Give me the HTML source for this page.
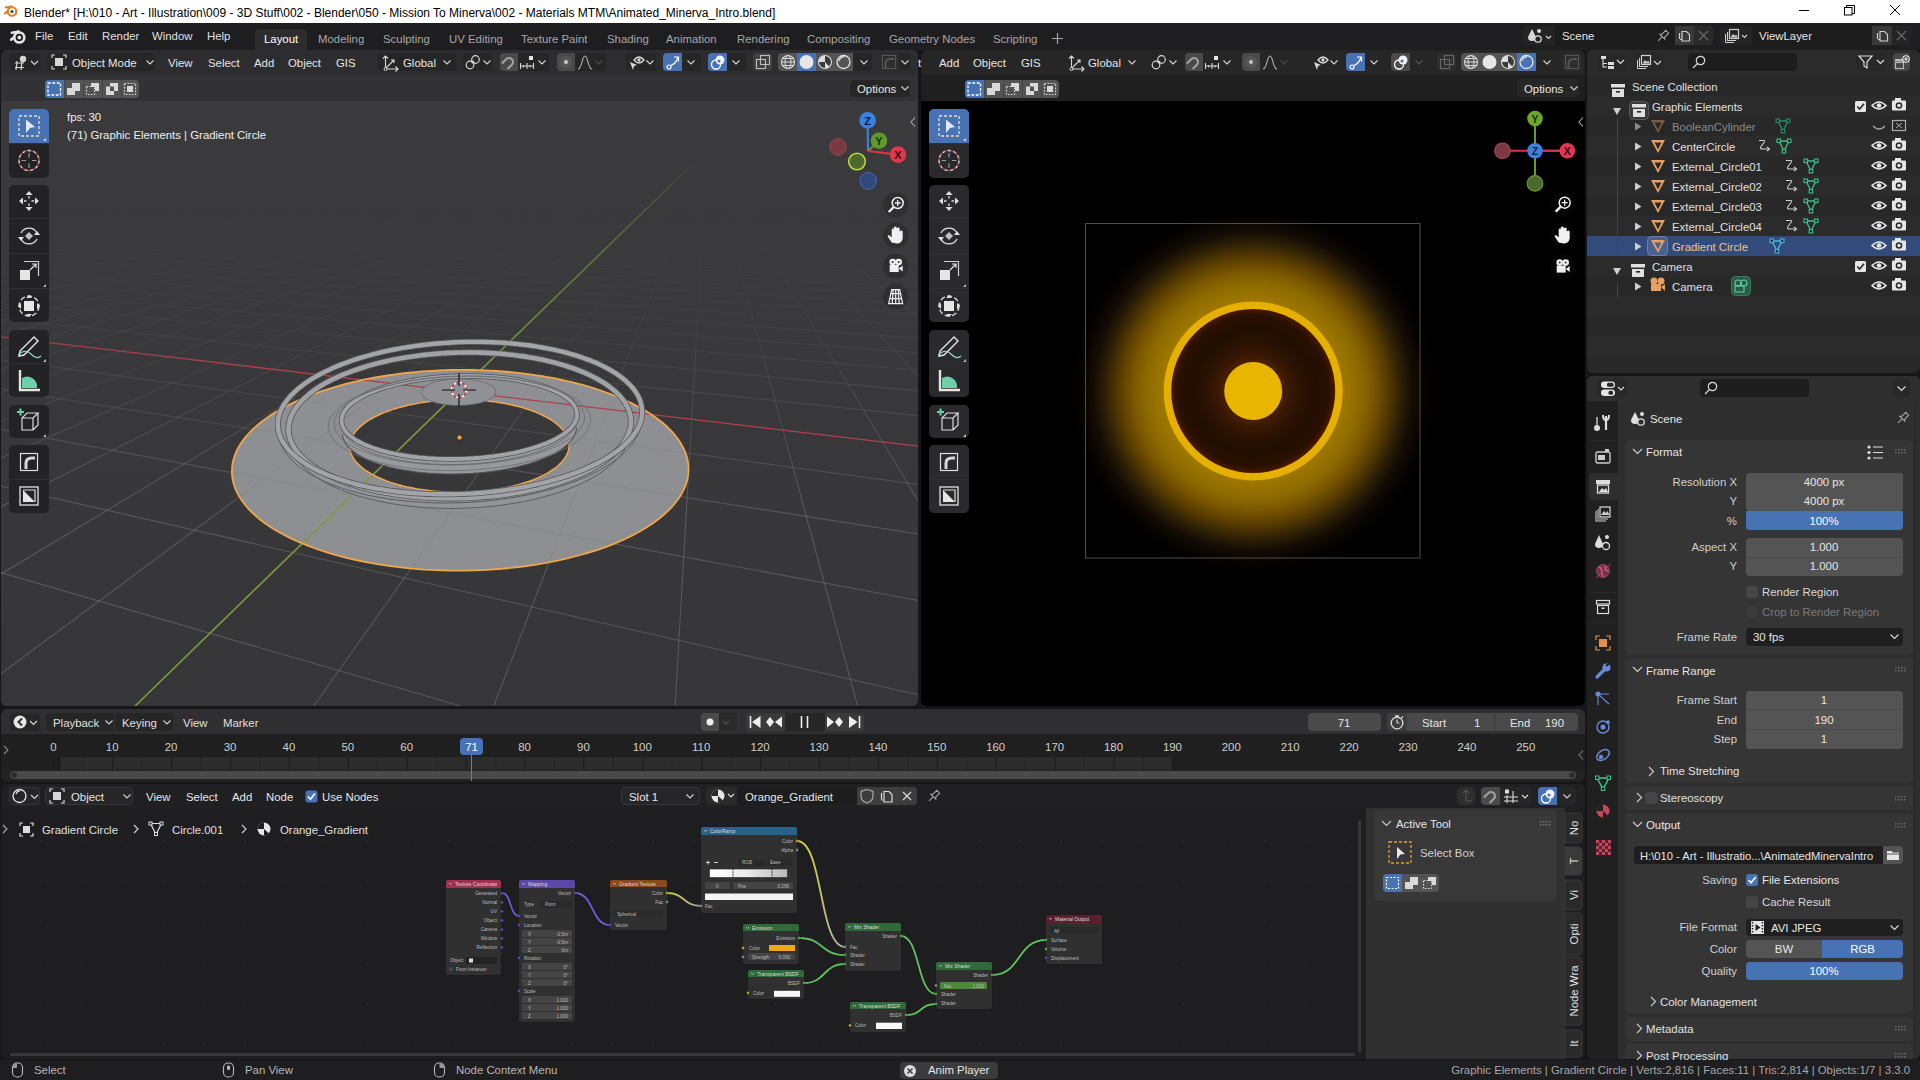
<!DOCTYPE html><html><head><meta charset="utf-8"><style>
html,body{margin:0;padding:0;width:1920px;height:1080px;overflow:hidden;background:#161518;font-family:"Liberation Sans",sans-serif;}
.t{position:absolute;white-space:pre;line-height:1;}
div{box-sizing:border-box;}
svg{overflow:visible}
</style></head><body>
<div style="position:absolute;left:0px;top:0px;width:1920px;height:23px;background:#ffffff;border-radius:0px;"></div>
<svg style="position:absolute;left:0px;top:0px;" width="30" height="23" viewBox="0 0 30 23"><path d="M5.625 7.42 L11.15 6.74" stroke="#e0821e" stroke-width="2.21" stroke-linecap="round"/><path d="M10.725 4.7 L13.275 6.825 L9.875 8.1Z" fill="#e0821e"/><path d="M5.030000000000001 13.370000000000001 L9.28 9.8" stroke="#e0821e" stroke-width="2.21" stroke-linecap="round"/><circle cx="12" cy="11.5" r="4.25" fill="#ffffff" stroke="#e0821e" stroke-width="2.21"/><circle cx="12" cy="11.5" r="1.615" fill="#2a4a6a"/></svg>
<div class="t" style="left:24px;top:6.84px;font-size:12.0px;color:#000;">Blender* [H:\010 - Art - Illustration\009 - 3D Stuff\002 - Blender\050 - Mission To Minerva\002 - Materials MTM\Animated_Minerva_Intro.blend]</div>
<svg style="position:absolute;left:1799px;top:10px;" width="10" height="1" viewBox="0 0 10 1"><rect x="0" y="0" width="10" height="1" fill="#000"/></svg>
<svg style="position:absolute;left:1844px;top:5px;" width="11" height="11" viewBox="0 0 11 11"><rect x="0.5" y="2.5" width="7.5" height="7.5" fill="none" stroke="#000"/><path d="M2.5 2.5 V0.5 H10.5 V8.5 H8" fill="none" stroke="#000"/></svg>
<svg style="position:absolute;left:1890px;top:5px;" width="10" height="10" viewBox="0 0 10 10"><path d="M0 0 L10 10 M10 0 L0 10" stroke="#000" stroke-width="1"/></svg>
<div style="position:absolute;left:0px;top:23px;width:1920px;height:27px;background:#1e1d20;border-radius:0px;"></div>
<svg style="position:absolute;left:0px;top:23px;" width="40" height="27" viewBox="0 0 40 27"><path d="M11.8 9.7 L18.3 8.9" stroke="#e6e6e6" stroke-width="2.6" stroke-linecap="round"/><path d="M17.8 6.5 L20.8 9.0 L16.8 10.5Z" fill="#e6e6e6"/><path d="M11.100000000000001 16.7 L16.1 12.5" stroke="#e6e6e6" stroke-width="2.6" stroke-linecap="round"/><circle cx="19.3" cy="14.5" r="5.0" fill="#171717" stroke="#e6e6e6" stroke-width="2.6"/><circle cx="19.3" cy="14.5" r="1.9" fill="#e6e6e6"/></svg>
<div class="t" style="left:35px;top:31.35px;font-size:11.4px;color:#e0e0e0;">File</div>
<div class="t" style="left:68px;top:31.35px;font-size:11.4px;color:#e0e0e0;">Edit</div>
<div class="t" style="left:102px;top:31.35px;font-size:11.4px;color:#e0e0e0;">Render</div>
<div class="t" style="left:152px;top:31.35px;font-size:11.4px;color:#e0e0e0;">Window</div>
<div class="t" style="left:207px;top:31.35px;font-size:11.4px;color:#e0e0e0;">Help</div>
<div style="position:absolute;left:255px;top:29px;width:52px;height:21px;background:#2c2c2c;border-radius:4px;border-bottom-left-radius:0;border-bottom-right-radius:0"></div>
<div class="t" style="left:264px;top:34.35px;font-size:11.4px;color:#ffffff;">Layout</div>
<div class="t" style="left:318px;top:34.35px;font-size:11.4px;color:#a8a8a8;">Modeling</div>
<div class="t" style="left:383px;top:34.35px;font-size:11.4px;color:#a8a8a8;">Sculpting</div>
<div class="t" style="left:449px;top:34.35px;font-size:11.4px;color:#a8a8a8;">UV Editing</div>
<div class="t" style="left:521px;top:34.35px;font-size:11.4px;color:#a8a8a8;">Texture Paint</div>
<div class="t" style="left:607px;top:34.35px;font-size:11.4px;color:#a8a8a8;">Shading</div>
<div class="t" style="left:666px;top:34.35px;font-size:11.4px;color:#a8a8a8;">Animation</div>
<div class="t" style="left:737px;top:34.35px;font-size:11.4px;color:#a8a8a8;">Rendering</div>
<div class="t" style="left:807px;top:34.35px;font-size:11.4px;color:#a8a8a8;">Compositing</div>
<div class="t" style="left:889px;top:34.35px;font-size:11.4px;color:#a8a8a8;">Geometry Nodes</div>
<div class="t" style="left:993px;top:34.35px;font-size:11.4px;color:#a8a8a8;">Scripting</div>
<svg style="position:absolute;left:1052px;top:33px;" width="11" height="11" viewBox="0 0 11 11"><path d="M5.5 0 V11 M0 5.5 H11" stroke="#a8a8a8" stroke-width="1.2"/></svg>
<div style="position:absolute;left:1523px;top:26px;width:190px;height:19px;background:#242424;border-radius:4px;"></div>
<div style="position:absolute;left:1555px;top:26px;width:120px;height:19px;background:#1c1c1c;border-radius:0px;"></div>
<div style="position:absolute;left:1675px;top:26px;width:19px;height:19px;background:#383838;border-radius:0px;"></div>
<div style="position:absolute;left:1694px;top:26px;width:19px;height:19px;background:#2a2a2a;border-radius:4px;border-top-left-radius:0;border-bottom-left-radius:0"></div>
<svg style="position:absolute;left:1527px;top:28px;" width="28" height="16" viewBox="0 0 28 16"><path d="M5 1 L9 9 A4 4 0 0 1 1 9 Z" fill="#d8d8d8"/><circle cx="12" cy="3" r="2" fill="#d8d8d8"/><circle cx="11" cy="11" r="3.2" fill="#242424" stroke="#d8d8d8" stroke-width="1.3"/><path d="M19 8 L21.5 10.5 L24 8" fill="none" stroke="#d8d8d8" stroke-width="1.1"/></svg>
<div class="t" style="left:1562px;top:31.35px;font-size:11.4px;color:#e6e6e6;">Scene</div>
<svg style="position:absolute;left:1656px;top:29px;" width="14" height="14" viewBox="0 0 14 14"><g transform="rotate(45 7 7)"><path d="M5 1 H9 V6.5 L10.5 8 H3.5 L5 6.5Z" fill="none" stroke="#a0a0a0" stroke-width="1.1"/><path d="M7 8 V14" stroke="#a0a0a0" stroke-width="1.1"/></g></svg>
<svg style="position:absolute;left:1678px;top:29px;" width="13" height="13" viewBox="0 0 13 13"><path d="M4 2.5 H8.5 L11.5 5.5 V12 H4 Z M1.5 4 V10 M2 10.5 H3.5" fill="none" stroke="#cfcfcf" stroke-width="1.2"/></svg>
<svg style="position:absolute;left:1699px;top:31px;" width="9" height="9" viewBox="0 0 9 9"><path d="M0 0 L9 9 M9 0 L0 9" stroke="#6a6a6a" stroke-width="1.1"/></svg>
<div style="position:absolute;left:1720px;top:26px;width:191px;height:19px;background:#242424;border-radius:4px;"></div>
<div style="position:absolute;left:1752px;top:26px;width:120px;height:19px;background:#1c1c1c;border-radius:0px;"></div>
<div style="position:absolute;left:1872px;top:26px;width:20px;height:19px;background:#383838;border-radius:0px;"></div>
<svg style="position:absolute;left:1725px;top:29px;" width="26" height="14" viewBox="0 0 26 14"><rect x="4.5" y="0.5" width="9" height="9" fill="none" stroke="#d0d0d0" stroke-width="1.2"/><path d="M2.5 3 V11.5 H11" fill="none" stroke="#d0d0d0" stroke-width="1.1"/><path d="M0.5 5 V13.5 H9" fill="none" stroke="#d0d0d0" stroke-width="1"/><path d="M5.5 8.5 L8 5 L10 7 L11 5.5 L13 8.5Z" fill="#d0d0d0"/><path d="M17 6 L19.5 8.5 L22 6" fill="none" stroke="#d0d0d0" stroke-width="1.1"/></svg>
<div class="t" style="left:1759px;top:31.35px;font-size:11.4px;color:#e6e6e6;">ViewLayer</div>
<svg style="position:absolute;left:1876px;top:29px;" width="13" height="13" viewBox="0 0 13 13"><path d="M4 2.5 H8.5 L11.5 5.5 V12 H4 Z M1.5 4 V10 M2 10.5 H3.5" fill="none" stroke="#cfcfcf" stroke-width="1.2"/></svg>
<svg style="position:absolute;left:1897px;top:31px;" width="9" height="9" viewBox="0 0 9 9"><path d="M0 0 L9 9 M9 0 L0 9" stroke="#6a6a6a" stroke-width="1.1"/></svg>
<div style="position:absolute;left:1px;top:50px;width:917px;height:656px;background:#3b3b3b;border-radius:6px;"></div>
<div style="position:absolute;left:921px;top:50px;width:664px;height:656px;background:#000000;border-radius:6px;"></div>
<div style="position:absolute;left:1587px;top:50px;width:333px;height:323px;background:#282828;border-radius:6px;"></div>
<div style="position:absolute;left:1587px;top:376px;width:333px;height:683px;background:#2b2b2b;border-radius:6px;"></div>
<div style="position:absolute;left:1px;top:709px;width:1584px;height:73px;background:#1d1d1d;border-radius:6px;"></div>
<div style="position:absolute;left:1px;top:784px;width:1584px;height:275px;background:#1e1d20;border-radius:6px;"></div>
<div style="position:absolute;left:0px;top:1060px;width:1920px;height:20px;background:#1e1d20;border-radius:0px;"></div>
<div style="position:absolute;left:1px;top:50px;width:917px;height:656px;background:linear-gradient(#3b3a3d,#363638);border-radius:6px;"></div>
<svg style="position:absolute;left:1px;top:50px;overflow:hidden" width="917" height="656" viewBox="0 0 917 656"><path d="M687.5 421.8 L687.5 417.6 L687.2 413.5 L686.5 409.4 L685.4 405.4 L684.0 401.5 L682.2 397.7 L680.2 394.0 L677.8 390.3 L675.2 386.7 L672.3 383.2 L669.2 379.8 L665.8 376.5 L662.2 373.3 L658.3 370.2 L654.3 367.2 L650.1 364.3 L645.7 361.5 L641.1 358.8 L636.4 356.2 L631.5 353.6 L626.5 351.2 L621.4 348.9 L616.2 346.7 L610.8 344.5 L605.3 342.5 L599.8 340.5 L594.1 338.7 L588.4 336.9 L582.5 335.2 L576.6 333.7 L570.7 332.2 L564.7 330.8 L558.6 329.5 L552.5 328.2 L546.3 327.1 L540.1 326.0 L533.8 325.1 L527.5 324.2 L521.2 323.4 L514.8 322.7 L508.4 322.0 L502.0 321.5 L495.6 321.0 L489.2 320.6 L482.8 320.3 L476.3 320.1 L469.8 320.0 L463.4 319.9 L456.9 319.9 L450.4 320.0 L444.0 320.2 L437.5 320.5 L431.1 320.8 L424.7 321.2 L418.3 321.7 L411.9 322.3 L405.5 323.0 L399.2 323.7 L392.9 324.6 L386.6 325.5 L380.3 326.5 L374.1 327.5 L368.0 328.7 L361.8 329.9 L355.8 331.3 L349.8 332.7 L343.8 334.2 L338.0 335.8 L332.1 337.5 L326.4 339.3 L320.8 341.1 L315.2 343.1 L309.7 345.1 L304.4 347.2 L299.1 349.5 L294.0 351.8 L289.0 354.2 L284.1 356.7 L279.3 359.3 L274.7 362.0 L270.3 364.8 L266.1 367.7 L262.0 370.6 L258.1 373.7 L254.4 376.9 L250.9 380.1 L247.7 383.5 L244.7 386.9 L242.0 390.4 L239.5 394.0 L237.3 397.7 L235.4 401.5 L233.8 405.3 L232.6 409.3 L231.6 413.2 L231.1 417.3 L230.9 421.4 L231.1 425.6 L231.7 429.8 L232.7 434.0 L234.2 438.3 L236.1 442.6 L238.5 446.9 L241.3 451.2 L244.6 455.5 L248.4 459.8 L252.7 464.0 L257.5 468.3 L262.8 472.4 L268.7 476.5 L275.0 480.4 L281.9 484.3 L289.3 488.1 L297.1 491.7 L305.5 495.2 L314.3 498.5 L323.6 501.7 L333.4 504.6 L343.5 507.3 L354.0 509.9 L364.9 512.1 L376.2 514.2 L387.7 515.9 L399.5 517.4 L411.4 518.7 L423.6 519.6 L435.9 520.2 L448.3 520.6 L460.7 520.6 L473.2 520.4 L485.5 519.9 L497.8 519.0 L510.0 517.9 L521.9 516.5 L533.7 514.8 L545.1 512.9 L556.3 510.7 L567.2 508.2 L577.6 505.5 L587.7 502.7 L597.4 499.6 L606.6 496.3 L615.3 492.8 L623.6 489.2 L631.4 485.4 L638.6 481.5 L645.4 477.5 L651.6 473.4 L657.3 469.3 L662.5 465.0 L667.2 460.7 L671.4 456.4 L675.0 452.0 L678.2 447.7 L680.9 443.3 L683.1 438.9 L684.8 434.6 L686.2 430.3 L687.0 426.0Z M565.1 406.1 L564.0 407.9 L562.6 409.8 L561.1 411.6 L559.4 413.4 L557.5 415.2 L555.4 417.0 L553.1 418.8 L550.6 420.5 L548.0 422.2 L545.1 423.8 L542.1 425.4 L538.9 426.9 L535.6 428.4 L532.0 429.9 L528.3 431.2 L524.5 432.5 L520.5 433.8 L516.3 434.9 L512.1 436.0 L507.7 437.0 L503.2 437.9 L498.6 438.8 L493.9 439.5 L489.1 440.2 L484.2 440.8 L479.3 441.3 L474.3 441.6 L469.3 441.9 L464.3 442.1 L459.2 442.2 L454.2 442.2 L449.2 442.1 L444.1 441.9 L439.2 441.6 L434.2 441.2 L429.4 440.7 L424.5 440.1 L419.8 439.4 L415.2 438.7 L410.7 437.8 L406.2 436.9 L401.9 435.9 L397.8 434.8 L393.7 433.6 L389.8 432.4 L386.1 431.1 L382.5 429.7 L379.1 428.3 L375.8 426.8 L372.8 425.2 L369.9 423.6 L367.2 422.0 L364.6 420.3 L362.3 418.6 L360.1 416.9 L358.2 415.1 L356.4 413.3 L354.8 411.5 L353.4 409.7 L352.2 407.9 L351.2 406.0 L350.3 404.2 L349.7 402.3 L349.2 400.4 L348.9 398.6 L348.8 396.8 L348.9 394.9 L349.1 393.1 L349.5 391.3 L350.0 389.5 L350.8 387.7 L351.6 386.0 L352.6 384.3 L353.8 382.6 L355.1 380.9 L356.6 379.3 L358.1 377.7 L359.9 376.1 L361.7 374.6 L363.6 373.1 L365.7 371.6 L367.9 370.2 L370.2 368.9 L372.6 367.5 L375.1 366.2 L377.7 365.0 L380.3 363.8 L383.1 362.6 L385.9 361.5 L388.8 360.5 L391.8 359.4 L394.9 358.5 L398.0 357.6 L401.2 356.7 L404.4 355.9 L407.7 355.1 L411.1 354.4 L414.5 353.7 L417.9 353.1 L421.4 352.5 L424.9 352.0 L428.4 351.5 L432.0 351.1 L435.6 350.7 L439.2 350.4 L442.8 350.1 L446.5 349.9 L450.1 349.7 L453.8 349.6 L457.5 349.6 L461.1 349.6 L464.8 349.6 L468.5 349.7 L472.1 349.9 L475.8 350.1 L479.4 350.3 L483.0 350.6 L486.6 351.0 L490.2 351.4 L493.7 351.8 L497.2 352.4 L500.6 352.9 L504.1 353.5 L507.4 354.2 L510.8 354.9 L514.1 355.7 L517.3 356.5 L520.4 357.4 L523.5 358.3 L526.6 359.2 L529.5 360.3 L532.4 361.3 L535.2 362.4 L538.0 363.6 L540.6 364.8 L543.1 366.0 L545.6 367.3 L547.9 368.7 L550.2 370.0 L552.3 371.5 L554.3 372.9 L556.2 374.4 L558.0 376.0 L559.6 377.5 L561.2 379.1 L562.5 380.8 L563.8 382.5 L564.9 384.2 L565.8 385.9 L566.6 387.6 L567.2 389.4 L567.7 391.2 L568.0 393.0 L568.1 394.9 L568.0 396.7 L567.8 398.6 L567.4 400.5 L566.8 402.3 L566.1 404.2Z" fill="#8e8f93" fill-rule="evenodd"/></svg>
<svg style="position:absolute;left:1px;top:50px;overflow:hidden" width="917" height="656" viewBox="0 0 917 656"><defs><linearGradient id="gfade" gradientUnits="userSpaceOnUse" x1="0" y1="160" x2="0" y2="460"><stop offset="0" stop-color="#fff" stop-opacity="0"/><stop offset="0.45" stop-color="#fff" stop-opacity="0.28"/><stop offset="1" stop-color="#fff" stop-opacity="1"/></linearGradient><mask id="gmask" maskUnits="userSpaceOnUse" x="0" y="0" width="918" height="656"><rect x="0" y="0" width="918" height="656" fill="url(#gfade)"/></mask><linearGradient id="axg" gradientUnits="userSpaceOnUse" x1="0" y1="105" x2="0" y2="330"><stop offset="0" stop-color="#7d9a3c" stop-opacity="0"/><stop offset="0.45" stop-color="#7d9a3c" stop-opacity="0.6"/><stop offset="1" stop-color="#7d9a3c"/></linearGradient><linearGradient id="axr" gradientUnits="userSpaceOnUse" x1="0" y1="105" x2="0" y2="330"><stop offset="0" stop-color="#b0404e" stop-opacity="0"/><stop offset="1" stop-color="#b0404e"/></linearGradient></defs><g mask="url(#gmask)"><line x1="-1.0" y1="141.7" x2="24.8" y2="140.2" stroke="#808080" stroke-width="1.1" opacity="0.45"/><line x1="-1.0" y1="142.3" x2="32.1" y2="140.3" stroke="#808080" stroke-width="1.1" opacity="0.45"/><line x1="-1.0" y1="142.8" x2="39.4" y2="140.4" stroke="#808080" stroke-width="1.1" opacity="0.45"/><line x1="-1.0" y1="143.4" x2="46.9" y2="140.5" stroke="#808080" stroke-width="1.1" opacity="0.45"/><line x1="-1.0" y1="144.0" x2="54.4" y2="140.6" stroke="#808080" stroke-width="1.1" opacity="0.45"/><line x1="-1.0" y1="144.7" x2="62.0" y2="140.7" stroke="#808080" stroke-width="1.1" opacity="0.45"/><line x1="-1.0" y1="145.3" x2="69.7" y2="140.8" stroke="#808080" stroke-width="1.1" opacity="0.45"/><line x1="-1.0" y1="146.0" x2="77.5" y2="140.9" stroke="#808080" stroke-width="1.1" opacity="0.45"/><line x1="-1.0" y1="146.7" x2="85.4" y2="141.0" stroke="#808080" stroke-width="1.1" opacity="0.45"/><line x1="-1.0" y1="147.4" x2="93.3" y2="141.1" stroke="#808080" stroke-width="1.1" opacity="0.45"/><line x1="-1.0" y1="148.1" x2="101.3" y2="141.2" stroke="#808080" stroke-width="1.1" opacity="0.45"/><line x1="-1.0" y1="148.9" x2="109.4" y2="141.3" stroke="#808080" stroke-width="1.1" opacity="0.45"/><line x1="-1.0" y1="149.7" x2="117.7" y2="141.4" stroke="#808080" stroke-width="1.1" opacity="0.45"/><line x1="-1.0" y1="150.6" x2="126.0" y2="141.5" stroke="#808080" stroke-width="1.1" opacity="0.45"/><line x1="-1.0" y1="151.5" x2="134.4" y2="141.6" stroke="#808080" stroke-width="1.1" opacity="0.45"/><line x1="-1.0" y1="152.4" x2="142.8" y2="141.7" stroke="#808080" stroke-width="1.1" opacity="0.45"/><line x1="-1.0" y1="153.3" x2="151.4" y2="141.8" stroke="#808080" stroke-width="1.1" opacity="0.45"/><line x1="-1.0" y1="154.3" x2="160.1" y2="141.9" stroke="#808080" stroke-width="1.1" opacity="0.45"/><line x1="-1.0" y1="155.3" x2="168.9" y2="142.0" stroke="#808080" stroke-width="1.1" opacity="0.45"/><line x1="-1.0" y1="156.4" x2="177.8" y2="142.1" stroke="#808080" stroke-width="1.1" opacity="0.45"/><line x1="-1.0" y1="157.6" x2="186.7" y2="142.3" stroke="#808080" stroke-width="1.1" opacity="0.45"/><line x1="-1.0" y1="158.7" x2="195.8" y2="142.4" stroke="#808080" stroke-width="1.1" opacity="0.45"/><line x1="-1.0" y1="160.0" x2="205.0" y2="142.5" stroke="#808080" stroke-width="1.1" opacity="0.45"/><line x1="-1.0" y1="161.3" x2="214.3" y2="142.6" stroke="#808080" stroke-width="1.1" opacity="0.45"/><line x1="-1.0" y1="162.7" x2="223.7" y2="142.7" stroke="#808080" stroke-width="1.1" opacity="0.45"/><line x1="-1.0" y1="164.1" x2="233.3" y2="142.8" stroke="#808080" stroke-width="1.1" opacity="0.45"/><line x1="-1.0" y1="165.6" x2="242.9" y2="143.0" stroke="#808080" stroke-width="1.1" opacity="0.45"/><line x1="-1.0" y1="167.2" x2="252.6" y2="143.1" stroke="#808080" stroke-width="1.1" opacity="0.45"/><line x1="-1.0" y1="168.9" x2="262.5" y2="143.2" stroke="#808080" stroke-width="1.1" opacity="0.45"/><line x1="-1.0" y1="170.7" x2="272.5" y2="143.3" stroke="#808080" stroke-width="1.1" opacity="0.45"/><line x1="-1.0" y1="172.6" x2="282.6" y2="143.5" stroke="#808080" stroke-width="1.1" opacity="0.45"/><line x1="-1.0" y1="174.6" x2="292.8" y2="143.6" stroke="#808080" stroke-width="1.1" opacity="0.45"/><line x1="-1.0" y1="176.8" x2="303.2" y2="143.7" stroke="#808080" stroke-width="1.1" opacity="0.45"/><line x1="-1.0" y1="179.1" x2="313.7" y2="143.9" stroke="#808080" stroke-width="1.1" opacity="0.45"/><line x1="-1.0" y1="181.5" x2="324.3" y2="144.0" stroke="#808080" stroke-width="1.1" opacity="0.45"/><line x1="-1.0" y1="184.2" x2="335.1" y2="144.1" stroke="#808080" stroke-width="1.1" opacity="0.45"/><line x1="-1.0" y1="187.0" x2="346.0" y2="144.3" stroke="#808080" stroke-width="1.1" opacity="0.45"/><line x1="-1.0" y1="190.0" x2="357.0" y2="144.4" stroke="#808080" stroke-width="1.1" opacity="0.45"/><line x1="-1.0" y1="193.3" x2="368.2" y2="144.6" stroke="#808080" stroke-width="1.1" opacity="0.45"/><line x1="-1.0" y1="196.9" x2="379.5" y2="144.7" stroke="#808080" stroke-width="1.1" opacity="0.45"/><line x1="-1.0" y1="200.7" x2="391.0" y2="144.8" stroke="#808080" stroke-width="1.1" opacity="0.45"/><line x1="-1.0" y1="204.9" x2="402.6" y2="145.0" stroke="#808080" stroke-width="1.1" opacity="0.45"/><line x1="-1.0" y1="209.5" x2="414.4" y2="145.1" stroke="#808080" stroke-width="1.1" opacity="0.45"/><line x1="-1.0" y1="214.6" x2="426.3" y2="145.3" stroke="#808080" stroke-width="1.1" opacity="0.45"/><line x1="-1.0" y1="220.1" x2="438.4" y2="145.4" stroke="#808080" stroke-width="1.1" opacity="0.45"/><line x1="-1.0" y1="226.3" x2="450.6" y2="145.6" stroke="#808080" stroke-width="1.1" opacity="0.45"/><line x1="-1.0" y1="233.2" x2="463.1" y2="145.8" stroke="#808080" stroke-width="1.1" opacity="0.45"/><line x1="-1.0" y1="241.0" x2="475.7" y2="145.9" stroke="#808080" stroke-width="1.1" opacity="0.45"/><line x1="-1.0" y1="249.8" x2="488.4" y2="146.1" stroke="#808080" stroke-width="1.1" opacity="0.45"/><line x1="-1.0" y1="259.8" x2="501.4" y2="146.2" stroke="#808080" stroke-width="1.1" opacity="0.45"/><line x1="-1.0" y1="271.4" x2="514.5" y2="146.4" stroke="#808080" stroke-width="1.1" opacity="0.45"/><line x1="-1.0" y1="284.9" x2="527.8" y2="146.6" stroke="#808080" stroke-width="1.1" opacity="0.45"/><line x1="-1.0" y1="300.7" x2="541.3" y2="146.7" stroke="#808080" stroke-width="1.1" opacity="0.45"/><line x1="-1.0" y1="319.7" x2="555.0" y2="146.9" stroke="#808080" stroke-width="1.1" opacity="0.45"/><line x1="-1.0" y1="342.8" x2="568.8" y2="147.1" stroke="#808080" stroke-width="1.1" opacity="0.45"/><line x1="-1.0" y1="371.6" x2="582.9" y2="147.3" stroke="#808080" stroke-width="1.1" opacity="0.45"/><line x1="-1.0" y1="408.4" x2="597.2" y2="147.5" stroke="#808080" stroke-width="1.1" opacity="0.45"/><line x1="-1.0" y1="457.1" x2="611.7" y2="147.6" stroke="#808080" stroke-width="1.1" opacity="0.45"/><line x1="-1.0" y1="524.6" x2="626.4" y2="147.8" stroke="#808080" stroke-width="1.1" opacity="0.45"/><line x1="-1.0" y1="624.5" x2="641.3" y2="148.0" stroke="#808080" stroke-width="1.1" opacity="0.45"/><line x1="312.8" y1="656.0" x2="671.9" y2="148.4" stroke="#808080" stroke-width="1.1" opacity="0.45"/><line x1="492.8" y1="656.0" x2="687.5" y2="148.6" stroke="#808080" stroke-width="1.1" opacity="0.45"/><line x1="674.1" y1="656.0" x2="703.4" y2="148.8" stroke="#808080" stroke-width="1.1" opacity="0.45"/><line x1="856.6" y1="656.0" x2="719.5" y2="149.0" stroke="#808080" stroke-width="1.1" opacity="0.45"/><line x1="917.0" y1="450.6" x2="735.8" y2="149.2" stroke="#808080" stroke-width="1.1" opacity="0.45"/><line x1="917.0" y1="325.6" x2="752.4" y2="149.4" stroke="#808080" stroke-width="1.1" opacity="0.45"/><line x1="917.0" y1="266.0" x2="769.3" y2="149.6" stroke="#808080" stroke-width="1.1" opacity="0.45"/><line x1="917.0" y1="231.1" x2="786.4" y2="149.9" stroke="#808080" stroke-width="1.1" opacity="0.45"/><line x1="917.0" y1="208.2" x2="803.8" y2="150.1" stroke="#808080" stroke-width="1.1" opacity="0.45"/><line x1="917.0" y1="192.0" x2="821.5" y2="150.3" stroke="#808080" stroke-width="1.1" opacity="0.45"/><line x1="917.0" y1="179.9" x2="839.5" y2="150.5" stroke="#808080" stroke-width="1.1" opacity="0.45"/><line x1="917.0" y1="170.6" x2="857.8" y2="150.8" stroke="#808080" stroke-width="1.1" opacity="0.45"/><line x1="917.0" y1="163.2" x2="876.4" y2="151.0" stroke="#808080" stroke-width="1.1" opacity="0.45"/><line x1="917.0" y1="157.1" x2="895.3" y2="151.2" stroke="#808080" stroke-width="1.1" opacity="0.45"/><line x1="917.0" y1="152.1" x2="914.5" y2="151.5" stroke="#808080" stroke-width="1.1" opacity="0.45"/><line x1="-1.0" y1="522.3" x2="459.9" y2="656.0" stroke="#808080" stroke-width="1.1" opacity="0.45"/><line x1="-1.0" y1="435.9" x2="917.0" y2="644.8" stroke="#808080" stroke-width="1.1" opacity="0.45"/><line x1="-1.0" y1="379.4" x2="917.0" y2="550.5" stroke="#808080" stroke-width="1.1" opacity="0.45"/><line x1="-1.0" y1="339.4" x2="917.0" y2="484.0" stroke="#808080" stroke-width="1.1" opacity="0.45"/><line x1="-1.0" y1="309.7" x2="917.0" y2="434.5" stroke="#808080" stroke-width="1.1" opacity="0.45"/><line x1="-1.0" y1="268.5" x2="917.0" y2="365.8" stroke="#808080" stroke-width="1.1" opacity="0.45"/><line x1="-1.0" y1="253.6" x2="917.0" y2="340.9" stroke="#808080" stroke-width="1.1" opacity="0.45"/><line x1="-1.0" y1="241.2" x2="917.0" y2="320.3" stroke="#808080" stroke-width="1.1" opacity="0.45"/><line x1="-1.0" y1="230.8" x2="917.0" y2="302.9" stroke="#808080" stroke-width="1.1" opacity="0.45"/><line x1="-1.0" y1="221.8" x2="917.0" y2="288.1" stroke="#808080" stroke-width="1.1" opacity="0.45"/><line x1="-1.0" y1="214.1" x2="917.0" y2="275.2" stroke="#808080" stroke-width="1.1" opacity="0.45"/><line x1="-1.0" y1="207.4" x2="917.0" y2="264.0" stroke="#808080" stroke-width="1.1" opacity="0.45"/><line x1="-1.0" y1="201.4" x2="917.0" y2="254.1" stroke="#808080" stroke-width="1.1" opacity="0.45"/><line x1="-1.0" y1="196.2" x2="917.0" y2="245.3" stroke="#808080" stroke-width="1.1" opacity="0.45"/><line x1="-1.0" y1="191.4" x2="917.0" y2="237.4" stroke="#808080" stroke-width="1.1" opacity="0.45"/><line x1="-1.0" y1="187.2" x2="917.0" y2="230.4" stroke="#808080" stroke-width="1.1" opacity="0.45"/><line x1="-1.0" y1="183.4" x2="917.0" y2="224.0" stroke="#808080" stroke-width="1.1" opacity="0.45"/><line x1="-1.0" y1="179.9" x2="917.0" y2="218.2" stroke="#808080" stroke-width="1.1" opacity="0.45"/><line x1="-1.0" y1="176.7" x2="917.0" y2="212.9" stroke="#808080" stroke-width="1.1" opacity="0.45"/><line x1="-1.0" y1="173.8" x2="917.0" y2="208.1" stroke="#808080" stroke-width="1.1" opacity="0.45"/><line x1="-1.0" y1="171.2" x2="917.0" y2="203.6" stroke="#808080" stroke-width="1.1" opacity="0.45"/><line x1="-1.0" y1="168.7" x2="917.0" y2="199.5" stroke="#808080" stroke-width="1.1" opacity="0.45"/><line x1="-1.0" y1="166.4" x2="917.0" y2="195.7" stroke="#808080" stroke-width="1.1" opacity="0.45"/><line x1="-1.0" y1="164.3" x2="917.0" y2="192.2" stroke="#808080" stroke-width="1.1" opacity="0.45"/><line x1="-1.0" y1="162.3" x2="917.0" y2="188.9" stroke="#808080" stroke-width="1.1" opacity="0.45"/><line x1="-1.0" y1="160.5" x2="917.0" y2="185.8" stroke="#808080" stroke-width="1.1" opacity="0.45"/><line x1="-1.0" y1="158.8" x2="917.0" y2="183.0" stroke="#808080" stroke-width="1.1" opacity="0.45"/><line x1="-1.0" y1="157.2" x2="917.0" y2="180.3" stroke="#808080" stroke-width="1.1" opacity="0.45"/><line x1="-1.0" y1="155.6" x2="917.0" y2="177.8" stroke="#808080" stroke-width="1.1" opacity="0.45"/><line x1="-1.0" y1="154.2" x2="917.0" y2="175.4" stroke="#808080" stroke-width="1.1" opacity="0.45"/><line x1="-1.0" y1="152.9" x2="917.0" y2="173.2" stroke="#808080" stroke-width="1.1" opacity="0.45"/><line x1="-1.0" y1="151.6" x2="917.0" y2="171.1" stroke="#808080" stroke-width="1.1" opacity="0.45"/><line x1="-1.0" y1="150.4" x2="917.0" y2="169.1" stroke="#808080" stroke-width="1.1" opacity="0.45"/><line x1="-1.0" y1="149.3" x2="917.0" y2="167.2" stroke="#808080" stroke-width="1.1" opacity="0.45"/><line x1="-1.0" y1="148.2" x2="917.0" y2="165.4" stroke="#808080" stroke-width="1.1" opacity="0.45"/><line x1="-1.0" y1="147.2" x2="917.0" y2="163.7" stroke="#808080" stroke-width="1.1" opacity="0.45"/><line x1="-1.0" y1="146.2" x2="917.0" y2="162.1" stroke="#808080" stroke-width="1.1" opacity="0.45"/><line x1="-1.0" y1="145.3" x2="917.0" y2="160.5" stroke="#808080" stroke-width="1.1" opacity="0.45"/><line x1="-1.0" y1="144.4" x2="917.0" y2="159.1" stroke="#808080" stroke-width="1.1" opacity="0.45"/><line x1="-1.0" y1="143.6" x2="917.0" y2="157.7" stroke="#808080" stroke-width="1.1" opacity="0.45"/><line x1="-1.0" y1="142.8" x2="917.0" y2="156.3" stroke="#808080" stroke-width="1.1" opacity="0.45"/><line x1="-1.0" y1="142.0" x2="917.0" y2="155.0" stroke="#808080" stroke-width="1.1" opacity="0.45"/><line x1="5.4" y1="141.3" x2="917.0" y2="153.8" stroke="#808080" stroke-width="1.1" opacity="0.45"/><line x1="15.2" y1="140.8" x2="917.0" y2="152.6" stroke="#808080" stroke-width="1.1" opacity="0.45"/><line x1="24.8" y1="140.2" x2="917.0" y2="151.5" stroke="#808080" stroke-width="1.1" opacity="0.45"/></g><line x1="-1.0" y1="286.7" x2="917.0" y2="396.2" stroke="url(#axr)" stroke-width="1.3" opacity="1"/><line x1="134.1" y1="656.0" x2="694.3" y2="111.4" stroke="url(#axg)" stroke-width="1.6" opacity="1"/></svg>
<svg style="position:absolute;left:1px;top:50px;overflow:hidden" width="917" height="656" viewBox="0 0 917 656"><path d="M687.5 421.8 L687.5 417.6 L687.2 413.5 L686.5 409.4 L685.4 405.4 L684.0 401.5 L682.2 397.7 L680.2 394.0 L677.8 390.3 L675.2 386.7 L672.3 383.2 L669.2 379.8 L665.8 376.5 L662.2 373.3 L658.3 370.2 L654.3 367.2 L650.1 364.3 L645.7 361.5 L641.1 358.8 L636.4 356.2 L631.5 353.6 L626.5 351.2 L621.4 348.9 L616.2 346.7 L610.8 344.5 L605.3 342.5 L599.8 340.5 L594.1 338.7 L588.4 336.9 L582.5 335.2 L576.6 333.7 L570.7 332.2 L564.7 330.8 L558.6 329.5 L552.5 328.2 L546.3 327.1 L540.1 326.0 L533.8 325.1 L527.5 324.2 L521.2 323.4 L514.8 322.7 L508.4 322.0 L502.0 321.5 L495.6 321.0 L489.2 320.6 L482.8 320.3 L476.3 320.1 L469.8 320.0 L463.4 319.9 L456.9 319.9 L450.4 320.0 L444.0 320.2 L437.5 320.5 L431.1 320.8 L424.7 321.2 L418.3 321.7 L411.9 322.3 L405.5 323.0 L399.2 323.7 L392.9 324.6 L386.6 325.5 L380.3 326.5 L374.1 327.5 L368.0 328.7 L361.8 329.9 L355.8 331.3 L349.8 332.7 L343.8 334.2 L338.0 335.8 L332.1 337.5 L326.4 339.3 L320.8 341.1 L315.2 343.1 L309.7 345.1 L304.4 347.2 L299.1 349.5 L294.0 351.8 L289.0 354.2 L284.1 356.7 L279.3 359.3 L274.7 362.0 L270.3 364.8 L266.1 367.7 L262.0 370.6 L258.1 373.7 L254.4 376.9 L250.9 380.1 L247.7 383.5 L244.7 386.9 L242.0 390.4 L239.5 394.0 L237.3 397.7 L235.4 401.5 L233.8 405.3 L232.6 409.3 L231.6 413.2 L231.1 417.3 L230.9 421.4 L231.1 425.6 L231.7 429.8 L232.7 434.0 L234.2 438.3 L236.1 442.6 L238.5 446.9 L241.3 451.2 L244.6 455.5 L248.4 459.8 L252.7 464.0 L257.5 468.3 L262.8 472.4 L268.7 476.5 L275.0 480.4 L281.9 484.3 L289.3 488.1 L297.1 491.7 L305.5 495.2 L314.3 498.5 L323.6 501.7 L333.4 504.6 L343.5 507.3 L354.0 509.9 L364.9 512.1 L376.2 514.2 L387.7 515.9 L399.5 517.4 L411.4 518.7 L423.6 519.6 L435.9 520.2 L448.3 520.6 L460.7 520.6 L473.2 520.4 L485.5 519.9 L497.8 519.0 L510.0 517.9 L521.9 516.5 L533.7 514.8 L545.1 512.9 L556.3 510.7 L567.2 508.2 L577.6 505.5 L587.7 502.7 L597.4 499.6 L606.6 496.3 L615.3 492.8 L623.6 489.2 L631.4 485.4 L638.6 481.5 L645.4 477.5 L651.6 473.4 L657.3 469.3 L662.5 465.0 L667.2 460.7 L671.4 456.4 L675.0 452.0 L678.2 447.7 L680.9 443.3 L683.1 438.9 L684.8 434.6 L686.2 430.3 L687.0 426.0Z" fill="none" stroke="#f0a64a" stroke-width="1.8"/><path d="M566.1 404.2 L566.8 402.3 L567.4 400.5 L567.8 398.6 L568.0 396.7 L568.1 394.9 L568.0 393.0 L567.7 391.2 L567.2 389.4 L566.6 387.6 L565.8 385.9 L564.9 384.2 L563.8 382.5 L562.5 380.8 L561.2 379.1 L559.6 377.5 L558.0 376.0 L556.2 374.4 L554.3 372.9 L552.3 371.5 L550.2 370.0 L547.9 368.7 L545.6 367.3 L543.1 366.0 L540.6 364.8 L538.0 363.6 L535.2 362.4 L532.4 361.3 L529.5 360.3 L526.6 359.2 L523.5 358.3 L520.4 357.4 L517.3 356.5 L514.1 355.7 L510.8 354.9 L507.4 354.2 L504.1 353.5 L500.6 352.9 L497.2 352.4 L493.7 351.8 L490.2 351.4 L486.6 351.0 L483.0 350.6 L479.4 350.3 L475.8 350.1 L472.1 349.9 L468.5 349.7 L464.8 349.6 L461.1 349.6 L457.5 349.6 L453.8 349.6 L450.1 349.7 L446.5 349.9 L442.8 350.1 L439.2 350.4 L435.6 350.7 L432.0 351.1 L428.4 351.5 L424.9 352.0 L421.4 352.5 L417.9 353.1 L414.5 353.7 L411.1 354.4 L407.7 355.1 L404.4 355.9 L401.2 356.7 L398.0 357.6 L394.9 358.5 L391.8 359.4 L388.8 360.5 L385.9 361.5 L383.1 362.6 L380.3 363.8 L377.7 365.0 L375.1 366.2 L372.6 367.5 L370.2 368.9 L367.9 370.2 L365.7 371.6 L363.6 373.1 L361.7 374.6 L359.9 376.1 L358.1 377.7 L356.6 379.3 L355.1 380.9 L353.8 382.6 L352.6 384.3 L351.6 386.0 L350.8 387.7 L350.0 389.5 L349.5 391.3 L349.1 393.1 L348.9 394.9 L348.8 396.8 L348.9 398.6 L349.2 400.4 L349.7 402.3 L350.3 404.2 L351.2 406.0 L352.2 407.9 L353.4 409.7 L354.8 411.5 L356.4 413.3 L358.2 415.1 L360.1 416.9 L362.3 418.6 L364.6 420.3 L367.2 422.0 L369.9 423.6 L372.8 425.2 L375.8 426.8 L379.1 428.3 L382.5 429.7 L386.1 431.1 L389.8 432.4 L393.7 433.6 L397.8 434.8 L401.9 435.9 L406.2 436.9 L410.7 437.8 L415.2 438.7 L419.8 439.4 L424.5 440.1 L429.4 440.7 L434.2 441.2 L439.2 441.6 L444.1 441.9 L449.2 442.1 L454.2 442.2 L459.2 442.2 L464.3 442.1 L469.3 441.9 L474.3 441.6 L479.3 441.3 L484.2 440.8 L489.1 440.2 L493.9 439.5 L498.6 438.8 L503.2 437.9 L507.7 437.0 L512.1 436.0 L516.3 434.9 L520.5 433.8 L524.5 432.5 L528.3 431.2 L532.0 429.9 L535.6 428.4 L538.9 426.9 L542.1 425.4 L545.1 423.8 L548.0 422.2 L550.6 420.5 L553.1 418.8 L555.4 417.0 L557.5 415.2 L559.4 413.4 L561.1 411.6 L562.6 409.8 L564.0 407.9 L565.1 406.1Z" fill="none" stroke="#f0a64a" stroke-width="1.5"/><path d="M287.5 378.4 L287.5 380.4 L287.7 382.3 L287.9 384.3 L288.3 386.3 L288.9 388.3 L289.5 390.2 L290.3 392.2 L291.2 394.2 L292.3 396.2 L293.5 398.2 L294.9 400.2 L296.4 402.1 L298.0 404.1 L299.8 406.0 L301.8 407.9 L303.8 409.9 L306.1 411.7 L308.4 413.6 L311.0 415.5 L313.7 417.3 L316.5 419.1 L319.5 420.8 L322.6 422.6 L325.8 424.3 L329.2 425.9 L332.8 427.5 L336.5 429.1 L340.3 430.6 L344.3 432.1 L348.4 433.5 L352.6 434.9 L357.0 436.2 L361.4 437.5 L366.0 438.7 L370.7 439.8 L375.5 440.9 L380.5 441.9 L385.5 442.8 L390.6 443.7 L395.8 444.5 L401.1 445.2 L406.4 445.9 L411.8 446.5 L417.3 447.0 L422.8 447.4 L428.4 447.7 L434.1 448.0 L439.7 448.2 L445.4 448.3 L451.1 448.3 L456.8 448.3 L462.5 448.1 L468.2 447.9 L473.9 447.6 L479.6 447.2 L485.3 446.8 L490.9 446.2 L496.5 445.6 L502.0 444.9 L507.5 444.1 L512.9 443.3 L518.2 442.4 L523.5 441.4 L528.7 440.3 L533.8 439.2 L538.8 438.0 L543.7 436.7 L548.5 435.4 L553.2 434.0 L557.7 432.6 L562.2 431.1 L566.5 429.6 L570.7 428.0 L574.8 426.4 L578.7 424.7 L582.5 423.0 L586.2 421.2 L589.7 419.4 L593.1 417.6 L596.3 415.7 L599.4 413.8 L602.3 411.9 L605.1 410.0 L607.7 408.0 L610.2 406.0 L612.5 404.0 L614.7 402.0 L616.7 400.0 L618.6 397.9 L620.3 395.9 L621.9 393.9 L623.3 391.8 L624.6 389.8 L625.8 387.7 L626.8 385.7 L627.6 383.6 L628.3 381.6 L628.9 379.5 L629.4 377.5 L629.7 375.5 L629.9 373.5 L630.0 371.5 L629.3 380.1 L629.2 382.1 L629.0 384.2 L628.7 386.2 L628.2 388.3 L627.6 390.4 L626.9 392.5 L626.0 394.6 L625.0 396.6 L623.9 398.7 L622.6 400.8 L621.2 402.9 L619.6 405.0 L617.9 407.1 L616.0 409.2 L614.0 411.3 L611.8 413.3 L609.5 415.4 L607.0 417.4 L604.4 419.4 L601.6 421.4 L598.7 423.3 L595.7 425.3 L592.4 427.2 L589.1 429.0 L585.6 430.9 L582.0 432.7 L578.2 434.4 L574.3 436.1 L570.2 437.8 L566.0 439.4 L561.7 441.0 L557.3 442.5 L552.8 443.9 L548.1 445.3 L543.3 446.7 L538.5 448.0 L533.5 449.2 L528.4 450.3 L523.3 451.4 L518.0 452.4 L512.7 453.3 L507.3 454.2 L501.9 455.0 L496.4 455.7 L490.8 456.3 L485.2 456.9 L479.6 457.3 L474.0 457.7 L468.3 458.0 L462.6 458.2 L456.9 458.4 L451.3 458.4 L445.6 458.4 L439.9 458.3 L434.3 458.1 L428.7 457.8 L423.2 457.5 L417.7 457.0 L412.2 456.5 L406.8 455.9 L401.5 455.3 L396.2 454.5 L391.1 453.7 L386.0 452.8 L381.0 451.8 L376.1 450.8 L371.3 449.7 L366.6 448.5 L362.1 447.3 L357.6 446.0 L353.3 444.6 L349.1 443.2 L345.0 441.8 L341.1 440.3 L337.3 438.7 L333.6 437.1 L330.0 435.4 L326.6 433.8 L323.4 432.0 L320.3 430.3 L317.3 428.4 L314.5 426.6 L311.8 424.8 L309.3 422.9 L306.9 420.9 L304.7 419.0 L302.6 417.1 L300.7 415.1 L298.9 413.1 L297.3 411.1 L295.8 409.1 L294.4 407.1 L293.2 405.0 L292.2 403.0 L291.2 401.0 L290.4 399.0 L289.8 396.9 L289.2 394.9 L288.8 392.9 L288.6 390.9 L288.4 388.9 L288.4 386.9Z" fill="#939497"/><path d="M276.8 374.5 L276.8 376.5 L277.1 378.6 L277.4 380.6 L277.9 382.7 L278.5 384.8 L279.3 386.8 L280.2 388.9 L281.3 391.0 L282.5 393.0 L283.9 395.1 L285.4 397.1 L287.1 399.2 L288.9 401.2 L290.9 403.2 L293.1 405.2 L295.4 407.2 L297.9 409.1 L300.5 411.0 L303.3 412.9 L306.3 414.8 L309.4 416.6 L312.7 418.4 L316.1 420.2 L319.7 421.9 L323.5 423.5 L327.4 425.2 L331.5 426.7 L335.7 428.3 L340.0 429.7 L344.5 431.1 L349.2 432.5 L354.0 433.8 L358.9 435.0 L363.9 436.2 L369.1 437.3 L374.3 438.3 L379.7 439.2 L385.2 440.1 L390.8 440.9 L396.5 441.6 L402.2 442.2 L408.1 442.8 L414.0 443.3 L420.0 443.6 L426.0 443.9 L432.1 444.1 L438.2 444.3 L444.3 444.3 L450.5 444.3 L456.6 444.1 L462.8 443.9 L469.0 443.6 L475.1 443.2 L481.3 442.7 L487.4 442.1 L493.4 441.5 L499.5 440.8 L505.4 439.9 L511.4 439.0 L517.2 438.1 L522.9 437.0 L528.6 435.9 L534.2 434.7 L539.7 433.4 L545.1 432.1 L550.3 430.7 L555.5 429.2 L560.5 427.7 L565.4 426.1 L570.2 424.4 L574.8 422.7 L579.3 421.0 L583.7 419.2 L587.9 417.3 L591.9 415.5 L595.8 413.5 L599.5 411.6 L603.1 409.6 L606.5 407.6 L609.8 405.5 L612.9 403.4 L615.8 401.3 L618.6 399.2 L621.2 397.1 L623.6 395.0 L625.9 392.8 L628.0 390.6 L629.9 388.5 L631.7 386.3 L633.3 384.1 L634.8 381.9 L636.1 379.8 L637.3 377.6 L638.3 375.4 L639.1 373.3 L639.8 371.1 L640.4 369.0 L640.8 366.9 L641.0 364.8 L641.2 362.7 L640.5 370.0 L640.4 372.1 L640.1 374.3 L639.7 376.4 L639.2 378.6 L638.5 380.8 L637.6 383.0 L636.6 385.2 L635.5 387.4 L634.2 389.6 L632.7 391.8 L631.1 394.1 L629.3 396.3 L627.3 398.5 L625.2 400.7 L623.0 402.9 L620.6 405.1 L618.0 407.2 L615.2 409.4 L612.3 411.5 L609.2 413.6 L606.0 415.7 L602.6 417.8 L599.0 419.8 L595.3 421.8 L591.4 423.7 L587.4 425.6 L583.2 427.5 L578.9 429.3 L574.4 431.1 L569.8 432.8 L565.0 434.5 L560.1 436.1 L555.1 437.7 L550.0 439.2 L544.8 440.6 L539.4 442.0 L533.9 443.3 L528.4 444.5 L522.7 445.6 L517.0 446.7 L511.2 447.7 L505.3 448.6 L499.4 449.4 L493.4 450.1 L487.3 450.8 L481.3 451.4 L475.2 451.9 L469.0 452.3 L462.9 452.6 L456.7 452.8 L450.6 452.9 L444.5 453.0 L438.4 452.9 L432.3 452.8 L426.2 452.6 L420.2 452.2 L414.3 451.9 L408.4 451.4 L402.6 450.8 L396.9 450.2 L391.2 449.4 L385.7 448.6 L380.2 447.7 L374.8 446.7 L369.6 445.7 L364.5 444.6 L359.4 443.4 L354.6 442.2 L349.8 440.8 L345.2 439.5 L340.7 438.0 L336.3 436.5 L332.1 435.0 L328.1 433.3 L324.2 431.7 L320.4 430.0 L316.8 428.2 L313.4 426.4 L310.1 424.6 L307.0 422.7 L304.1 420.8 L301.3 418.9 L298.6 417.0 L296.2 415.0 L293.8 413.0 L291.7 410.9 L289.7 408.9 L287.9 406.8 L286.2 404.7 L284.7 402.7 L283.3 400.6 L282.1 398.5 L281.0 396.4 L280.1 394.2 L279.3 392.1 L278.7 390.0 L278.2 387.9 L277.8 385.8 L277.6 383.7 L277.6 381.6Z" fill="#949598"/><path d="M288.4 386.9 L288.4 388.9 L288.6 390.9 L288.8 392.9 L289.2 394.9 L289.8 396.9 L290.4 399.0 L291.2 401.0 L292.2 403.0 L293.2 405.0 L294.4 407.1 L295.8 409.1 L297.3 411.1 L298.9 413.1 L300.7 415.1 L302.6 417.1 L304.7 419.0 L306.9 420.9 L309.3 422.9 L311.8 424.8 L314.5 426.6 L317.3 428.4 L320.3 430.3 L323.4 432.0 L326.6 433.8 L330.0 435.4 L333.6 437.1 L337.3 438.7 L341.1 440.3 L345.0 441.8 L349.1 443.2 L353.3 444.6 L357.6 446.0 L362.1 447.3 L366.6 448.5 L371.3 449.7 L376.1 450.8 L381.0 451.8 L386.0 452.8 L391.1 453.7 L396.2 454.5 L401.5 455.3 L406.8 455.9 L412.2 456.5 L417.7 457.0 L423.2 457.5 L428.7 457.8 L434.3 458.1 L439.9 458.3 L445.6 458.4 L451.3 458.4 L456.9 458.4 L462.6 458.2 L468.3 458.0 L474.0 457.7 L479.6 457.3 L485.2 456.9 L490.8 456.3 L496.4 455.7 L501.9 455.0 L507.3 454.2 L512.7 453.3 L518.0 452.4 L523.3 451.4 L528.4 450.3 L533.5 449.2 L538.5 448.0 L543.3 446.7 L548.1 445.3 L552.8 443.9 L557.3 442.5 L561.7 441.0 L566.0 439.4 L570.2 437.8 L574.3 436.1 L578.2 434.4 L582.0 432.7 L585.6 430.9 L589.1 429.0 L592.4 427.2 L595.7 425.3 L598.7 423.3 L601.6 421.4 L604.4 419.4 L607.0 417.4 L609.5 415.4 L611.8 413.3 L614.0 411.3 L616.0 409.2 L617.9 407.1 L619.6 405.0 L621.2 402.9 L622.6 400.8 L623.9 398.7 L625.0 396.6 L626.0 394.6 L626.9 392.5 L627.6 390.4 L628.2 388.3 L628.7 386.2 L629.0 384.2 L629.2 382.1 L629.3 380.1" fill="none" stroke="#5c5c60" stroke-width="1"/><path d="M277.6 381.6 L277.6 383.7 L277.8 385.8 L278.2 387.9 L278.7 390.0 L279.3 392.1 L280.1 394.2 L281.0 396.4 L282.1 398.5 L283.3 400.6 L284.7 402.7 L286.2 404.7 L287.9 406.8 L289.7 408.9 L291.7 410.9 L293.8 413.0 L296.2 415.0 L298.6 417.0 L301.3 418.9 L304.1 420.8 L307.0 422.7 L310.1 424.6 L313.4 426.4 L316.8 428.2 L320.4 430.0 L324.2 431.7 L328.1 433.3 L332.1 435.0 L336.3 436.5 L340.7 438.0 L345.2 439.5 L349.8 440.8 L354.6 442.2 L359.4 443.4 L364.5 444.6 L369.6 445.7 L374.8 446.7 L380.2 447.7 L385.7 448.6 L391.2 449.4 L396.9 450.2 L402.6 450.8 L408.4 451.4 L414.3 451.9 L420.2 452.2 L426.2 452.6 L432.3 452.8 L438.4 452.9 L444.5 453.0 L450.6 452.9 L456.7 452.8 L462.9 452.6 L469.0 452.3 L475.2 451.9 L481.3 451.4 L487.3 450.8 L493.4 450.1 L499.4 449.4 L505.3 448.6 L511.2 447.7 L517.0 446.7 L522.7 445.6 L528.4 444.5 L533.9 443.3 L539.4 442.0 L544.8 440.6 L550.0 439.2 L555.1 437.7 L560.1 436.1 L565.0 434.5 L569.8 432.8 L574.4 431.1 L578.9 429.3 L583.2 427.5 L587.4 425.6 L591.4 423.7 L595.3 421.8 L599.0 419.8 L602.6 417.8 L606.0 415.7 L609.2 413.6 L612.3 411.5 L615.2 409.4 L618.0 407.2 L620.6 405.1 L623.0 402.9 L625.2 400.7 L627.3 398.5 L629.3 396.3 L631.1 394.1 L632.7 391.8 L634.2 389.6 L635.5 387.4 L636.6 385.2 L637.6 383.0 L638.5 380.8 L639.2 378.6 L639.7 376.4 L640.1 374.3 L640.4 372.1 L640.5 370.0" fill="none" stroke="#5c5c60" stroke-width="1"/><path d="M628.9 379.5 L629.4 377.5 L629.7 375.5 L629.9 373.5 L630.0 371.5 L629.9 369.6 L629.7 367.6 L629.4 365.7 L629.0 363.8 L628.4 361.9 L627.8 360.0 L627.0 358.2 L626.1 356.4 L625.1 354.6 L624.1 352.8 L622.9 351.0 L621.6 349.3 L620.2 347.6 L618.8 345.9 L617.2 344.3 L615.6 342.7 L613.9 341.1 L612.0 339.6 L610.2 338.0 L608.2 336.5 L606.2 335.1 L604.1 333.6 L601.9 332.2 L599.6 330.9 L597.3 329.5 L594.9 328.2 L592.5 327.0 L590.0 325.7 L587.5 324.5 L584.9 323.3 L582.2 322.2 L579.5 321.1 L576.8 320.0 L574.0 319.0 L571.1 317.9 L568.2 317.0 L565.3 316.0 L562.3 315.1 L559.3 314.2 L556.3 313.4 L553.2 312.5 L550.1 311.8 L546.9 311.0 L543.8 310.3 L540.6 309.6 L537.3 308.9 L534.1 308.3 L530.8 307.7 L527.5 307.2 L524.2 306.6 L520.8 306.1 L517.5 305.7 L514.1 305.2 L510.7 304.8 L507.3 304.5 L503.9 304.1 L500.4 303.8 L497.0 303.5 L493.5 303.3 L490.0 303.1 L486.6 302.9 L483.1 302.7 L479.6 302.6 L476.1 302.5 L472.6 302.5 L469.1 302.4 L465.5 302.5 L462.0 302.5 L458.5 302.5 L455.0 302.6 L451.5 302.8 L448.0 302.9 L444.5 303.1 L441.0 303.3 L437.5 303.6 L434.0 303.9 L430.5 304.2 L427.0 304.5 L423.6 304.9 L420.1 305.3 L416.7 305.7 L413.3 306.2 L409.8 306.7 L406.4 307.2 L403.1 307.7 L399.7 308.3 L396.4 308.9 L393.0 309.6 L389.7 310.3 L386.4 311.0 L383.2 311.7 L380.0 312.5 L376.7 313.3 L373.6 314.1 L370.4 314.9 L367.3 315.8 L364.2 316.7 L361.2 317.7 L358.1 318.7 L355.1 319.7 L352.2 320.7 L349.3 321.8 L346.4 322.9 L343.6 324.0 L340.8 325.2 L338.1 326.4 L335.4 327.6 L332.8 328.8 L330.2 330.1 L327.7 331.4 L325.2 332.8 L322.8 334.1 L320.4 335.5 L318.1 336.9 L315.9 338.4 L313.7 339.9 L311.6 341.4 L309.6 342.9 L307.6 344.5 L305.8 346.1 L304.0 347.7 L302.2 349.3 L300.6 351.0 L299.0 352.7 L297.6 354.4 L296.2 356.1 L294.9 357.9 L293.7 359.6 L292.6 361.4 L291.6 363.3 L290.7 365.1 L289.9 366.9 L289.2 368.8 L288.7 370.7 L288.2 372.6 L287.9 374.5 L287.6 376.5 L287.5 378.4 L287.5 380.4 L287.7 382.3 L287.9 384.3 L288.3 386.3 L288.9 388.3 L289.5 390.2 L290.3 392.2 L291.2 394.2 L292.3 396.2 L293.5 398.2 L294.9 400.2 L296.4 402.1 L298.0 404.1 L299.8 406.0 L301.8 407.9 L303.8 409.9 L306.1 411.7 L308.4 413.6 L311.0 415.5 L313.7 417.3 L316.5 419.1 L319.5 420.8 L322.6 422.6 L325.8 424.3 L329.2 425.9 L332.8 427.5 L336.5 429.1 L340.3 430.6 L344.3 432.1 L348.4 433.5 L352.6 434.9 L357.0 436.2 L361.4 437.5 L366.0 438.7 L370.7 439.8 L375.5 440.9 L380.5 441.9 L385.5 442.8 L390.6 443.7 L395.8 444.5 L401.1 445.2 L406.4 445.9 L411.8 446.5 L417.3 447.0 L422.8 447.4 L428.4 447.7 L434.1 448.0 L439.7 448.2 L445.4 448.3 L451.1 448.3 L456.8 448.3 L462.5 448.1 L468.2 447.9 L473.9 447.6 L479.6 447.2 L485.3 446.8 L490.9 446.2 L496.5 445.6 L502.0 444.9 L507.5 444.1 L512.9 443.3 L518.2 442.4 L523.5 441.4 L528.7 440.3 L533.8 439.2 L538.8 438.0 L543.7 436.7 L548.5 435.4 L553.2 434.0 L557.7 432.6 L562.2 431.1 L566.5 429.6 L570.7 428.0 L574.8 426.4 L578.7 424.7 L582.5 423.0 L586.2 421.2 L589.7 419.4 L593.1 417.6 L596.3 415.7 L599.4 413.8 L602.3 411.9 L605.1 410.0 L607.7 408.0 L610.2 406.0 L612.5 404.0 L614.7 402.0 L616.7 400.0 L618.6 397.9 L620.3 395.9 L621.9 393.9 L623.3 391.8 L624.6 389.8 L625.8 387.7 L626.8 385.7 L627.6 383.6 L628.3 381.6Z" fill="none" stroke="#58585c" stroke-width="6.199999999999999"/><path d="M628.9 379.5 L629.4 377.5 L629.7 375.5 L629.9 373.5 L630.0 371.5 L629.9 369.6 L629.7 367.6 L629.4 365.7 L629.0 363.8 L628.4 361.9 L627.8 360.0 L627.0 358.2 L626.1 356.4 L625.1 354.6 L624.1 352.8 L622.9 351.0 L621.6 349.3 L620.2 347.6 L618.8 345.9 L617.2 344.3 L615.6 342.7 L613.9 341.1 L612.0 339.6 L610.2 338.0 L608.2 336.5 L606.2 335.1 L604.1 333.6 L601.9 332.2 L599.6 330.9 L597.3 329.5 L594.9 328.2 L592.5 327.0 L590.0 325.7 L587.5 324.5 L584.9 323.3 L582.2 322.2 L579.5 321.1 L576.8 320.0 L574.0 319.0 L571.1 317.9 L568.2 317.0 L565.3 316.0 L562.3 315.1 L559.3 314.2 L556.3 313.4 L553.2 312.5 L550.1 311.8 L546.9 311.0 L543.8 310.3 L540.6 309.6 L537.3 308.9 L534.1 308.3 L530.8 307.7 L527.5 307.2 L524.2 306.6 L520.8 306.1 L517.5 305.7 L514.1 305.2 L510.7 304.8 L507.3 304.5 L503.9 304.1 L500.4 303.8 L497.0 303.5 L493.5 303.3 L490.0 303.1 L486.6 302.9 L483.1 302.7 L479.6 302.6 L476.1 302.5 L472.6 302.5 L469.1 302.4 L465.5 302.5 L462.0 302.5 L458.5 302.5 L455.0 302.6 L451.5 302.8 L448.0 302.9 L444.5 303.1 L441.0 303.3 L437.5 303.6 L434.0 303.9 L430.5 304.2 L427.0 304.5 L423.6 304.9 L420.1 305.3 L416.7 305.7 L413.3 306.2 L409.8 306.7 L406.4 307.2 L403.1 307.7 L399.7 308.3 L396.4 308.9 L393.0 309.6 L389.7 310.3 L386.4 311.0 L383.2 311.7 L380.0 312.5 L376.7 313.3 L373.6 314.1 L370.4 314.9 L367.3 315.8 L364.2 316.7 L361.2 317.7 L358.1 318.7 L355.1 319.7 L352.2 320.7 L349.3 321.8 L346.4 322.9 L343.6 324.0 L340.8 325.2 L338.1 326.4 L335.4 327.6 L332.8 328.8 L330.2 330.1 L327.7 331.4 L325.2 332.8 L322.8 334.1 L320.4 335.5 L318.1 336.9 L315.9 338.4 L313.7 339.9 L311.6 341.4 L309.6 342.9 L307.6 344.5 L305.8 346.1 L304.0 347.7 L302.2 349.3 L300.6 351.0 L299.0 352.7 L297.6 354.4 L296.2 356.1 L294.9 357.9 L293.7 359.6 L292.6 361.4 L291.6 363.3 L290.7 365.1 L289.9 366.9 L289.2 368.8 L288.7 370.7 L288.2 372.6 L287.9 374.5 L287.6 376.5 L287.5 378.4 L287.5 380.4 L287.7 382.3 L287.9 384.3 L288.3 386.3 L288.9 388.3 L289.5 390.2 L290.3 392.2 L291.2 394.2 L292.3 396.2 L293.5 398.2 L294.9 400.2 L296.4 402.1 L298.0 404.1 L299.8 406.0 L301.8 407.9 L303.8 409.9 L306.1 411.7 L308.4 413.6 L311.0 415.5 L313.7 417.3 L316.5 419.1 L319.5 420.8 L322.6 422.6 L325.8 424.3 L329.2 425.9 L332.8 427.5 L336.5 429.1 L340.3 430.6 L344.3 432.1 L348.4 433.5 L352.6 434.9 L357.0 436.2 L361.4 437.5 L366.0 438.7 L370.7 439.8 L375.5 440.9 L380.5 441.9 L385.5 442.8 L390.6 443.7 L395.8 444.5 L401.1 445.2 L406.4 445.9 L411.8 446.5 L417.3 447.0 L422.8 447.4 L428.4 447.7 L434.1 448.0 L439.7 448.2 L445.4 448.3 L451.1 448.3 L456.8 448.3 L462.5 448.1 L468.2 447.9 L473.9 447.6 L479.6 447.2 L485.3 446.8 L490.9 446.2 L496.5 445.6 L502.0 444.9 L507.5 444.1 L512.9 443.3 L518.2 442.4 L523.5 441.4 L528.7 440.3 L533.8 439.2 L538.8 438.0 L543.7 436.7 L548.5 435.4 L553.2 434.0 L557.7 432.6 L562.2 431.1 L566.5 429.6 L570.7 428.0 L574.8 426.4 L578.7 424.7 L582.5 423.0 L586.2 421.2 L589.7 419.4 L593.1 417.6 L596.3 415.7 L599.4 413.8 L602.3 411.9 L605.1 410.0 L607.7 408.0 L610.2 406.0 L612.5 404.0 L614.7 402.0 L616.7 400.0 L618.6 397.9 L620.3 395.9 L621.9 393.9 L623.3 391.8 L624.6 389.8 L625.8 387.7 L626.8 385.7 L627.6 383.6 L628.3 381.6Z" fill="none" stroke="#a1a2a5" stroke-width="4.6"/><path d="M640.4 369.0 L640.8 366.9 L641.0 364.8 L641.2 362.7 L641.1 360.6 L641.0 358.6 L640.7 356.6 L640.3 354.5 L639.8 352.6 L639.1 350.6 L638.4 348.7 L637.5 346.8 L636.5 344.9 L635.4 343.0 L634.2 341.2 L632.9 339.4 L631.4 337.7 L629.9 335.9 L628.3 334.2 L626.6 332.6 L624.8 330.9 L622.9 329.3 L620.9 327.7 L618.9 326.2 L616.8 324.7 L614.6 323.2 L612.3 321.8 L609.9 320.4 L607.5 319.0 L605.0 317.7 L602.5 316.4 L599.9 315.1 L597.2 313.8 L594.5 312.6 L591.7 311.5 L588.9 310.3 L586.0 309.3 L583.0 308.2 L580.1 307.2 L577.0 306.2 L574.0 305.2 L570.9 304.3 L567.7 303.4 L564.5 302.5 L561.3 301.7 L558.0 300.9 L554.7 300.2 L551.4 299.4 L548.1 298.8 L544.7 298.1 L541.3 297.5 L537.8 296.9 L534.4 296.3 L530.9 295.8 L527.4 295.3 L523.9 294.9 L520.4 294.5 L516.8 294.1 L513.2 293.7 L509.6 293.4 L506.0 293.1 L502.4 292.8 L498.8 292.6 L495.2 292.4 L491.5 292.2 L487.9 292.1 L484.2 292.0 L480.5 291.9 L476.9 291.9 L473.2 291.9 L469.5 291.9 L465.8 291.9 L462.1 292.0 L458.4 292.1 L454.8 292.3 L451.1 292.5 L447.4 292.7 L443.7 292.9 L440.1 293.2 L436.4 293.5 L432.7 293.8 L429.1 294.2 L425.4 294.6 L421.8 295.0 L418.2 295.5 L414.6 295.9 L411.0 296.5 L407.4 297.0 L403.8 297.6 L400.3 298.2 L396.8 298.8 L393.3 299.5 L389.8 300.2 L386.3 300.9 L382.8 301.7 L379.4 302.5 L376.0 303.3 L372.6 304.2 L369.3 305.1 L366.0 306.0 L362.7 306.9 L359.4 307.9 L356.2 308.9 L353.0 309.9 L349.9 311.0 L346.7 312.1 L343.7 313.2 L340.6 314.4 L337.6 315.6 L334.7 316.8 L331.8 318.1 L328.9 319.4 L326.1 320.7 L323.4 322.0 L320.7 323.4 L318.1 324.8 L315.5 326.2 L313.0 327.7 L310.5 329.2 L308.1 330.7 L305.8 332.2 L303.5 333.8 L301.4 335.4 L299.3 337.0 L297.2 338.7 L295.3 340.4 L293.4 342.1 L291.6 343.8 L289.9 345.6 L288.3 347.4 L286.8 349.2 L285.4 351.0 L284.0 352.9 L282.8 354.7 L281.7 356.6 L280.7 358.6 L279.8 360.5 L279.0 362.4 L278.3 364.4 L277.8 366.4 L277.3 368.4 L277.0 370.4 L276.8 372.4 L276.8 374.5 L276.8 376.5 L277.1 378.6 L277.4 380.6 L277.9 382.7 L278.5 384.8 L279.3 386.8 L280.2 388.9 L281.3 391.0 L282.5 393.0 L283.9 395.1 L285.4 397.1 L287.1 399.2 L288.9 401.2 L290.9 403.2 L293.1 405.2 L295.4 407.2 L297.9 409.1 L300.5 411.0 L303.3 412.9 L306.3 414.8 L309.4 416.6 L312.7 418.4 L316.1 420.2 L319.7 421.9 L323.5 423.5 L327.4 425.2 L331.5 426.7 L335.7 428.3 L340.0 429.7 L344.5 431.1 L349.2 432.5 L354.0 433.8 L358.9 435.0 L363.9 436.2 L369.1 437.3 L374.3 438.3 L379.7 439.2 L385.2 440.1 L390.8 440.9 L396.5 441.6 L402.2 442.2 L408.1 442.8 L414.0 443.3 L420.0 443.6 L426.0 443.9 L432.1 444.1 L438.2 444.3 L444.3 444.3 L450.5 444.3 L456.6 444.1 L462.8 443.9 L469.0 443.6 L475.1 443.2 L481.3 442.7 L487.4 442.1 L493.4 441.5 L499.5 440.8 L505.4 439.9 L511.4 439.0 L517.2 438.1 L522.9 437.0 L528.6 435.9 L534.2 434.7 L539.7 433.4 L545.1 432.1 L550.3 430.7 L555.5 429.2 L560.5 427.7 L565.4 426.1 L570.2 424.4 L574.8 422.7 L579.3 421.0 L583.7 419.2 L587.9 417.3 L591.9 415.5 L595.8 413.5 L599.5 411.6 L603.1 409.6 L606.5 407.6 L609.8 405.5 L612.9 403.4 L615.8 401.3 L618.6 399.2 L621.2 397.1 L623.6 395.0 L625.9 392.8 L628.0 390.6 L629.9 388.5 L631.7 386.3 L633.3 384.1 L634.8 381.9 L636.1 379.8 L637.3 377.6 L638.3 375.4 L639.1 373.3 L639.8 371.1Z" fill="none" stroke="#58585c" stroke-width="6.0"/><path d="M640.4 369.0 L640.8 366.9 L641.0 364.8 L641.2 362.7 L641.1 360.6 L641.0 358.6 L640.7 356.6 L640.3 354.5 L639.8 352.6 L639.1 350.6 L638.4 348.7 L637.5 346.8 L636.5 344.9 L635.4 343.0 L634.2 341.2 L632.9 339.4 L631.4 337.7 L629.9 335.9 L628.3 334.2 L626.6 332.6 L624.8 330.9 L622.9 329.3 L620.9 327.7 L618.9 326.2 L616.8 324.7 L614.6 323.2 L612.3 321.8 L609.9 320.4 L607.5 319.0 L605.0 317.7 L602.5 316.4 L599.9 315.1 L597.2 313.8 L594.5 312.6 L591.7 311.5 L588.9 310.3 L586.0 309.3 L583.0 308.2 L580.1 307.2 L577.0 306.2 L574.0 305.2 L570.9 304.3 L567.7 303.4 L564.5 302.5 L561.3 301.7 L558.0 300.9 L554.7 300.2 L551.4 299.4 L548.1 298.8 L544.7 298.1 L541.3 297.5 L537.8 296.9 L534.4 296.3 L530.9 295.8 L527.4 295.3 L523.9 294.9 L520.4 294.5 L516.8 294.1 L513.2 293.7 L509.6 293.4 L506.0 293.1 L502.4 292.8 L498.8 292.6 L495.2 292.4 L491.5 292.2 L487.9 292.1 L484.2 292.0 L480.5 291.9 L476.9 291.9 L473.2 291.9 L469.5 291.9 L465.8 291.9 L462.1 292.0 L458.4 292.1 L454.8 292.3 L451.1 292.5 L447.4 292.7 L443.7 292.9 L440.1 293.2 L436.4 293.5 L432.7 293.8 L429.1 294.2 L425.4 294.6 L421.8 295.0 L418.2 295.5 L414.6 295.9 L411.0 296.5 L407.4 297.0 L403.8 297.6 L400.3 298.2 L396.8 298.8 L393.3 299.5 L389.8 300.2 L386.3 300.9 L382.8 301.7 L379.4 302.5 L376.0 303.3 L372.6 304.2 L369.3 305.1 L366.0 306.0 L362.7 306.9 L359.4 307.9 L356.2 308.9 L353.0 309.9 L349.9 311.0 L346.7 312.1 L343.7 313.2 L340.6 314.4 L337.6 315.6 L334.7 316.8 L331.8 318.1 L328.9 319.4 L326.1 320.7 L323.4 322.0 L320.7 323.4 L318.1 324.8 L315.5 326.2 L313.0 327.7 L310.5 329.2 L308.1 330.7 L305.8 332.2 L303.5 333.8 L301.4 335.4 L299.3 337.0 L297.2 338.7 L295.3 340.4 L293.4 342.1 L291.6 343.8 L289.9 345.6 L288.3 347.4 L286.8 349.2 L285.4 351.0 L284.0 352.9 L282.8 354.7 L281.7 356.6 L280.7 358.6 L279.8 360.5 L279.0 362.4 L278.3 364.4 L277.8 366.4 L277.3 368.4 L277.0 370.4 L276.8 372.4 L276.8 374.5 L276.8 376.5 L277.1 378.6 L277.4 380.6 L277.9 382.7 L278.5 384.8 L279.3 386.8 L280.2 388.9 L281.3 391.0 L282.5 393.0 L283.9 395.1 L285.4 397.1 L287.1 399.2 L288.9 401.2 L290.9 403.2 L293.1 405.2 L295.4 407.2 L297.9 409.1 L300.5 411.0 L303.3 412.9 L306.3 414.8 L309.4 416.6 L312.7 418.4 L316.1 420.2 L319.7 421.9 L323.5 423.5 L327.4 425.2 L331.5 426.7 L335.7 428.3 L340.0 429.7 L344.5 431.1 L349.2 432.5 L354.0 433.8 L358.9 435.0 L363.9 436.2 L369.1 437.3 L374.3 438.3 L379.7 439.2 L385.2 440.1 L390.8 440.9 L396.5 441.6 L402.2 442.2 L408.1 442.8 L414.0 443.3 L420.0 443.6 L426.0 443.9 L432.1 444.1 L438.2 444.3 L444.3 444.3 L450.5 444.3 L456.6 444.1 L462.8 443.9 L469.0 443.6 L475.1 443.2 L481.3 442.7 L487.4 442.1 L493.4 441.5 L499.5 440.8 L505.4 439.9 L511.4 439.0 L517.2 438.1 L522.9 437.0 L528.6 435.9 L534.2 434.7 L539.7 433.4 L545.1 432.1 L550.3 430.7 L555.5 429.2 L560.5 427.7 L565.4 426.1 L570.2 424.4 L574.8 422.7 L579.3 421.0 L583.7 419.2 L587.9 417.3 L591.9 415.5 L595.8 413.5 L599.5 411.6 L603.1 409.6 L606.5 407.6 L609.8 405.5 L612.9 403.4 L615.8 401.3 L618.6 399.2 L621.2 397.1 L623.6 395.0 L625.9 392.8 L628.0 390.6 L629.9 388.5 L631.7 386.3 L633.3 384.1 L634.8 381.9 L636.1 379.8 L637.3 377.6 L638.3 375.4 L639.1 373.3 L639.8 371.1Z" fill="none" stroke="#a3a4a7" stroke-width="4.4"/><path d="M340.5 370.7 L340.6 371.8 L340.7 372.9 L341.0 374.0 L341.3 375.1 L341.7 376.2 L342.2 377.3 L342.7 378.4 L343.4 379.5 L344.2 380.6 L345.0 381.7 L345.9 382.7 L347.0 383.8 L348.1 384.9 L349.3 385.9 L350.6 387.0 L352.0 388.0 L353.5 389.0 L355.1 390.0 L356.7 391.0 L358.5 392.0 L360.4 393.0 L362.3 393.9 L364.3 394.8 L366.4 395.7 L368.7 396.6 L370.9 397.5 L373.3 398.3 L375.8 399.1 L378.3 399.9 L380.9 400.7 L383.6 401.4 L386.4 402.1 L389.3 402.8 L392.2 403.4 L395.2 404.0 L398.2 404.6 L401.3 405.2 L404.5 405.7 L407.7 406.2 L411.0 406.6 L414.4 407.0 L417.7 407.4 L421.2 407.7 L424.6 408.0 L428.1 408.3 L431.7 408.5 L435.2 408.7 L438.8 408.8 L442.5 408.9 L446.1 409.0 L449.7 409.0 L453.4 409.0 L457.1 408.9 L460.7 408.8 L464.4 408.7 L468.0 408.5 L471.7 408.3 L475.3 408.0 L478.9 407.8 L482.5 407.4 L486.1 407.0 L489.6 406.6 L493.1 406.2 L496.6 405.7 L500.0 405.2 L503.4 404.6 L506.7 404.0 L510.0 403.4 L513.2 402.8 L516.4 402.1 L519.5 401.4 L522.5 400.6 L525.5 399.8 L528.4 399.0 L531.2 398.2 L534.0 397.3 L536.6 396.5 L539.2 395.6 L541.8 394.6 L544.2 393.7 L546.5 392.7 L548.8 391.7 L551.0 390.7 L553.1 389.7 L555.1 388.7 L557.0 387.6 L558.8 386.5 L560.6 385.5 L562.2 384.4 L563.8 383.3 L565.2 382.2 L566.6 381.1 L567.8 379.9 L569.0 378.8 L570.1 377.7 L571.1 376.6 L572.0 375.4 L572.8 374.3 L573.5 373.2 L574.1 372.0 L574.7 370.9 L575.1 369.8 L575.5 368.6 L575.8 367.5 L575.9 366.4 L576.0 365.3 L576.0 364.2 L575.4 377.3 L575.3 378.5 L575.2 379.6 L575.1 380.8 L574.8 382.0 L574.4 383.2 L574.0 384.4 L573.5 385.5 L572.8 386.7 L572.1 387.9 L571.3 389.1 L570.4 390.3 L569.4 391.5 L568.3 392.6 L567.2 393.8 L565.9 395.0 L564.6 396.1 L563.1 397.3 L561.6 398.4 L559.9 399.6 L558.2 400.7 L556.4 401.8 L554.5 402.9 L552.5 404.0 L550.4 405.0 L548.3 406.1 L546.0 407.1 L543.7 408.1 L541.3 409.1 L538.8 410.1 L536.2 411.0 L533.5 411.9 L530.8 412.8 L528.0 413.7 L525.1 414.5 L522.1 415.3 L519.1 416.1 L516.1 416.9 L512.9 417.6 L509.7 418.2 L506.5 418.9 L503.2 419.5 L499.8 420.1 L496.4 420.6 L493.0 421.1 L489.5 421.6 L486.0 422.0 L482.5 422.4 L478.9 422.7 L475.3 423.0 L471.7 423.3 L468.1 423.5 L464.5 423.7 L460.9 423.8 L457.2 423.9 L453.6 424.0 L450.0 424.0 L446.4 424.0 L442.8 423.9 L439.2 423.8 L435.6 423.6 L432.1 423.4 L428.6 423.2 L425.1 422.9 L421.6 422.6 L418.2 422.2 L414.9 421.9 L411.6 421.4 L408.3 420.9 L405.1 420.4 L402.0 419.9 L398.9 419.3 L395.8 418.7 L392.9 418.1 L390.0 417.4 L387.2 416.7 L384.4 415.9 L381.7 415.2 L379.1 414.4 L376.6 413.5 L374.2 412.7 L371.8 411.8 L369.5 410.9 L367.3 410.0 L365.2 409.0 L363.2 408.1 L361.3 407.1 L359.4 406.1 L357.7 405.0 L356.0 404.0 L354.4 402.9 L353.0 401.9 L351.6 400.8 L350.3 399.7 L349.1 398.6 L347.9 397.5 L346.9 396.3 L346.0 395.2 L345.1 394.1 L344.4 392.9 L343.7 391.8 L343.1 390.6 L342.7 389.5 L342.3 388.3 L341.9 387.2 L341.7 386.0 L341.6 384.9 L341.5 383.7Z" fill="#98999c"/><path d="M341.5 383.7 L341.6 384.9 L341.7 386.0 L341.9 387.2 L342.3 388.3 L342.7 389.5 L343.1 390.6 L343.7 391.8 L344.4 392.9 L345.1 394.1 L346.0 395.2 L346.9 396.3 L347.9 397.5 L349.1 398.6 L350.3 399.7 L351.6 400.8 L353.0 401.9 L354.4 402.9 L356.0 404.0 L357.7 405.0 L359.4 406.1 L361.3 407.1 L363.2 408.1 L365.2 409.0 L367.3 410.0 L369.5 410.9 L371.8 411.8 L374.2 412.7 L376.6 413.5 L379.1 414.4 L381.7 415.2 L384.4 415.9 L387.2 416.7 L390.0 417.4 L392.9 418.1 L395.8 418.7 L398.9 419.3 L402.0 419.9 L405.1 420.4 L408.3 420.9 L411.6 421.4 L414.9 421.9 L418.2 422.2 L421.6 422.6 L425.1 422.9 L428.6 423.2 L432.1 423.4 L435.6 423.6 L439.2 423.8 L442.8 423.9 L446.4 424.0 L450.0 424.0 L453.6 424.0 L457.2 423.9 L460.9 423.8 L464.5 423.7 L468.1 423.5 L471.7 423.3 L475.3 423.0 L478.9 422.7 L482.5 422.4 L486.0 422.0 L489.5 421.6 L493.0 421.1 L496.4 420.6 L499.8 420.1 L503.2 419.5 L506.5 418.9 L509.7 418.2 L512.9 417.6 L516.1 416.9 L519.1 416.1 L522.1 415.3 L525.1 414.5 L528.0 413.7 L530.8 412.8 L533.5 411.9 L536.2 411.0 L538.8 410.1 L541.3 409.1 L543.7 408.1 L546.0 407.1 L548.3 406.1 L550.4 405.0 L552.5 404.0 L554.5 402.9 L556.4 401.8 L558.2 400.7 L559.9 399.6 L561.6 398.4 L563.1 397.3 L564.6 396.1 L565.9 395.0 L567.2 393.8 L568.3 392.6 L569.4 391.5 L570.4 390.3 L571.3 389.1 L572.1 387.9 L572.8 386.7 L573.5 385.5 L574.0 384.4 L574.4 383.2 L574.8 382.0 L575.1 380.8 L575.2 379.6 L575.3 378.5 L575.4 377.3" fill="none" stroke="#55555a" stroke-width="1.1"/><path d="M340.9 375.5 L340.9 376.6 L341.1 377.7 L341.3 378.9 L341.6 380.0 L342.0 381.1 L342.5 382.2 L343.1 383.3 L343.8 384.5 L344.5 385.6 L345.4 386.7 L346.3 387.8 L347.3 388.9 L348.4 389.9 L349.7 391.0 L351.0 392.1 L352.4 393.1 L353.8 394.2 L355.4 395.2 L357.1 396.2 L358.8 397.2 L360.7 398.2 L362.6 399.1 L364.7 400.1 L366.8 401.0 L369.0 401.9 L371.3 402.8 L373.6 403.6 L376.1 404.5 L378.6 405.3 L381.2 406.0 L383.9 406.8 L386.7 407.5 L389.5 408.2 L392.4 408.8 L395.4 409.5 L398.5 410.1 L401.6 410.6 L404.7 411.2 L407.9 411.6 L411.2 412.1 L414.6 412.5 L417.9 412.9 L421.3 413.2 L424.8 413.5 L428.3 413.8 L431.8 414.0 L435.4 414.2 L439.0 414.4 L442.6 414.5 L446.2 414.5 L449.8 414.6 L453.5 414.5 L457.1 414.5 L460.8 414.4 L464.4 414.3 L468.1 414.1 L471.7 413.9 L475.3 413.6 L478.9 413.3 L482.5 413.0 L486.1 412.6 L489.6 412.2 L493.1 411.7 L496.5 411.2 L499.9 410.7 L503.3 410.1 L506.6 409.5 L509.9 408.9 L513.1 408.2 L516.2 407.5 L519.3 406.8 L522.4 406.1 L525.3 405.3 L528.2 404.5 L531.0 403.6 L533.8 402.7 L536.5 401.8 L539.1 400.9 L541.6 400.0 L544.0 399.0 L546.3 398.0 L548.6 397.0 L550.8 396.0 L552.9 395.0 L554.9 393.9 L556.8 392.9 L558.6 391.8 L560.3 390.7 L562.0 389.6 L563.5 388.5 L565.0 387.3 L566.3 386.2 L567.6 385.1 L568.8 383.9 L569.9 382.8 L570.8 381.6 L571.7 380.5 L572.5 379.3 L573.3 378.2 L573.9 377.0 L574.4 375.9 L574.9 374.7 L575.2 373.6 L575.5 372.4 L575.7 371.3 L575.8 370.2 L575.8 369.0" fill="none" stroke="#6a6a6e" stroke-width="0.9"/><path d="M574.1 372.0 L574.7 370.9 L575.1 369.8 L575.5 368.6 L575.8 367.5 L575.9 366.4 L576.0 365.3 L576.0 364.2 L576.0 363.1 L575.8 362.0 L575.6 360.9 L575.3 359.8 L574.9 358.8 L574.4 357.7 L573.9 356.7 L573.3 355.7 L572.6 354.6 L571.8 353.6 L571.0 352.7 L570.1 351.7 L569.1 350.7 L568.1 349.8 L567.0 348.8 L565.8 347.9 L564.6 347.0 L563.3 346.1 L562.0 345.3 L560.6 344.4 L559.1 343.6 L557.6 342.8 L556.1 342.0 L554.5 341.2 L552.8 340.4 L551.1 339.7 L549.3 339.0 L547.6 338.3 L545.7 337.6 L543.8 336.9 L541.9 336.3 L539.9 335.6 L537.9 335.0 L535.9 334.4 L533.8 333.8 L531.7 333.3 L529.6 332.8 L527.4 332.3 L525.2 331.8 L523.0 331.3 L520.7 330.8 L518.4 330.4 L516.1 330.0 L513.8 329.6 L511.4 329.2 L509.0 328.9 L506.6 328.5 L504.2 328.2 L501.8 327.9 L499.3 327.7 L496.8 327.4 L494.4 327.2 L491.9 327.0 L489.3 326.8 L486.8 326.6 L484.3 326.5 L481.7 326.3 L479.2 326.2 L476.6 326.1 L474.0 326.1 L471.4 326.0 L468.9 326.0 L466.3 326.0 L463.7 326.0 L461.1 326.0 L458.5 326.1 L455.9 326.2 L453.3 326.3 L450.7 326.4 L448.1 326.5 L445.5 326.7 L443.0 326.8 L440.4 327.0 L437.8 327.2 L435.3 327.5 L432.7 327.7 L430.2 328.0 L427.7 328.3 L425.2 328.6 L422.7 328.9 L420.2 329.3 L417.7 329.7 L415.2 330.0 L412.8 330.5 L410.4 330.9 L408.0 331.3 L405.6 331.8 L403.3 332.3 L400.9 332.8 L398.6 333.3 L396.3 333.9 L394.1 334.4 L391.9 335.0 L389.7 335.6 L387.5 336.2 L385.3 336.8 L383.2 337.5 L381.2 338.2 L379.1 338.8 L377.1 339.5 L375.2 340.3 L373.3 341.0 L371.4 341.8 L369.5 342.5 L367.7 343.3 L366.0 344.1 L364.3 344.9 L362.6 345.8 L361.0 346.6 L359.4 347.5 L357.9 348.4 L356.5 349.3 L355.1 350.2 L353.7 351.1 L352.4 352.0 L351.2 353.0 L350.0 354.0 L348.9 354.9 L347.8 355.9 L346.9 356.9 L345.9 357.9 L345.1 358.9 L344.3 360.0 L343.6 361.0 L342.9 362.1 L342.4 363.1 L341.9 364.2 L341.5 365.2 L341.1 366.3 L340.8 367.4 L340.7 368.5 L340.6 369.6 L340.5 370.7 L340.6 371.8 L340.7 372.9 L341.0 374.0 L341.3 375.1 L341.7 376.2 L342.2 377.3 L342.7 378.4 L343.4 379.5 L344.2 380.6 L345.0 381.7 L345.9 382.7 L347.0 383.8 L348.1 384.9 L349.3 385.9 L350.6 387.0 L352.0 388.0 L353.5 389.0 L355.1 390.0 L356.7 391.0 L358.5 392.0 L360.4 393.0 L362.3 393.9 L364.3 394.8 L366.4 395.7 L368.7 396.6 L370.9 397.5 L373.3 398.3 L375.8 399.1 L378.3 399.9 L380.9 400.7 L383.6 401.4 L386.4 402.1 L389.3 402.8 L392.2 403.4 L395.2 404.0 L398.2 404.6 L401.3 405.2 L404.5 405.7 L407.7 406.2 L411.0 406.6 L414.4 407.0 L417.7 407.4 L421.2 407.7 L424.6 408.0 L428.1 408.3 L431.7 408.5 L435.2 408.7 L438.8 408.8 L442.5 408.9 L446.1 409.0 L449.7 409.0 L453.4 409.0 L457.1 408.9 L460.7 408.8 L464.4 408.7 L468.0 408.5 L471.7 408.3 L475.3 408.0 L478.9 407.8 L482.5 407.4 L486.1 407.0 L489.6 406.6 L493.1 406.2 L496.6 405.7 L500.0 405.2 L503.4 404.6 L506.7 404.0 L510.0 403.4 L513.2 402.8 L516.4 402.1 L519.5 401.4 L522.5 400.6 L525.5 399.8 L528.4 399.0 L531.2 398.2 L534.0 397.3 L536.6 396.5 L539.2 395.6 L541.8 394.6 L544.2 393.7 L546.5 392.7 L548.8 391.7 L551.0 390.7 L553.1 389.7 L555.1 388.7 L557.0 387.6 L558.8 386.5 L560.6 385.5 L562.2 384.4 L563.8 383.3 L565.2 382.2 L566.6 381.1 L567.8 379.9 L569.0 378.8 L570.1 377.7 L571.1 376.6 L572.0 375.4 L572.8 374.3 L573.5 373.2Z" fill="none" stroke="#58585c" stroke-width="5.4"/><path d="M574.1 372.0 L574.7 370.9 L575.1 369.8 L575.5 368.6 L575.8 367.5 L575.9 366.4 L576.0 365.3 L576.0 364.2 L576.0 363.1 L575.8 362.0 L575.6 360.9 L575.3 359.8 L574.9 358.8 L574.4 357.7 L573.9 356.7 L573.3 355.7 L572.6 354.6 L571.8 353.6 L571.0 352.7 L570.1 351.7 L569.1 350.7 L568.1 349.8 L567.0 348.8 L565.8 347.9 L564.6 347.0 L563.3 346.1 L562.0 345.3 L560.6 344.4 L559.1 343.6 L557.6 342.8 L556.1 342.0 L554.5 341.2 L552.8 340.4 L551.1 339.7 L549.3 339.0 L547.6 338.3 L545.7 337.6 L543.8 336.9 L541.9 336.3 L539.9 335.6 L537.9 335.0 L535.9 334.4 L533.8 333.8 L531.7 333.3 L529.6 332.8 L527.4 332.3 L525.2 331.8 L523.0 331.3 L520.7 330.8 L518.4 330.4 L516.1 330.0 L513.8 329.6 L511.4 329.2 L509.0 328.9 L506.6 328.5 L504.2 328.2 L501.8 327.9 L499.3 327.7 L496.8 327.4 L494.4 327.2 L491.9 327.0 L489.3 326.8 L486.8 326.6 L484.3 326.5 L481.7 326.3 L479.2 326.2 L476.6 326.1 L474.0 326.1 L471.4 326.0 L468.9 326.0 L466.3 326.0 L463.7 326.0 L461.1 326.0 L458.5 326.1 L455.9 326.2 L453.3 326.3 L450.7 326.4 L448.1 326.5 L445.5 326.7 L443.0 326.8 L440.4 327.0 L437.8 327.2 L435.3 327.5 L432.7 327.7 L430.2 328.0 L427.7 328.3 L425.2 328.6 L422.7 328.9 L420.2 329.3 L417.7 329.7 L415.2 330.0 L412.8 330.5 L410.4 330.9 L408.0 331.3 L405.6 331.8 L403.3 332.3 L400.9 332.8 L398.6 333.3 L396.3 333.9 L394.1 334.4 L391.9 335.0 L389.7 335.6 L387.5 336.2 L385.3 336.8 L383.2 337.5 L381.2 338.2 L379.1 338.8 L377.1 339.5 L375.2 340.3 L373.3 341.0 L371.4 341.8 L369.5 342.5 L367.7 343.3 L366.0 344.1 L364.3 344.9 L362.6 345.8 L361.0 346.6 L359.4 347.5 L357.9 348.4 L356.5 349.3 L355.1 350.2 L353.7 351.1 L352.4 352.0 L351.2 353.0 L350.0 354.0 L348.9 354.9 L347.8 355.9 L346.9 356.9 L345.9 357.9 L345.1 358.9 L344.3 360.0 L343.6 361.0 L342.9 362.1 L342.4 363.1 L341.9 364.2 L341.5 365.2 L341.1 366.3 L340.8 367.4 L340.7 368.5 L340.6 369.6 L340.5 370.7 L340.6 371.8 L340.7 372.9 L341.0 374.0 L341.3 375.1 L341.7 376.2 L342.2 377.3 L342.7 378.4 L343.4 379.5 L344.2 380.6 L345.0 381.7 L345.9 382.7 L347.0 383.8 L348.1 384.9 L349.3 385.9 L350.6 387.0 L352.0 388.0 L353.5 389.0 L355.1 390.0 L356.7 391.0 L358.5 392.0 L360.4 393.0 L362.3 393.9 L364.3 394.8 L366.4 395.7 L368.7 396.6 L370.9 397.5 L373.3 398.3 L375.8 399.1 L378.3 399.9 L380.9 400.7 L383.6 401.4 L386.4 402.1 L389.3 402.8 L392.2 403.4 L395.2 404.0 L398.2 404.6 L401.3 405.2 L404.5 405.7 L407.7 406.2 L411.0 406.6 L414.4 407.0 L417.7 407.4 L421.2 407.7 L424.6 408.0 L428.1 408.3 L431.7 408.5 L435.2 408.7 L438.8 408.8 L442.5 408.9 L446.1 409.0 L449.7 409.0 L453.4 409.0 L457.1 408.9 L460.7 408.8 L464.4 408.7 L468.0 408.5 L471.7 408.3 L475.3 408.0 L478.9 407.8 L482.5 407.4 L486.1 407.0 L489.6 406.6 L493.1 406.2 L496.6 405.7 L500.0 405.2 L503.4 404.6 L506.7 404.0 L510.0 403.4 L513.2 402.8 L516.4 402.1 L519.5 401.4 L522.5 400.6 L525.5 399.8 L528.4 399.0 L531.2 398.2 L534.0 397.3 L536.6 396.5 L539.2 395.6 L541.8 394.6 L544.2 393.7 L546.5 392.7 L548.8 391.7 L551.0 390.7 L553.1 389.7 L555.1 388.7 L557.0 387.6 L558.8 386.5 L560.6 385.5 L562.2 384.4 L563.8 383.3 L565.2 382.2 L566.6 381.1 L567.8 379.9 L569.0 378.8 L570.1 377.7 L571.1 376.6 L572.0 375.4 L572.8 374.3 L573.5 373.2Z" fill="none" stroke="#a3a4a7" stroke-width="3.8"/><path d="M581.7 374.9 L582.2 373.7 L582.7 372.5 L583.0 371.3 L583.3 370.1 L583.4 368.9 L583.5 367.7 L583.5 366.5 L583.4 365.3 L583.2 364.2 L582.9 363.0 L582.5 361.9 L582.1 360.7 L581.5 359.6 L580.9 358.5 L580.2 357.4 L579.5 356.3 L578.6 355.2 L577.7 354.2 L576.7 353.1 L575.7 352.1 L574.6 351.1 L573.4 350.1 L572.1 349.1 L570.8 348.2 L569.4 347.2 L568.0 346.3 L566.5 345.4 L564.9 344.5 L563.3 343.7 L561.6 342.8 L559.9 342.0 L558.1 341.2 L556.3 340.4 L554.5 339.6 L552.5 338.9 L550.6 338.2 L548.6 337.4 L546.5 336.8 L544.4 336.1 L542.3 335.4 L540.2 334.8 L538.0 334.2 L535.7 333.6 L533.5 333.1 L531.2 332.5 L528.8 332.0 L526.5 331.5 L524.1 331.0 L521.7 330.6 L519.2 330.1 L516.8 329.7 L514.3 329.3 L511.8 329.0 L509.2 328.6 L506.7 328.3 L504.1 328.0 L501.5 327.7 L498.9 327.4 L496.3 327.2 L493.6 327.0 L491.0 326.8 L488.3 326.6 L485.7 326.4 L483.0 326.3 L480.3 326.2 L477.6 326.1 L474.9 326.0 L472.2 326.0 L469.4 326.0 L466.7 325.9 L464.0 326.0 L461.3 326.0 L458.5 326.1 L455.8 326.1 L453.1 326.2 L450.4 326.3 L447.6 326.5 L444.9 326.6 L442.2 326.8 L439.5 327.0 L436.8 327.3 L434.1 327.5 L431.5 327.8 L428.8 328.1 L426.1 328.4 L423.5 328.7 L420.8 329.0 L418.2 329.4 L415.6 329.8 L413.0 330.2 L410.5 330.6 L407.9 331.1 L405.4 331.6 L402.9 332.1 L400.4 332.6 L398.0 333.1 L395.5 333.6 L393.1 334.2 L390.7 334.8 L388.4 335.4 L386.0 336.0 L383.7 336.7 L381.5 337.4 L379.3 338.0 L377.1 338.8 L374.9 339.5 L372.8 340.2 L370.7 341.0 L368.6 341.8 L366.6 342.6 L364.7 343.4 L362.8 344.2 L360.9 345.1 L359.1 345.9 L357.3 346.8 L355.6 347.7 L353.9 348.6 L352.3 349.6 L350.7 350.5 L349.2 351.5 L347.8 352.5 L346.4 353.5 L345.0 354.5 L343.8 355.5 L342.6 356.6 L341.4 357.6 L340.4 358.7 L339.4 359.7 L338.4 360.8 L337.6 361.9 L336.8 363.0 L336.1 364.2 L335.4 365.3 L334.9 366.4 L334.4 367.6 L334.0 368.7 L333.7 369.9 L333.4 371.1 L333.3 372.2 L333.2 373.4 L333.3 374.6 L333.4 375.8 L333.6 377.0 L333.9 378.1 L334.3 379.3 L334.7 380.5 L335.3 381.7 L336.0 382.9 L336.8 384.1 L337.6 385.2 L338.6 386.4 L339.7 387.6 L340.8 388.7 L342.1 389.9 L343.4 391.0 L344.9 392.1 L346.5 393.2 L348.1 394.3 L349.9 395.4 L351.7 396.4 L353.7 397.5 L355.7 398.5 L357.9 399.5 L360.1 400.5 L362.4 401.5 L364.9 402.4 L367.4 403.3 L370.0 404.2 L372.7 405.1 L375.5 405.9 L378.4 406.7 L381.3 407.5 L384.4 408.2 L387.5 408.9 L390.7 409.6 L393.9 410.2 L397.3 410.8 L400.6 411.4 L404.1 411.9 L407.6 412.4 L411.2 412.9 L414.8 413.3 L418.5 413.7 L422.2 414.0 L426.0 414.3 L429.8 414.5 L433.6 414.7 L437.5 414.9 L441.3 415.0 L445.2 415.1 L449.2 415.1 L453.1 415.1 L457.0 415.0 L461.0 414.9 L464.9 414.8 L468.8 414.6 L472.7 414.3 L476.6 414.0 L480.5 413.7 L484.4 413.4 L488.2 413.0 L492.0 412.5 L495.7 412.0 L499.4 411.5 L503.1 410.9 L506.7 410.3 L510.3 409.7 L513.8 409.0 L517.3 408.3 L520.6 407.5 L523.9 406.7 L527.2 405.9 L530.4 405.1 L533.5 404.2 L536.5 403.3 L539.4 402.4 L542.3 401.4 L545.0 400.4 L547.7 399.4 L550.3 398.4 L552.8 397.3 L555.2 396.3 L557.5 395.2 L559.7 394.1 L561.9 392.9 L563.9 391.8 L565.8 390.6 L567.6 389.5 L569.3 388.3 L571.0 387.1 L572.5 385.9 L573.9 384.7 L575.2 383.5 L576.5 382.3 L577.6 381.1 L578.6 379.8 L579.5 378.6 L580.4 377.4 L581.1 376.2Z" fill="none" stroke="#6a6a6e" stroke-width="0.8"/><path d="M587.8 377.7 L588.4 376.4 L588.8 375.1 L589.1 373.9 L589.4 372.6 L589.5 371.3 L589.5 370.1 L589.5 368.8 L589.3 367.6 L589.1 366.3 L588.8 365.1 L588.4 363.9 L587.9 362.7 L587.3 361.5 L586.6 360.3 L585.9 359.2 L585.0 358.0 L584.1 356.9 L583.1 355.8 L582.1 354.7 L581.0 353.6 L579.8 352.6 L578.5 351.5 L577.2 350.5 L575.8 349.5 L574.3 348.5 L572.8 347.5 L571.2 346.6 L569.5 345.7 L567.8 344.8 L566.1 343.9 L564.3 343.0 L562.4 342.2 L560.5 341.3 L558.5 340.5 L556.5 339.7 L554.5 339.0 L552.4 338.2 L550.2 337.5 L548.0 336.8 L545.8 336.1 L543.5 335.5 L541.2 334.9 L538.9 334.3 L536.5 333.7 L534.1 333.1 L531.7 332.6 L529.2 332.0 L526.7 331.5 L524.2 331.1 L521.7 330.6 L519.1 330.2 L516.5 329.8 L513.9 329.4 L511.3 329.0 L508.6 328.7 L505.9 328.4 L503.2 328.1 L500.5 327.8 L497.8 327.5 L495.0 327.3 L492.3 327.1 L489.5 326.9 L486.7 326.8 L484.0 326.6 L481.2 326.5 L478.4 326.4 L475.5 326.3 L472.7 326.3 L469.9 326.2 L467.1 326.2 L464.2 326.3 L461.4 326.3 L458.6 326.3 L455.8 326.4 L452.9 326.5 L450.1 326.7 L447.3 326.8 L444.4 327.0 L441.6 327.2 L438.8 327.4 L436.0 327.6 L433.2 327.9 L430.4 328.1 L427.7 328.4 L424.9 328.8 L422.2 329.1 L419.4 329.5 L416.7 329.8 L414.0 330.2 L411.3 330.7 L408.6 331.1 L406.0 331.6 L403.4 332.1 L400.7 332.6 L398.2 333.1 L395.6 333.7 L393.1 334.2 L390.5 334.8 L388.1 335.5 L385.6 336.1 L383.2 336.8 L380.8 337.4 L378.4 338.1 L376.1 338.8 L373.8 339.6 L371.5 340.3 L369.3 341.1 L367.1 341.9 L365.0 342.7 L362.9 343.6 L360.8 344.4 L358.8 345.3 L356.9 346.2 L355.0 347.1 L353.1 348.0 L351.3 349.0 L349.5 349.9 L347.8 350.9 L346.2 351.9 L344.6 352.9 L343.0 354.0 L341.6 355.0 L340.1 356.1 L338.8 357.1 L337.5 358.2 L336.3 359.3 L335.2 360.5 L334.1 361.6 L333.1 362.7 L332.2 363.9 L331.3 365.1 L330.5 366.2 L329.8 367.4 L329.2 368.6 L328.7 369.9 L328.3 371.1 L327.9 372.3 L327.6 373.5 L327.4 374.8 L327.3 376.0 L327.3 377.3 L327.4 378.5 L327.6 379.8 L327.9 381.0 L328.3 382.3 L328.8 383.6 L329.3 384.8 L330.0 386.1 L330.8 387.3 L331.7 388.6 L332.7 389.8 L333.7 391.0 L334.9 392.3 L336.2 393.5 L337.6 394.7 L339.1 395.9 L340.7 397.1 L342.5 398.2 L344.3 399.4 L346.2 400.5 L348.2 401.6 L350.4 402.7 L352.6 403.8 L354.9 404.9 L357.4 405.9 L359.9 406.9 L362.6 407.9 L365.3 408.8 L368.1 409.8 L371.1 410.7 L374.1 411.5 L377.2 412.4 L380.4 413.1 L383.6 413.9 L387.0 414.6 L390.4 415.3 L393.9 416.0 L397.5 416.6 L401.1 417.2 L404.8 417.7 L408.6 418.2 L412.4 418.6 L416.3 419.0 L420.2 419.4 L424.2 419.7 L428.2 419.9 L432.3 420.2 L436.3 420.3 L440.4 420.5 L444.6 420.5 L448.7 420.6 L452.8 420.6 L457.0 420.5 L461.2 420.4 L465.3 420.2 L469.5 420.0 L473.6 419.8 L477.7 419.5 L481.8 419.1 L485.9 418.7 L489.9 418.3 L493.9 417.8 L497.9 417.3 L501.8 416.7 L505.7 416.1 L509.5 415.5 L513.3 414.8 L517.0 414.1 L520.6 413.3 L524.1 412.5 L527.6 411.6 L531.1 410.8 L534.4 409.9 L537.6 408.9 L540.8 408.0 L543.9 407.0 L546.9 405.9 L549.8 404.9 L552.6 403.8 L555.3 402.7 L557.9 401.6 L560.4 400.4 L562.9 399.3 L565.2 398.1 L567.4 396.9 L569.5 395.6 L571.5 394.4 L573.4 393.2 L575.2 391.9 L576.8 390.7 L578.4 389.4 L579.9 388.1 L581.2 386.8 L582.5 385.5 L583.6 384.2 L584.7 382.9 L585.6 381.6 L586.5 380.3 L587.2 379.0Z" fill="none" stroke="#6a6a6e" stroke-width="0.8"/><path d="M492.8 345.6 L493.2 345.1 L493.5 344.6 L493.8 344.1 L494.0 343.6 L494.2 343.1 L494.3 342.6 L494.4 342.1 L494.4 341.6 L494.3 341.1 L494.2 340.6 L494.0 340.1 L493.8 339.6 L493.5 339.1 L493.2 338.7 L492.8 338.2 L492.4 337.7 L491.9 337.3 L491.3 336.8 L490.8 336.4 L490.1 335.9 L489.4 335.5 L488.7 335.1 L487.9 334.7 L487.1 334.3 L486.3 333.9 L485.4 333.5 L484.4 333.2 L483.5 332.9 L482.5 332.5 L481.4 332.2 L480.4 331.9 L479.3 331.6 L478.1 331.4 L477.0 331.1 L475.8 330.9 L474.6 330.7 L473.3 330.4 L472.1 330.3 L470.8 330.1 L469.5 329.9 L468.2 329.8 L466.9 329.7 L465.6 329.6 L464.2 329.5 L462.9 329.4 L461.5 329.4 L460.2 329.3 L458.8 329.3 L457.4 329.3 L456.1 329.4 L454.7 329.4 L453.3 329.4 L452.0 329.5 L450.7 329.6 L449.3 329.7 L448.0 329.9 L446.7 330.0 L445.4 330.2 L444.1 330.3 L442.8 330.5 L441.6 330.7 L440.4 331.0 L439.2 331.2 L438.0 331.5 L436.8 331.7 L435.7 332.0 L434.6 332.3 L433.6 332.6 L432.6 333.0 L431.6 333.3 L430.6 333.7 L429.7 334.0 L428.8 334.4 L428.0 334.8 L427.2 335.2 L426.4 335.6 L425.7 336.1 L425.1 336.5 L424.4 337.0 L423.9 337.4 L423.3 337.9 L422.9 338.3 L422.5 338.8 L422.1 339.3 L421.8 339.8 L421.5 340.3 L421.3 340.8 L421.2 341.3 L421.1 341.8 L421.0 342.3 L421.0 342.8 L421.1 343.3 L421.3 343.8 L421.4 344.3 L421.7 344.8 L422.0 345.3 L422.4 345.8 L422.8 346.3 L423.3 346.7 L423.8 347.2 L424.4 347.7 L425.0 348.1 L425.7 348.6 L426.5 349.0 L427.3 349.5 L428.1 349.9 L429.0 350.3 L430.0 350.7 L431.0 351.1 L432.0 351.4 L433.1 351.8 L434.2 352.1 L435.4 352.4 L436.6 352.7 L437.9 353.0 L439.2 353.3 L440.5 353.5 L441.8 353.8 L443.2 354.0 L444.6 354.2 L446.0 354.3 L447.5 354.5 L448.9 354.6 L450.4 354.7 L451.9 354.8 L453.4 354.9 L454.9 354.9 L456.4 354.9 L458.0 354.9 L459.5 354.9 L461.0 354.8 L462.5 354.8 L464.0 354.7 L465.5 354.6 L467.0 354.4 L468.4 354.3 L469.9 354.1 L471.3 353.9 L472.7 353.7 L474.1 353.5 L475.4 353.2 L476.7 353.0 L478.0 352.7 L479.2 352.4 L480.4 352.0 L481.6 351.7 L482.7 351.3 L483.8 351.0 L484.8 350.6 L485.8 350.2 L486.7 349.8 L487.6 349.3 L488.4 348.9 L489.2 348.5 L490.0 348.0 L490.6 347.6 L491.3 347.1 L491.8 346.6 L492.3 346.1Z" fill="none" stroke="#6d6e72" stroke-width="1.6"/><path d="M492.8 345.6 L493.2 345.1 L493.5 344.6 L493.8 344.1 L494.0 343.6 L494.2 343.1 L494.3 342.6 L494.4 342.1 L494.4 341.6 L494.3 341.1 L494.2 340.6 L494.0 340.1 L493.8 339.6 L493.5 339.1 L493.2 338.7 L492.8 338.2 L492.4 337.7 L491.9 337.3 L491.3 336.8 L490.8 336.4 L490.1 335.9 L489.4 335.5 L488.7 335.1 L487.9 334.7 L487.1 334.3 L486.3 333.9 L485.4 333.5 L484.4 333.2 L483.5 332.9 L482.5 332.5 L481.4 332.2 L480.4 331.9 L479.3 331.6 L478.1 331.4 L477.0 331.1 L475.8 330.9 L474.6 330.7 L473.3 330.4 L472.1 330.3 L470.8 330.1 L469.5 329.9 L468.2 329.8 L466.9 329.7 L465.6 329.6 L464.2 329.5 L462.9 329.4 L461.5 329.4 L460.2 329.3 L458.8 329.3 L457.4 329.3 L456.1 329.4 L454.7 329.4 L453.3 329.4 L452.0 329.5 L450.7 329.6 L449.3 329.7 L448.0 329.9 L446.7 330.0 L445.4 330.2 L444.1 330.3 L442.8 330.5 L441.6 330.7 L440.4 331.0 L439.2 331.2 L438.0 331.5 L436.8 331.7 L435.7 332.0 L434.6 332.3 L433.6 332.6 L432.6 333.0 L431.6 333.3 L430.6 333.7 L429.7 334.0 L428.8 334.4 L428.0 334.8 L427.2 335.2 L426.4 335.6 L425.7 336.1 L425.1 336.5 L424.4 337.0 L423.9 337.4 L423.3 337.9 L422.9 338.3 L422.5 338.8 L422.1 339.3 L421.8 339.8 L421.5 340.3 L421.3 340.8 L421.2 341.3 L421.1 341.8 L421.0 342.3 L421.0 342.8 L421.1 343.3 L421.3 343.8 L421.4 344.3 L421.7 344.8 L422.0 345.3 L422.4 345.8 L422.8 346.3 L423.3 346.7 L423.8 347.2 L424.4 347.7 L425.0 348.1 L425.7 348.6 L426.5 349.0 L427.3 349.5 L428.1 349.9 L429.0 350.3 L430.0 350.7 L431.0 351.1 L432.0 351.4 L433.1 351.8 L434.2 352.1 L435.4 352.4 L436.6 352.7 L437.9 353.0 L439.2 353.3 L440.5 353.5 L441.8 353.8 L443.2 354.0 L444.6 354.2 L446.0 354.3 L447.5 354.5 L448.9 354.6 L450.4 354.7 L451.9 354.8 L453.4 354.9 L454.9 354.9 L456.4 354.9 L458.0 354.9 L459.5 354.9 L461.0 354.8 L462.5 354.8 L464.0 354.7 L465.5 354.6 L467.0 354.4 L468.4 354.3 L469.9 354.1 L471.3 353.9 L472.7 353.7 L474.1 353.5 L475.4 353.2 L476.7 353.0 L478.0 352.7 L479.2 352.4 L480.4 352.0 L481.6 351.7 L482.7 351.3 L483.8 351.0 L484.8 350.6 L485.8 350.2 L486.7 349.8 L487.6 349.3 L488.4 348.9 L489.2 348.5 L490.0 348.0 L490.6 347.6 L491.3 347.1 L491.8 346.6 L492.3 346.1Z" fill="#909195"/><circle cx="458" cy="340" r="7.5" fill="none" stroke="#ffffff" stroke-width="1.6" stroke-dasharray="3.2 2.7"/><circle cx="458" cy="340" r="7.5" fill="none" stroke="#d03848" stroke-width="1.6" stroke-dasharray="3.2 2.7" stroke-dashoffset="3.2"/><path d="M458 323 V336 M458 344 V357 M441 340 H454 M462 340 H475" stroke="#111" stroke-width="1.2"/><circle cx="458.5" cy="387.5" r="2.6" fill="#f5a43c" stroke="#222" stroke-width="0.8"/></svg>
<svg style="position:absolute;left:0px;top:0px;" width="1920" height="1080" viewBox="0 0 1920 1080"><defs>
<radialGradient id="glow" gradientUnits="userSpaceOnUse" cx="1253.2" cy="391" r="185">
<stop offset="0.4811" stop-color="#a07800"/>
<stop offset="0.5838" stop-color="#8c6a00"/>
<stop offset="0.6486" stop-color="#7a5600"/>
<stop offset="0.7189" stop-color="#5a3e00"/>
<stop offset="0.8000" stop-color="#2e2006"/>
<stop offset="0.8649" stop-color="#140c04"/><stop offset="0.9297" stop-color="#060300"/>
<stop offset="1" stop-color="#000000"/>
</radialGradient>
<radialGradient id="inner" gradientUnits="userSpaceOnUse" cx="1253.2" cy="391" r="82">
<stop offset="0.3537" stop-color="#4a2000"/>
<stop offset="0.4390" stop-color="#3a1800"/>
<stop offset="0.5854" stop-color="#2a1204"/>
<stop offset="0.7561" stop-color="#200e00"/>
<stop offset="0.9268" stop-color="#2a1000"/>
<stop offset="1" stop-color="#4a1a00"/>
</radialGradient>
</defs><circle cx="1253.2" cy="391" r="185" fill="url(#glow)"/><circle cx="1253.2" cy="391" r="89.5" fill="#e6b000"/><circle cx="1253.2" cy="391" r="82" fill="url(#inner)"/><circle cx="1253.2" cy="391" r="29" fill="#e8b600"/><rect x="1085.5" y="223.5" width="334.5" height="334.5" fill="none" stroke="#4c4b50" stroke-width="1"/></svg>
<div style="position:absolute;left:1px;top:50px;width:917px;height:25px;background:#2d2c2f;border-radius:6px;border-bottom-left-radius:0;border-bottom-right-radius:0"></div>
<div style="position:absolute;left:1px;top:75px;width:917px;height:26px;background:#323134;border-radius:0px;"></div>
<div style="position:absolute;left:10px;top:53px;width:30px;height:18px;background:#262626;border-radius:4px;"></div>
<svg style="position:absolute;left:13px;top:54px;" width="26" height="16" viewBox="0 0 26 16"><path d="M2 9 H11 M2 13.5 H11 M4 7 L3 16 M9 7 L8 16" stroke="#d6d6d6" stroke-width="1.2"/><circle cx="10" cy="5" r="3.2" fill="#d6d6d6"/><path d="M18 7 l3.5 3.5 l3.5 -3.5" fill="none" stroke="#d6d6d6" stroke-width="1.2"/></svg>
<div style="position:absolute;left:47px;top:53px;width:108px;height:18px;background:#262626;border-radius:4px;"></div>
<svg style="position:absolute;left:51px;top:54px;" width="16" height="16" viewBox="0 0 16 16"><path d="M1 4 V1 H4 M12 1 H15 V4 M15 12 V15 H12 M4 15 H1 V12" fill="none" stroke="#d6d6d6" stroke-width="1.2"/><rect x="4" y="4" width="8" height="8" fill="#d6d6d6"/></svg>
<div class="t" style="left:72px;top:57.65px;font-size:11.4px;color:#e6e6e6;">Object Mode</div>
<svg style="position:absolute;left:146px;top:60px;" width="8" height="5" viewBox="0 0 8 5"><path d="M0.5 0.5 l3.5 3.5 l3.5 -3.5" fill="none" stroke="#d0d0d0" stroke-width="1.2"/></svg>
<div class="t" style="left:168px;top:57.65px;font-size:11.4px;color:#e6e6e6;">View</div>
<div class="t" style="left:208px;top:57.65px;font-size:11.4px;color:#e6e6e6;">Select</div>
<div class="t" style="left:254px;top:57.65px;font-size:11.4px;color:#e6e6e6;">Add</div>
<div class="t" style="left:288px;top:57.65px;font-size:11.4px;color:#e6e6e6;">Object</div>
<div class="t" style="left:336px;top:57.65px;font-size:11.4px;color:#e6e6e6;">GIS</div>
<div style="position:absolute;left:378px;top:53px;width:78px;height:18px;background:#262626;border-radius:4px;"></div>
<svg style="position:absolute;left:382px;top:54px;" width="18" height="16" viewBox="0 0 18 16"><path d="M3.5 15 V2 M1 4.5 L3.5 2 L6 4.5 M3.5 15 H16 M13.5 12.5 L16 15 L13.5 17.5 M4 14 L12 6 M9 6 H12 V9" fill="none" stroke="#d6d6d6" stroke-width="1.1"/><circle cx="3.5" cy="15" r="1.5" fill="#262626" stroke="#d6d6d6"/></svg>
<div class="t" style="left:403px;top:57.65px;font-size:11.4px;color:#e6e6e6;">Global</div>
<svg style="position:absolute;left:443px;top:60px;" width="8" height="5" viewBox="0 0 8 5"><path d="M0.5 0.5 l3.5 3.5 l3.5 -3.5" fill="none" stroke="#d0d0d0" stroke-width="1.2"/></svg>
<div style="position:absolute;left:45px;top:80px;width:94px;height:18px;background:#545454;border-radius:4px;"></div>
<div style="position:absolute;left:45px;top:80px;width:19px;height:18px;background:#4772b3;border-radius:4px;border-top-right-radius:0;border-bottom-right-radius:0"></div>
<div style="position:absolute;left:64px;top:80px;width:1px;height:18px;background:#474747;border-radius:0px;"></div>
<div style="position:absolute;left:83px;top:80px;width:1px;height:18px;background:#474747;border-radius:0px;"></div>
<div style="position:absolute;left:102px;top:80px;width:1px;height:18px;background:#474747;border-radius:0px;"></div>
<div style="position:absolute;left:121px;top:80px;width:1px;height:18px;background:#474747;border-radius:0px;"></div>
<svg style="position:absolute;left:45px;top:80px;" width="94" height="18" viewBox="0 0 94 18"><rect x="3" y="3" width="12.5" height="12" fill="none" stroke="#fff" stroke-width="1.3" stroke-dasharray="2.8 1.6"/><path d="M22 8 H27 V3 H35 V11 H30 V15 H22 Z" fill="#d9d9d9"/><rect x="41.5" y="6.5" width="8" height="8" fill="none" stroke="#d9d9d9" stroke-width="1.2" stroke-dasharray="1.6 1.4"/><path d="M46 3 H54 V11 H50 V7 H46 Z" fill="#d9d9d9"/><path d="M61 6.5 H65 V3 H73 V11 H69 V15 H61 Z M65 6.5 V11 H69 V6.5 Z" fill="#d9d9d9" fill-rule="evenodd"/><rect x="79.5" y="3.5" width="11" height="11" fill="none" stroke="#d9d9d9" stroke-width="1.2" stroke-dasharray="1.6 1.4"/><rect x="82" y="6" width="6" height="6" fill="#d9d9d9"/></svg>
<div style="position:absolute;left:850px;top:80px;width:60px;height:17px;background:#262626;border-radius:4px;"></div>
<div class="t" style="left:857px;top:83.85px;font-size:11.4px;color:#e6e6e6;">Options</div>
<svg style="position:absolute;left:901px;top:86px;" width="8" height="5" viewBox="0 0 8 5"><path d="M0.5 0.5 l3.5 3.5 l3.5 -3.5" fill="none" stroke="#d0d0d0" stroke-width="1.2"/></svg>
<div style="position:absolute;left:463px;top:53px;width:29px;height:18px;background:#262626;border-radius:4px;"></div>
<svg style="position:absolute;left:465px;top:54px;" width="16" height="16" viewBox="0 0 16 16"><circle cx="5" cy="11" r="3.8" fill="none" stroke="#d6d6d6" stroke-width="1.2"/><circle cx="10.5" cy="5.5" r="3.8" fill="none" stroke="#d6d6d6" stroke-width="1.2"/><circle cx="8" cy="8.2" r="1.4" fill="#d6d6d6"/></svg>
<svg style="position:absolute;left:483px;top:60px;" width="8" height="5" viewBox="0 0 8 5"><path d="M0.5 0.5 l3.5 3.5 l3.5 -3.5" fill="none" stroke="#d0d0d0" stroke-width="1.2"/></svg>
<div style="position:absolute;left:500px;top:53px;width:18px;height:18px;background:#4a4a4a;border-radius:4px;border-top-right-radius:0;border-bottom-right-radius:0"></div>
<div style="position:absolute;left:518px;top:53px;width:31px;height:18px;background:#262626;border-radius:4px;border-top-left-radius:0;border-bottom-left-radius:0"></div>
<svg style="position:absolute;left:501px;top:54px;" width="16" height="16" viewBox="0 0 16 16"><g transform="rotate(45 8 8)"><path d="M4 14 V8 A4 4 0 0 1 12 8 V14" fill="none" stroke="#a0a0a0" stroke-width="2.2"/></g></svg>
<svg style="position:absolute;left:519px;top:54px;" width="16" height="16" viewBox="0 0 16 16"><path d="M1.5 9 V15 M8 9 V15 M14.5 9 V15 M1.5 12 H14.5 M4.5 11 V13.5 M11 11 V13.5" stroke="#d6d6d6" stroke-width="1.1"/><rect x="10" y="2" width="4" height="4" fill="#e6e6e6"/></svg>
<svg style="position:absolute;left:538px;top:60px;" width="8" height="5" viewBox="0 0 8 5"><path d="M0.5 0.5 l3.5 3.5 l3.5 -3.5" fill="none" stroke="#d0d0d0" stroke-width="1.2"/></svg>
<div style="position:absolute;left:557px;top:53px;width:18px;height:18px;background:#4a4a4a;border-radius:4px;border-top-right-radius:0;border-bottom-right-radius:0"></div>
<div style="position:absolute;left:575px;top:53px;width:31px;height:18px;background:#262626;border-radius:4px;border-top-left-radius:0;border-bottom-left-radius:0"></div>
<svg style="position:absolute;left:558px;top:54px;" width="16" height="16" viewBox="0 0 16 16"><circle cx="8" cy="8" r="6" fill="#565656"/><circle cx="8" cy="8" r="2" fill="#c8c8c8"/></svg>
<svg style="position:absolute;left:577px;top:54px;" width="16" height="16" viewBox="0 0 16 16"><path d="M1 15 C5 15 5 2 8 2 C11 2 11 15 15 15" fill="none" stroke="#b5b5b5" stroke-width="1.1"/></svg>
<svg style="position:absolute;left:595px;top:60px;" width="8" height="5" viewBox="0 0 8 5"><path d="M0.5 0.5 l3.5 3.5 l3.5 -3.5" fill="none" stroke="#4a4a4a" stroke-width="1.2"/></svg>
<div style="position:absolute;left:626px;top:53px;width:30px;height:18px;background:#262626;border-radius:4px;"></div>
<svg style="position:absolute;left:629px;top:54px;" width="18" height="16" viewBox="0 0 18 16"><path d="M5 6 Q10 0 15 6 Q10 12 5 6Z" fill="none" stroke="#dcdcdc" stroke-width="1.3"/><circle cx="10" cy="6" r="1.7" fill="#dcdcdc"/><path d="M1 8 L8 11 L5 12 L4 16 Z" fill="#dcdcdc"/></svg>
<svg style="position:absolute;left:646px;top:60px;" width="8" height="5" viewBox="0 0 8 5"><path d="M0.5 0.5 l3.5 3.5 l3.5 -3.5" fill="none" stroke="#d0d0d0" stroke-width="1.2"/></svg>
<div style="position:absolute;left:663px;top:53px;width:19px;height:18px;background:#4772b3;border-radius:4px;border-top-right-radius:0;border-bottom-right-radius:0"></div>
<div style="position:absolute;left:682px;top:53px;width:19px;height:18px;background:#262626;border-radius:4px;border-top-left-radius:0;border-bottom-left-radius:0"></div>
<svg style="position:absolute;left:665px;top:54px;" width="16" height="16" viewBox="0 0 16 16"><circle cx="4" cy="13" r="2" fill="none" stroke="#fff" stroke-width="1.2"/><path d="M5.5 11.5 Q11 10 13 3 M9 3 H13.5 V7.5" fill="none" stroke="#fff" stroke-width="1.2"/></svg>
<svg style="position:absolute;left:687px;top:60px;" width="8" height="5" viewBox="0 0 8 5"><path d="M0.5 0.5 l3.5 3.5 l3.5 -3.5" fill="none" stroke="#d0d0d0" stroke-width="1.2"/></svg>
<div style="position:absolute;left:708px;top:53px;width:19px;height:18px;background:#4772b3;border-radius:4px;border-top-right-radius:0;border-bottom-right-radius:0"></div>
<div style="position:absolute;left:727px;top:53px;width:19px;height:18px;background:#262626;border-radius:4px;border-top-left-radius:0;border-bottom-left-radius:0"></div>
<svg style="position:absolute;left:710px;top:54px;" width="16" height="16" viewBox="0 0 16 16"><circle cx="6" cy="10.5" r="4.5" fill="none" stroke="#fff" stroke-width="1.3"/><circle cx="10" cy="6" r="4.5" fill="#f2f2f2"/><circle cx="9" cy="7" r="1.5" fill="#4772b3"/></svg>
<svg style="position:absolute;left:732px;top:60px;" width="8" height="5" viewBox="0 0 8 5"><path d="M0.5 0.5 l3.5 3.5 l3.5 -3.5" fill="none" stroke="#d6d6d6" stroke-width="1.2"/></svg>
<div style="position:absolute;left:753px;top:53px;width:19px;height:18px;background:#3f3f3f;border-radius:4px;"></div>
<svg style="position:absolute;left:755px;top:54px;" width="16" height="16" viewBox="0 0 16 16"><rect x="5.5" y="1.5" width="9" height="9" fill="none" stroke="#bdbdbd" stroke-width="1.1"/><rect x="1.5" y="5.5" width="9" height="9" fill="none" stroke="#bdbdbd" stroke-width="1.1"/></svg>
<div style="position:absolute;left:778px;top:53px;width:19px;height:18px;background:#545454;border-radius:4px;border-top-right-radius:0;border-bottom-right-radius:0"></div>
<div style="position:absolute;left:797px;top:53px;width:19px;height:18px;background:#4772b3;border-radius:4px;border-radius:0"></div>
<div style="position:absolute;left:816px;top:53px;width:18px;height:18px;background:#545454;border-radius:4px;border-radius:0"></div>
<div style="position:absolute;left:834px;top:53px;width:19px;height:18px;background:#545454;border-radius:4px;border-radius:0"></div>
<div style="position:absolute;left:853px;top:53px;width:19px;height:18px;background:#262626;border-radius:4px;border-top-left-radius:0;border-bottom-left-radius:0"></div>
<svg style="position:absolute;left:778px;top:53px;" width="76" height="18" viewBox="0 0 76 18"><g transform="translate(2,1)"><circle cx="8" cy="8" r="6.5" fill="none" stroke="#dcdcdc" stroke-width="1.1"/><ellipse cx="8" cy="8" rx="3" ry="6.5" fill="none" stroke="#dcdcdc" stroke-width="1"/><path d="M1.5 8 H14.5 M2.5 4.5 H13.5 M2.5 11.5 H13.5" stroke="#dcdcdc" stroke-width="1"/></g><circle cx="28.5" cy="9" r="7" fill="#e6e6e6"/><circle cx="47" cy="9" r="6.5" fill="#3a3a3a" stroke="#dcdcdc" stroke-width="1.1"/><path d="M47 2.5 A6.5 6.5 0 0 0 40.5 9 H47 Z" fill="#dcdcdc"/><path d="M47 9 L51.5 13.7 A6.5 6.5 0 0 1 47 15.5Z" fill="#dcdcdc"/><circle cx="65.5" cy="9" r="6.5" fill="none" stroke="#e6e6e6" stroke-width="1.3"/><path d="M61 8 A4.5 4.5 0 0 1 66 4" fill="none" stroke="#e6e6e6" stroke-width="1.3"/></svg>
<svg style="position:absolute;left:860px;top:60px;" width="8" height="5" viewBox="0 0 8 5"><path d="M0.5 0.5 l3.5 3.5 l3.5 -3.5" fill="none" stroke="#d0d0d0" stroke-width="1.2"/></svg>
<div style="position:absolute;left:880px;top:53px;width:19px;height:18px;background:#2e2e2e;border-radius:4px;border-top-right-radius:0;border-bottom-right-radius:0"></div>
<div style="position:absolute;left:899px;top:53px;width:11px;height:18px;background:#262626;border-radius:4px;border-top-left-radius:0;border-bottom-left-radius:0"></div>
<svg style="position:absolute;left:881px;top:54px;" width="16" height="16" viewBox="0 0 16 16"><rect x="1.5" y="1.5" width="13" height="13" fill="none" stroke="#555" stroke-width="1"/><path d="M4.5 14 V10 Q4.5 5 9.5 5 H13" fill="none" stroke="#555" stroke-width="2"/></svg>
<svg style="position:absolute;left:901px;top:60px;" width="8" height="5" viewBox="0 0 8 5"><path d="M0.5 0.5 l3.5 3.5 l3.5 -3.5" fill="none" stroke="#d0d0d0" stroke-width="1.2"/></svg>
<div style="position:absolute;left:921px;top:50px;width:664px;height:25px;background:#262626;border-radius:6px;border-bottom-left-radius:0;border-bottom-right-radius:0"></div>
<div style="position:absolute;left:921px;top:75px;width:664px;height:26px;background:#1f1f1f;border-radius:0px;"></div>
<div class="t" style="left:918px;top:57.65px;font-size:11.4px;color:#e6e6e6;">t</div>
<div class="t" style="left:939px;top:57.65px;font-size:11.4px;color:#e6e6e6;">Add</div>
<div class="t" style="left:973px;top:57.65px;font-size:11.4px;color:#e6e6e6;">Object</div>
<div class="t" style="left:1021px;top:57.65px;font-size:11.4px;color:#e6e6e6;">GIS</div>
<div style="position:absolute;left:1064px;top:53px;width:76px;height:18px;background:#262626;border-radius:4px;"></div>
<svg style="position:absolute;left:1068px;top:54px;" width="18" height="16" viewBox="0 0 18 16"><path d="M3.5 15 V2 M1 4.5 L3.5 2 L6 4.5 M3.5 15 H16 M13.5 12.5 L16 15 L13.5 17.5 M4 14 L12 6 M9 6 H12 V9" fill="none" stroke="#d6d6d6" stroke-width="1.1"/><circle cx="3.5" cy="15" r="1.5" fill="#262626" stroke="#d6d6d6"/></svg>
<div class="t" style="left:1088px;top:57.65px;font-size:11.4px;color:#e6e6e6;">Global</div>
<svg style="position:absolute;left:1128px;top:60px;" width="8" height="5" viewBox="0 0 8 5"><path d="M0.5 0.5 l3.5 3.5 l3.5 -3.5" fill="none" stroke="#d0d0d0" stroke-width="1.2"/></svg>
<div style="position:absolute;left:1149px;top:53px;width:29px;height:18px;background:#262626;border-radius:4px;"></div>
<svg style="position:absolute;left:1151px;top:54px;" width="16" height="16" viewBox="0 0 16 16"><circle cx="5" cy="11" r="3.8" fill="none" stroke="#d6d6d6" stroke-width="1.2"/><circle cx="10.5" cy="5.5" r="3.8" fill="none" stroke="#d6d6d6" stroke-width="1.2"/><circle cx="8" cy="8.2" r="1.4" fill="#d6d6d6"/></svg>
<svg style="position:absolute;left:1169px;top:60px;" width="8" height="5" viewBox="0 0 8 5"><path d="M0.5 0.5 l3.5 3.5 l3.5 -3.5" fill="none" stroke="#d0d0d0" stroke-width="1.2"/></svg>
<div style="position:absolute;left:1185px;top:53px;width:18px;height:18px;background:#4a4a4a;border-radius:4px;border-top-right-radius:0;border-bottom-right-radius:0"></div>
<div style="position:absolute;left:1203px;top:53px;width:31px;height:18px;background:#262626;border-radius:4px;border-top-left-radius:0;border-bottom-left-radius:0"></div>
<svg style="position:absolute;left:1186px;top:54px;" width="16" height="16" viewBox="0 0 16 16"><g transform="rotate(45 8 8)"><path d="M4 14 V8 A4 4 0 0 1 12 8 V14" fill="none" stroke="#a0a0a0" stroke-width="2.2"/></g></svg>
<svg style="position:absolute;left:1204px;top:54px;" width="16" height="16" viewBox="0 0 16 16"><path d="M1.5 9 V15 M8 9 V15 M14.5 9 V15 M1.5 12 H14.5 M4.5 11 V13.5 M11 11 V13.5" stroke="#d6d6d6" stroke-width="1.1"/><rect x="10" y="2" width="4" height="4" fill="#e6e6e6"/></svg>
<svg style="position:absolute;left:1223px;top:60px;" width="8" height="5" viewBox="0 0 8 5"><path d="M0.5 0.5 l3.5 3.5 l3.5 -3.5" fill="none" stroke="#d0d0d0" stroke-width="1.2"/></svg>
<div style="position:absolute;left:1242px;top:53px;width:18px;height:18px;background:#4a4a4a;border-radius:4px;border-top-right-radius:0;border-bottom-right-radius:0"></div>
<div style="position:absolute;left:1260px;top:53px;width:31px;height:18px;background:#262626;border-radius:4px;border-top-left-radius:0;border-bottom-left-radius:0"></div>
<svg style="position:absolute;left:1243px;top:54px;" width="16" height="16" viewBox="0 0 16 16"><circle cx="8" cy="8" r="6" fill="#565656"/><circle cx="8" cy="8" r="2" fill="#c8c8c8"/></svg>
<svg style="position:absolute;left:1262px;top:54px;" width="16" height="16" viewBox="0 0 16 16"><path d="M1 15 C5 15 5 2 8 2 C11 2 11 15 15 15" fill="none" stroke="#b5b5b5" stroke-width="1.1"/></svg>
<svg style="position:absolute;left:1280px;top:60px;" width="8" height="5" viewBox="0 0 8 5"><path d="M0.5 0.5 l3.5 3.5 l3.5 -3.5" fill="none" stroke="#4a4a4a" stroke-width="1.2"/></svg>
<div style="position:absolute;left:1310px;top:53px;width:30px;height:18px;background:#262626;border-radius:4px;"></div>
<svg style="position:absolute;left:1313px;top:54px;" width="18" height="16" viewBox="0 0 18 16"><path d="M5 6 Q10 0 15 6 Q10 12 5 6Z" fill="none" stroke="#dcdcdc" stroke-width="1.3"/><circle cx="10" cy="6" r="1.7" fill="#dcdcdc"/><path d="M1 8 L8 11 L5 12 L4 16 Z" fill="#dcdcdc"/></svg>
<svg style="position:absolute;left:1330px;top:60px;" width="8" height="5" viewBox="0 0 8 5"><path d="M0.5 0.5 l3.5 3.5 l3.5 -3.5" fill="none" stroke="#d0d0d0" stroke-width="1.2"/></svg>
<div style="position:absolute;left:1346px;top:53px;width:19px;height:18px;background:#4772b3;border-radius:4px;border-top-right-radius:0;border-bottom-right-radius:0"></div>
<div style="position:absolute;left:1365px;top:53px;width:19px;height:18px;background:#262626;border-radius:4px;border-top-left-radius:0;border-bottom-left-radius:0"></div>
<svg style="position:absolute;left:1348px;top:54px;" width="16" height="16" viewBox="0 0 16 16"><circle cx="4" cy="13" r="2" fill="none" stroke="#fff" stroke-width="1.2"/><path d="M5.5 11.5 Q11 10 13 3 M9 3 H13.5 V7.5" fill="none" stroke="#fff" stroke-width="1.2"/></svg>
<svg style="position:absolute;left:1370px;top:60px;" width="8" height="5" viewBox="0 0 8 5"><path d="M0.5 0.5 l3.5 3.5 l3.5 -3.5" fill="none" stroke="#d0d0d0" stroke-width="1.2"/></svg>
<div style="position:absolute;left:1391px;top:53px;width:19px;height:18px;background:#4a4a4a;border-radius:4px;border-top-right-radius:0;border-bottom-right-radius:0"></div>
<div style="position:absolute;left:1410px;top:53px;width:19px;height:18px;background:#262626;border-radius:4px;border-top-left-radius:0;border-bottom-left-radius:0"></div>
<svg style="position:absolute;left:1393px;top:54px;" width="16" height="16" viewBox="0 0 16 16"><circle cx="6" cy="10.5" r="4.5" fill="none" stroke="#fff" stroke-width="1.3"/><circle cx="10" cy="6" r="4.5" fill="#f2f2f2"/><circle cx="9" cy="7" r="1.5" fill="#4772b3"/></svg>
<svg style="position:absolute;left:1415px;top:60px;" width="8" height="5" viewBox="0 0 8 5"><path d="M0.5 0.5 l3.5 3.5 l3.5 -3.5" fill="none" stroke="#555" stroke-width="1.2"/></svg>
<div style="position:absolute;left:1437px;top:53px;width:19px;height:18px;background:#2e2e2e;border-radius:4px;"></div>
<svg style="position:absolute;left:1439px;top:54px;" width="16" height="16" viewBox="0 0 16 16"><rect x="5.5" y="1.5" width="9" height="9" fill="none" stroke="#666" stroke-width="1.1"/><rect x="1.5" y="5.5" width="9" height="9" fill="none" stroke="#666" stroke-width="1.1"/></svg>
<div style="position:absolute;left:1461px;top:53px;width:19px;height:18px;background:#545454;border-radius:4px;border-top-right-radius:0;border-bottom-right-radius:0"></div>
<div style="position:absolute;left:1480px;top:53px;width:19px;height:18px;background:#545454;border-radius:4px;border-radius:0"></div>
<div style="position:absolute;left:1499px;top:53px;width:18px;height:18px;background:#545454;border-radius:4px;border-radius:0"></div>
<div style="position:absolute;left:1517px;top:53px;width:19px;height:18px;background:#4772b3;border-radius:4px;border-radius:0"></div>
<div style="position:absolute;left:1536px;top:53px;width:19px;height:18px;background:#262626;border-radius:4px;border-top-left-radius:0;border-bottom-left-radius:0"></div>
<svg style="position:absolute;left:1461px;top:53px;" width="76" height="18" viewBox="0 0 76 18"><g transform="translate(2,1)"><circle cx="8" cy="8" r="6.5" fill="none" stroke="#dcdcdc" stroke-width="1.1"/><ellipse cx="8" cy="8" rx="3" ry="6.5" fill="none" stroke="#dcdcdc" stroke-width="1"/><path d="M1.5 8 H14.5 M2.5 4.5 H13.5 M2.5 11.5 H13.5" stroke="#dcdcdc" stroke-width="1"/></g><circle cx="28.5" cy="9" r="7" fill="#e6e6e6"/><circle cx="47" cy="9" r="6.5" fill="#3a3a3a" stroke="#dcdcdc" stroke-width="1.1"/><path d="M47 2.5 A6.5 6.5 0 0 0 40.5 9 H47 Z" fill="#dcdcdc"/><path d="M47 9 L51.5 13.7 A6.5 6.5 0 0 1 47 15.5Z" fill="#dcdcdc"/><circle cx="65.5" cy="9" r="6.5" fill="none" stroke="#e6e6e6" stroke-width="1.3"/><path d="M61 8 A4.5 4.5 0 0 1 66 4" fill="none" stroke="#e6e6e6" stroke-width="1.3"/></svg>
<svg style="position:absolute;left:1543px;top:60px;" width="8" height="5" viewBox="0 0 8 5"><path d="M0.5 0.5 l3.5 3.5 l3.5 -3.5" fill="none" stroke="#d0d0d0" stroke-width="1.2"/></svg>
<div style="position:absolute;left:1563px;top:53px;width:18px;height:18px;background:#2e2e2e;border-radius:4px;"></div>
<svg style="position:absolute;left:1564px;top:54px;" width="16" height="16" viewBox="0 0 16 16"><rect x="1.5" y="1.5" width="13" height="13" fill="none" stroke="#555" stroke-width="1"/><path d="M4.5 14 V10 Q4.5 5 9.5 5 H13" fill="none" stroke="#555" stroke-width="2"/></svg>
<div style="position:absolute;left:965px;top:80px;width:94px;height:18px;background:#545454;border-radius:4px;"></div>
<div style="position:absolute;left:965px;top:80px;width:19px;height:18px;background:#4772b3;border-radius:4px;border-top-right-radius:0;border-bottom-right-radius:0"></div>
<div style="position:absolute;left:984px;top:80px;width:1px;height:18px;background:#474747;border-radius:0px;"></div>
<div style="position:absolute;left:1003px;top:80px;width:1px;height:18px;background:#474747;border-radius:0px;"></div>
<div style="position:absolute;left:1022px;top:80px;width:1px;height:18px;background:#474747;border-radius:0px;"></div>
<div style="position:absolute;left:1041px;top:80px;width:1px;height:18px;background:#474747;border-radius:0px;"></div>
<svg style="position:absolute;left:965px;top:80px;" width="94" height="18" viewBox="0 0 94 18"><rect x="3" y="3" width="12.5" height="12" fill="none" stroke="#fff" stroke-width="1.3" stroke-dasharray="2.8 1.6"/><path d="M22 8 H27 V3 H35 V11 H30 V15 H22 Z" fill="#d9d9d9"/><rect x="41.5" y="6.5" width="8" height="8" fill="none" stroke="#d9d9d9" stroke-width="1.2" stroke-dasharray="1.6 1.4"/><path d="M46 3 H54 V11 H50 V7 H46 Z" fill="#d9d9d9"/><path d="M61 6.5 H65 V3 H73 V11 H69 V15 H61 Z M65 6.5 V11 H69 V6.5 Z" fill="#d9d9d9" fill-rule="evenodd"/><rect x="79.5" y="3.5" width="11" height="11" fill="none" stroke="#d9d9d9" stroke-width="1.2" stroke-dasharray="1.6 1.4"/><rect x="82" y="6" width="6" height="6" fill="#d9d9d9"/></svg>
<div style="position:absolute;left:1517px;top:79px;width:62px;height:18px;background:#262626;border-radius:4px;"></div>
<div class="t" style="left:1524px;top:83.85px;font-size:11.4px;color:#e6e6e6;">Options</div>
<svg style="position:absolute;left:1570px;top:86px;" width="8" height="5" viewBox="0 0 8 5"><path d="M0.5 0.5 l3.5 3.5 l3.5 -3.5" fill="none" stroke="#d0d0d0" stroke-width="1.2"/></svg>
<div style="position:absolute;left:9px;top:109px;width:40px;height:69px;background:#232325;border-radius:5px;"></div>
<div style="position:absolute;left:9px;top:143px;width:40px;height:1px;background:#303032;border-radius:0px;"></div>
<div style="position:absolute;left:9px;top:185px;width:40px;height:137px;background:#232325;border-radius:5px;"></div>
<div style="position:absolute;left:9px;top:218px;width:40px;height:1px;background:#303032;border-radius:0px;"></div>
<div style="position:absolute;left:9px;top:253px;width:40px;height:1px;background:#303032;border-radius:0px;"></div>
<div style="position:absolute;left:9px;top:288px;width:40px;height:1px;background:#303032;border-radius:0px;"></div>
<div style="position:absolute;left:9px;top:330px;width:40px;height:67px;background:#232325;border-radius:5px;"></div>
<div style="position:absolute;left:9px;top:363px;width:40px;height:1px;background:#303032;border-radius:0px;"></div>
<div style="position:absolute;left:9px;top:405px;width:40px;height:33px;background:#232325;border-radius:5px;"></div>
<div style="position:absolute;left:9px;top:445px;width:40px;height:68px;background:#232325;border-radius:5px;"></div>
<div style="position:absolute;left:9px;top:479px;width:40px;height:1px;background:#303032;border-radius:0px;"></div>
<div style="position:absolute;left:9px;top:109px;width:40px;height:34px;background:#4772b3;border-radius:5px;border-bottom-left-radius:0;border-bottom-right-radius:0"></div>
<svg style="position:absolute;left:0px;top:0px;pointer-events:none" width="1920" height="1080" viewBox="0 0 1920 1080"><rect x="19" y="116" width="20" height="20" fill="none" stroke="#e8e0c8" stroke-width="1.3" stroke-dasharray="3 2"/><path d="M26 119.5 L35 127 L30 128 L26 133 Z" fill="#dfe8ff"/><path d="M46 138 V141 H43Z" fill="#d0d8ee"/><circle cx="29" cy="160.5" r="10" fill="none" stroke="#e8e8e8" stroke-width="1.4" stroke-dasharray="3.5 2.2"/><circle cx="29" cy="160.5" r="10" fill="none" stroke="#b44050" stroke-width="1.4" stroke-dasharray="3.5 2.2" stroke-dashoffset="3.5" opacity="0.8"/><path d="M29 153 V157.5 M29 163.5 V168 M21.5 160.5 H26 M32 160.5 H36.5" stroke="#9a9a9a" stroke-width="1.2"/><path d="M29 191 l-3.5 4 h7z M29 211 l-3.5 -4 h7z M19 201 l4 -3.5 v7z M39 201 l-4 -3.5 v7z" fill="#e0e0e0"/><path d="M29 196 v2.5 M29 203.5 v2.5 M24 201 h2.5 M31.5 201 h2.5" stroke="#e0e0e0" stroke-width="1.3"/><path d="M21 233 A9 9 0 0 1 37 233 M37 239 A9 9 0 0 1 21 239" fill="none" stroke="#e0e0e0" stroke-width="1.3"/><path d="M29 232 l4 4 l-4 4 l-4 -4z" fill="#c0c0c0"/><path d="M18 237 h6 l-3 4z M40 235 h-6 l3 -4z" fill="#e0e0e0"/><rect x="20" y="270" width="10" height="10" fill="#e6e6e6"/><path d="M24 261.5 H38.5 V276" fill="none" stroke="#cfcfcf" stroke-width="1.2"/><path d="M30 270 L36 264 M32 264 H36 V268" fill="none" stroke="#e6e6e6" stroke-width="1.2"/><path d="M46 284 V287 H43Z" fill="#bbb"/><circle cx="29" cy="306" r="10" fill="none" stroke="#e0e0e0" stroke-width="1.3" stroke-dasharray="5 2.5"/><rect x="24" y="301" width="10" height="10" fill="#e6e6e6"/><path d="M29 295 l-3 3 h6z M29 317 l-3 -3 h6z M18 306 l3 -3 v6z M40 306 l-3 -3 v6z" fill="#e0e0e0"/><path d="M20 351 L34 337 L38 341 L24 355 L19 356Z" fill="none" stroke="#e6e6e6" stroke-width="1.4"/><path d="M18 355 Q25 348 31 354 T41 356" fill="none" stroke="#9fd8c0" stroke-width="1.1"/><path d="M46 359 V362 H43Z" fill="#bbb"/><path d="M20 370 V390 H40" fill="none" stroke="#e6e6e6" stroke-width="2.4"/><path d="M22 378 A10 10 0 0 1 37 388 H22Z" fill="#6ecfa8"/><path d="M22 418 H33 V430 H22Z M22 418 L27 413 H38 L33 418 M38 413 V425 L33 430" fill="none" stroke="#dadada" stroke-width="1.2"/><path d="M17 412 h7 M20.5 408.5 v7" stroke="#6ecfa8" stroke-width="2"/><path d="M46 434 V437 H43Z" fill="#bbb"/><rect x="20.5" y="453.5" width="17" height="17" fill="none" stroke="#e0e0e0" stroke-width="1.2"/><path d="M26 469 V463 Q26 458 32 458 H35" fill="none" stroke="#d8d8d8" stroke-width="3"/><rect x="20" y="487" width="18" height="18" fill="none" stroke="#e0e0e0" stroke-width="1.3"/><path d="M23 490 L35 502 H23Z" fill="#e6e6e6"/><path d="M23 490 H35 V502" fill="none" stroke="#e0e0e0" stroke-width="1.2"/></svg>
<div style="position:absolute;left:929px;top:109px;width:40px;height:69px;background:#2a2a2c;border-radius:5px;"></div>
<div style="position:absolute;left:929px;top:143px;width:40px;height:1px;background:#303032;border-radius:0px;"></div>
<div style="position:absolute;left:929px;top:185px;width:40px;height:137px;background:#2a2a2c;border-radius:5px;"></div>
<div style="position:absolute;left:929px;top:218px;width:40px;height:1px;background:#303032;border-radius:0px;"></div>
<div style="position:absolute;left:929px;top:253px;width:40px;height:1px;background:#303032;border-radius:0px;"></div>
<div style="position:absolute;left:929px;top:288px;width:40px;height:1px;background:#303032;border-radius:0px;"></div>
<div style="position:absolute;left:929px;top:330px;width:40px;height:67px;background:#2a2a2c;border-radius:5px;"></div>
<div style="position:absolute;left:929px;top:363px;width:40px;height:1px;background:#303032;border-radius:0px;"></div>
<div style="position:absolute;left:929px;top:405px;width:40px;height:33px;background:#2a2a2c;border-radius:5px;"></div>
<div style="position:absolute;left:929px;top:445px;width:40px;height:68px;background:#2a2a2c;border-radius:5px;"></div>
<div style="position:absolute;left:929px;top:479px;width:40px;height:1px;background:#303032;border-radius:0px;"></div>
<div style="position:absolute;left:929px;top:109px;width:40px;height:34px;background:#4772b3;border-radius:5px;border-bottom-left-radius:0;border-bottom-right-radius:0"></div>
<svg style="position:absolute;left:0px;top:0px;pointer-events:none" width="1920" height="1080" viewBox="0 0 1920 1080"><rect x="939" y="116" width="20" height="20" fill="none" stroke="#e8e0c8" stroke-width="1.3" stroke-dasharray="3 2"/><path d="M946 119.5 L955 127 L950 128 L946 133 Z" fill="#dfe8ff"/><path d="M966 138 V141 H963Z" fill="#d0d8ee"/><circle cx="949" cy="160.5" r="10" fill="none" stroke="#e8e8e8" stroke-width="1.4" stroke-dasharray="3.5 2.2"/><circle cx="949" cy="160.5" r="10" fill="none" stroke="#b44050" stroke-width="1.4" stroke-dasharray="3.5 2.2" stroke-dashoffset="3.5" opacity="0.8"/><path d="M949 153 V157.5 M949 163.5 V168 M941.5 160.5 H946 M952 160.5 H956.5" stroke="#9a9a9a" stroke-width="1.2"/><path d="M949 191 l-3.5 4 h7z M949 211 l-3.5 -4 h7z M939 201 l4 -3.5 v7z M959 201 l-4 -3.5 v7z" fill="#e0e0e0"/><path d="M949 196 v2.5 M949 203.5 v2.5 M944 201 h2.5 M951.5 201 h2.5" stroke="#e0e0e0" stroke-width="1.3"/><path d="M941 233 A9 9 0 0 1 957 233 M957 239 A9 9 0 0 1 941 239" fill="none" stroke="#e0e0e0" stroke-width="1.3"/><path d="M949 232 l4 4 l-4 4 l-4 -4z" fill="#c0c0c0"/><path d="M938 237 h6 l-3 4z M960 235 h-6 l3 -4z" fill="#e0e0e0"/><rect x="940" y="270" width="10" height="10" fill="#e6e6e6"/><path d="M944 261.5 H958.5 V276" fill="none" stroke="#cfcfcf" stroke-width="1.2"/><path d="M950 270 L956 264 M952 264 H956 V268" fill="none" stroke="#e6e6e6" stroke-width="1.2"/><path d="M966 284 V287 H963Z" fill="#bbb"/><circle cx="949" cy="306" r="10" fill="none" stroke="#e0e0e0" stroke-width="1.3" stroke-dasharray="5 2.5"/><rect x="944" y="301" width="10" height="10" fill="#e6e6e6"/><path d="M949 295 l-3 3 h6z M949 317 l-3 -3 h6z M938 306 l3 -3 v6z M960 306 l-3 -3 v6z" fill="#e0e0e0"/><path d="M940 351 L954 337 L958 341 L944 355 L939 356Z" fill="none" stroke="#e6e6e6" stroke-width="1.4"/><path d="M938 355 Q945 348 951 354 T961 356" fill="none" stroke="#9fd8c0" stroke-width="1.1"/><path d="M966 359 V362 H963Z" fill="#bbb"/><path d="M940 370 V390 H960" fill="none" stroke="#e6e6e6" stroke-width="2.4"/><path d="M942 378 A10 10 0 0 1 957 388 H942Z" fill="#6ecfa8"/><path d="M942 418 H953 V430 H942Z M942 418 L947 413 H958 L953 418 M958 413 V425 L953 430" fill="none" stroke="#dadada" stroke-width="1.2"/><path d="M937 412 h7 M940.5 408.5 v7" stroke="#6ecfa8" stroke-width="2"/><path d="M966 434 V437 H963Z" fill="#bbb"/><rect x="940.5" y="453.5" width="17" height="17" fill="none" stroke="#e0e0e0" stroke-width="1.2"/><path d="M946 469 V463 Q946 458 952 458 H955" fill="none" stroke="#d8d8d8" stroke-width="3"/><rect x="940" y="487" width="18" height="18" fill="none" stroke="#e0e0e0" stroke-width="1.3"/><path d="M943 490 L955 502 H943Z" fill="#e6e6e6"/><path d="M943 490 H955 V502" fill="none" stroke="#e0e0e0" stroke-width="1.2"/></svg>
<svg style="position:absolute;left:0px;top:0px;" width="1920" height="1080" viewBox="0 0 1920 1080"><path d="M868 151 L867.6 120.4" stroke="#3a7dd8" stroke-width="2.2"/><path d="M868 151 L879 140.7" stroke="#6a9a2a" stroke-width="2.2"/><path d="M868 151 L898 154.6" stroke="#d8344a" stroke-width="2.2"/><circle cx="838" cy="147" r="8.3" fill="#7a3a44" stroke="#9a4552" stroke-width="1"/><circle cx="868.2" cy="181" r="8.3" fill="#33487a" stroke="#3f63a8" stroke-width="1.2"/><circle cx="857" cy="161.5" r="8.3" fill="#4a6a2e" stroke="#b8d840" stroke-width="1.6"/><circle cx="879" cy="140.7" r="8.3" fill="#5e9a2c"/><circle cx="867.6" cy="120.4" r="8.3" fill="#3a82e0"/><circle cx="898" cy="154.6" r="8.3" fill="#e03850"/><text x="867.6" y="124.6" font-size="11" text-anchor="middle" fill="#0e1e3a" font-family="Liberation Sans" font-weight="bold">Z</text><text x="879" y="144.9" font-size="11" text-anchor="middle" fill="#1e3010" font-family="Liberation Sans" font-weight="bold">Y</text><text x="898" y="158.8" font-size="11" text-anchor="middle" fill="#3a0c14" font-family="Liberation Sans" font-weight="bold">X</text></svg>
<svg style="position:absolute;left:0px;top:0px;" width="1920" height="1080" viewBox="0 0 1920 1080"><circle cx="895.7" cy="205" r="12.6" fill="#2f2e31"/><circle cx="895.7" cy="235.5" r="12.6" fill="#2f2e31"/><circle cx="895.7" cy="266" r="12.6" fill="#2f2e31"/><circle cx="895.7" cy="296.6" r="12.6" fill="#2f2e31"/><circle cx="897.7" cy="203" r="5.5" fill="none" stroke="#f0f0f0" stroke-width="1.5"/><path d="M893.7 207 L888.7 212" stroke="#f0f0f0" stroke-width="2.4"/><path d="M897.7 200 v6 M894.7 203 h6" stroke="#f0f0f0" stroke-width="1.3"/><path d="M891.7 242.5 L887.7 236.5 Q887.7 234.5 889.7 235.5 L891.7 237.5 V229.5 Q892.7 227.5 893.7 229.5 V234.5 V227.5 Q895.7 225.5 896.7 227.5 V234.5 V228.5 Q898.7 226.5 899.7 228.5 V234.5 V231.5 Q901.7 229.5 902.7 231.5 V238.5 Q901.7 243.5 896.7 243.5Z" fill="#f0f0f0"/><circle cx="892.7" cy="262" r="3.3" fill="#f0f0f0"/><circle cx="898.7" cy="262" r="3.3" fill="#f0f0f0"/><rect x="889.7" y="265" width="9" height="7" fill="#f0f0f0"/><path d="M898.7 268.5 L902.7 265.5 V271.5Z" fill="#f0f0f0"/><circle cx="892.7" cy="262" r="1" fill="#333"/><circle cx="898.7" cy="262" r="1" fill="#333"/><path d="M888.7 303.6 L891.7 289.6 H899.7 L902.7 303.6Z M890.2 298.6 H901.2 M890.9000000000001 293.6 H900.5 M893.2 289.6 L892.2 303.6 M898.2 289.6 L899.2 303.6 M895.7 289.6 V303.6" fill="none" stroke="#f0f0f0" stroke-width="1.2"/></svg>
<svg style="position:absolute;left:0px;top:0px;" width="1920" height="1080" viewBox="0 0 1920 1080"><path d="M1502.5 150.8 H1567.3 M1535 118.6 V183.4" stroke="#d8344a" stroke-width="2"/><path d="M1535 118.6 V183.4" stroke="#6a9a2a" stroke-width="2"/><path d="M1535 150.8 H1567" stroke="#d8344a" stroke-width="2"/><circle cx="1502.5" cy="150.8" r="7.8" fill="#7a3a44" stroke="#a04552" stroke-width="1.2"/><circle cx="1535" cy="183.4" r="7.8" fill="#4a6a2e" stroke="#6a9a2a" stroke-width="1.2"/><circle cx="1535" cy="118.6" r="7.8" fill="#6aa82c"/><circle cx="1567.3" cy="150.8" r="7.8" fill="#e03850"/><circle cx="1535" cy="150.8" r="7.8" fill="#3a82e0"/><text x="1535" y="122.8" font-size="10.5" text-anchor="middle" fill="#1e3010" font-family="Liberation Sans" font-weight="bold">Y</text><text x="1567.3" y="155" font-size="10.5" text-anchor="middle" fill="#3a0c14" font-family="Liberation Sans" font-weight="bold">X</text><text x="1535" y="155" font-size="10.5" text-anchor="middle" fill="#0e1e3a" font-family="Liberation Sans" font-weight="bold">Z</text></svg>
<svg style="position:absolute;left:0px;top:0px;" width="1920" height="1080" viewBox="0 0 1920 1080"><circle cx="1562.7" cy="204.7" r="12.6" fill="#060606"/><circle cx="1562.7" cy="235.5" r="12.6" fill="#060606"/><circle cx="1562.7" cy="266.6" r="12.6" fill="#060606"/><circle cx="1564.7" cy="202.7" r="5.5" fill="none" stroke="#f0f0f0" stroke-width="1.5"/><path d="M1560.7 206.7 L1555.7 211.7" stroke="#f0f0f0" stroke-width="2.4"/><path d="M1564.7 199.7 v6 M1561.7 202.7 h6" stroke="#f0f0f0" stroke-width="1.3"/><path d="M1558.7 242.5 L1554.7 236.5 Q1554.7 234.5 1556.7 235.5 L1558.7 237.5 V229.5 Q1559.7 227.5 1560.7 229.5 V234.5 V227.5 Q1562.7 225.5 1563.7 227.5 V234.5 V228.5 Q1565.7 226.5 1566.7 228.5 V234.5 V231.5 Q1568.7 229.5 1569.7 231.5 V238.5 Q1568.7 243.5 1563.7 243.5Z" fill="#f0f0f0"/><circle cx="1559.7" cy="262.6" r="3.3" fill="#f0f0f0"/><circle cx="1565.7" cy="262.6" r="3.3" fill="#f0f0f0"/><rect x="1556.7" y="265.6" width="9" height="7" fill="#f0f0f0"/><path d="M1565.7 269.1 L1569.7 266.1 V272.1Z" fill="#f0f0f0"/><circle cx="1559.7" cy="262.6" r="1" fill="#333"/><circle cx="1565.7" cy="262.6" r="1" fill="#333"/></svg>
<svg style="position:absolute;left:910px;top:117px;" width="6" height="10" viewBox="0 0 6 10"><path d="M5 0.5 L1 5 L5 9.5" fill="none" stroke="#aaa" stroke-width="1.1"/></svg>
<svg style="position:absolute;left:1578px;top:117px;" width="6" height="10" viewBox="0 0 6 10"><path d="M5 0.5 L1 5 L5 9.5" fill="none" stroke="#aaa" stroke-width="1.1"/></svg>
<div class="t" style="left:67px;top:112.35px;font-size:11.4px;color:#f0f0f0;">fps: 30</div>
<div class="t" style="left:67px;top:130.35px;font-size:11.4px;color:#f0f0f0;">(71) Graphic Elements | Gradient Circle</div>
<div style="position:absolute;left:1587px;top:50px;width:333px;height:323px;background:#282828;border-radius:6px;"></div>
<div style="position:absolute;left:1587px;top:50px;width:333px;height:25px;background:#2b2b2b;border-radius:6px;border-bottom-left-radius:0;border-bottom-right-radius:0"></div>
<div style="position:absolute;left:1597px;top:53px;width:30px;height:18px;background:#282828;border-radius:4px;"></div>
<svg style="position:absolute;left:0px;top:0px;" width="1920" height="1080" viewBox="0 0 1920 1080"><rect x="1601" y="56" width="5" height="3" fill="#ddd"/><path d="M1603 59 V67 H1607 M1603 63.5 H1607" fill="none" stroke="#ddd" stroke-width="1.1"/><rect x="1608" y="62" width="6" height="3" fill="#ddd"/><rect x="1608" y="66" width="6" height="3" fill="#ddd"/><path d="M1617 60 l3.5 3.5 l3.5 -3.5" fill="none" stroke="#ddd" stroke-width="1.2"/></svg>
<div style="position:absolute;left:1634px;top:53px;width:30px;height:18px;background:#282828;border-radius:4px;"></div>
<svg style="position:absolute;left:1637px;top:55px;" width="26" height="14" viewBox="0 0 26 14"><rect x="4.5" y="0.5" width="9" height="9" fill="none" stroke="#d0d0d0" stroke-width="1.2"/><path d="M2.5 3 V11.5 H11" fill="none" stroke="#d0d0d0" stroke-width="1.1"/><path d="M0.5 5 V13.5 H9" fill="none" stroke="#d0d0d0" stroke-width="1"/><path d="M5.5 8.5 L8 5 L10 7 L11 5.5 L13 8.5Z" fill="#d0d0d0"/><path d="M17 6 L20.5 9.5 L24 6" fill="none" stroke="#d0d0d0" stroke-width="1.2"/></svg>
<div style="position:absolute;left:1688px;top:53px;width:109px;height:18px;background:#1d1d1d;border-radius:4px;"></div>
<svg style="position:absolute;left:1692px;top:55px;" width="14" height="14" viewBox="0 0 14 14"><circle cx="8.5" cy="5.5" r="4.2" fill="none" stroke="#d8d8d8" stroke-width="1.2"/><path d="M5.5 8.5 L1 13" stroke="#d8d8d8" stroke-width="1.3"/></svg>
<div style="position:absolute;left:1856px;top:53px;width:30px;height:18px;background:#282828;border-radius:4px;"></div>
<svg style="position:absolute;left:1858px;top:55px;" width="28" height="14" viewBox="0 0 28 14"><path d="M1 1 H14 L9 7 V13 L6 11 V7Z" fill="none" stroke="#dcdcdc" stroke-width="1.2"/><path d="M19 5 l3.5 3.5 l3.5 -3.5" fill="none" stroke="#ddd" stroke-width="1.2"/></svg>
<div style="position:absolute;left:1893px;top:53px;width:17px;height:18px;background:#474747;border-radius:4px;"></div>
<svg style="position:absolute;left:1894px;top:55px;" width="16" height="15" viewBox="0 0 16 15"><rect x="1" y="4" width="9" height="2.5" fill="#bbb"/><rect x="1.5" y="7.5" width="8" height="6" fill="none" stroke="#bbb" stroke-width="1.1"/><circle cx="12" cy="4" r="3.3" fill="#474747" stroke="#eee" stroke-width="1.1"/><path d="M12 2 V6 M10 4 H14" stroke="#eee" stroke-width="1"/></svg>
<div style="position:absolute;left:1587px;top:96px;width:333px;height:20px;background:#2b2b2b;border-radius:0px;"></div>
<div style="position:absolute;left:1587px;top:136px;width:333px;height:20px;background:#2b2b2b;border-radius:0px;"></div>
<div style="position:absolute;left:1587px;top:176px;width:333px;height:20px;background:#2b2b2b;border-radius:0px;"></div>
<div style="position:absolute;left:1587px;top:216px;width:333px;height:20px;background:#2b2b2b;border-radius:0px;"></div>
<div style="position:absolute;left:1587px;top:256px;width:333px;height:20px;background:#2b2b2b;border-radius:0px;"></div>
<div style="position:absolute;left:1587px;top:296px;width:333px;height:20px;background:#2b2b2b;border-radius:0px;"></div>
<div style="position:absolute;left:1587px;top:336px;width:333px;height:20px;background:#2b2b2b;border-radius:0px;"></div>
<div style="position:absolute;left:1587px;top:236px;width:333px;height:20px;background:#334b7a;border-radius:0px;"></div>
<svg style="position:absolute;left:0px;top:0px;" width="1920" height="1080" viewBox="0 0 1920 1080"><rect x="1611" y="84" width="14" height="3.5" fill="#e0e0e0"/><rect x="1612" y="89" width="12" height="8" fill="#e0e0e0"/><rect x="1616" y="91" width="4" height="1.6" fill="#282828"/><path d="M1613 108 H1621 L1617 115Z" fill="#cfcfcf"/><rect x="1629.5" y="101.5" width="19" height="18" rx="4" fill="#3a3a3a" stroke="#5a5a5a"/><rect x="1632" y="104" width="14" height="3.5" fill="#e0e0e0"/><rect x="1633" y="109" width="12" height="8" fill="#e0e0e0"/><rect x="1637" y="111" width="4" height="1.6" fill="#282828"/><path d="M1617.5 118 V254 M1617.5 282 V297" stroke="#444" stroke-width="1"/><path d="M1635 122.5 V130.5 L1641.5 126.5Z" fill="#8a8a8a"/><path d="M1651 120 H1665 L1658 133Z M1654.5 122.5 H1661.5 L1658 129.5Z" fill="#7a5a40" fill-rule="evenodd"/><path d="M1635 142.5 V150.5 L1641.5 146.5Z" fill="#cfcfcf"/><path d="M1651 140 H1665 L1658 153Z M1654.5 142.5 H1661.5 L1658 149.5Z" fill="#e8a060" fill-rule="evenodd"/><path d="M1635 162.5 V170.5 L1641.5 166.5Z" fill="#cfcfcf"/><path d="M1651 160 H1665 L1658 173Z M1654.5 162.5 H1661.5 L1658 169.5Z" fill="#e8a060" fill-rule="evenodd"/><path d="M1635 182.5 V190.5 L1641.5 186.5Z" fill="#cfcfcf"/><path d="M1651 180 H1665 L1658 193Z M1654.5 182.5 H1661.5 L1658 189.5Z" fill="#e8a060" fill-rule="evenodd"/><path d="M1635 202.5 V210.5 L1641.5 206.5Z" fill="#cfcfcf"/><path d="M1651 200 H1665 L1658 213Z M1654.5 202.5 H1661.5 L1658 209.5Z" fill="#e8a060" fill-rule="evenodd"/><path d="M1635 222.5 V230.5 L1641.5 226.5Z" fill="#cfcfcf"/><path d="M1651 220 H1665 L1658 233Z M1654.5 222.5 H1661.5 L1658 229.5Z" fill="#e8a060" fill-rule="evenodd"/><path d="M1635 242.5 V250.5 L1641.5 246.5Z" fill="#cfcfcf"/><rect x="1647.5" y="236.5" width="20" height="19" rx="4" fill="#4a6090" stroke="#6a80b0"/><path d="M1651 240 H1665 L1658 253Z M1654.5 242.5 H1661.5 L1658 249.5Z" fill="#e8a060" fill-rule="evenodd"/></svg>
<div class="t" style="left:1672px;top:122.35px;font-size:11.4px;color:#8a8a8a;">BooleanCylinder</div>
<div class="t" style="left:1672px;top:142.35px;font-size:11.4px;color:#e0e0e0;">CenterCircle</div>
<div class="t" style="left:1672px;top:162.35px;font-size:11.4px;color:#e0e0e0;">External_Circle01</div>
<div class="t" style="left:1672px;top:182.35px;font-size:11.4px;color:#e0e0e0;">External_Circle02</div>
<div class="t" style="left:1672px;top:202.35px;font-size:11.4px;color:#e0e0e0;">External_Circle03</div>
<div class="t" style="left:1672px;top:222.35px;font-size:11.4px;color:#e0e0e0;">External_Circle04</div>
<div class="t" style="left:1672px;top:242.35px;font-size:11.4px;color:#f2c48c;">Gradient Circle</div>
<div class="t" style="left:1632px;top:82.35px;font-size:11.4px;color:#e0e0e0;">Scene Collection</div>
<div class="t" style="left:1652px;top:102.35px;font-size:11.4px;color:#e0e0e0;">Graphic Elements</div>
<svg style="position:absolute;left:0px;top:0px;" width="1920" height="1080" viewBox="0 0 1920 1080"><path d="M1778 121 H1788 L1783 131Z" fill="none" stroke="#2a8a68" stroke-width="1.3"/><rect x="1776" y="119" width="3.5" height="3.5" fill="#282828" stroke="#2a8a68" stroke-width="1.1"/><rect x="1786.5" y="119" width="3.5" height="3.5" fill="#282828" stroke="#2a8a68" stroke-width="1.1"/><rect x="1781.2" y="129.5" width="3.5" height="3.5" fill="#282828" stroke="#2a8a68" stroke-width="1.1"/><path d="M1759 140.5 H1763.5 Q1765.5 140.5 1764 142.5 L1761 146.5 Q1759.5 149 1762.5 149 H1769" fill="none" stroke="#d0d0d0" stroke-width="1.1"/><path d="M1767 147 L1769.5 149 L1767 151" fill="none" stroke="#d0d0d0" stroke-width="1.1"/><path d="M1779 141 H1789 L1784 151Z" fill="none" stroke="#3cc08a" stroke-width="1.3"/><rect x="1777" y="139" width="3.5" height="3.5" fill="#282828" stroke="#3cc08a" stroke-width="1.1"/><rect x="1787.5" y="139" width="3.5" height="3.5" fill="#282828" stroke="#3cc08a" stroke-width="1.1"/><rect x="1782.2" y="149.5" width="3.5" height="3.5" fill="#282828" stroke="#3cc08a" stroke-width="1.1"/><path d="M1786 160.5 H1790.5 Q1792.5 160.5 1791 162.5 L1788 166.5 Q1786.5 169 1789.5 169 H1796" fill="none" stroke="#d0d0d0" stroke-width="1.1"/><path d="M1794 167 L1796.5 169 L1794 171" fill="none" stroke="#d0d0d0" stroke-width="1.1"/><path d="M1806 161 H1816 L1811 171Z" fill="none" stroke="#3cc08a" stroke-width="1.3"/><rect x="1804" y="159" width="3.5" height="3.5" fill="#282828" stroke="#3cc08a" stroke-width="1.1"/><rect x="1814.5" y="159" width="3.5" height="3.5" fill="#282828" stroke="#3cc08a" stroke-width="1.1"/><rect x="1809.2" y="169.5" width="3.5" height="3.5" fill="#282828" stroke="#3cc08a" stroke-width="1.1"/><path d="M1786 180.5 H1790.5 Q1792.5 180.5 1791 182.5 L1788 186.5 Q1786.5 189 1789.5 189 H1796" fill="none" stroke="#d0d0d0" stroke-width="1.1"/><path d="M1794 187 L1796.5 189 L1794 191" fill="none" stroke="#d0d0d0" stroke-width="1.1"/><path d="M1806 181 H1816 L1811 191Z" fill="none" stroke="#3cc08a" stroke-width="1.3"/><rect x="1804" y="179" width="3.5" height="3.5" fill="#282828" stroke="#3cc08a" stroke-width="1.1"/><rect x="1814.5" y="179" width="3.5" height="3.5" fill="#282828" stroke="#3cc08a" stroke-width="1.1"/><rect x="1809.2" y="189.5" width="3.5" height="3.5" fill="#282828" stroke="#3cc08a" stroke-width="1.1"/><path d="M1786 200.5 H1790.5 Q1792.5 200.5 1791 202.5 L1788 206.5 Q1786.5 209 1789.5 209 H1796" fill="none" stroke="#d0d0d0" stroke-width="1.1"/><path d="M1794 207 L1796.5 209 L1794 211" fill="none" stroke="#d0d0d0" stroke-width="1.1"/><path d="M1806 201 H1816 L1811 211Z" fill="none" stroke="#3cc08a" stroke-width="1.3"/><rect x="1804" y="199" width="3.5" height="3.5" fill="#282828" stroke="#3cc08a" stroke-width="1.1"/><rect x="1814.5" y="199" width="3.5" height="3.5" fill="#282828" stroke="#3cc08a" stroke-width="1.1"/><rect x="1809.2" y="209.5" width="3.5" height="3.5" fill="#282828" stroke="#3cc08a" stroke-width="1.1"/><path d="M1786 220.5 H1790.5 Q1792.5 220.5 1791 222.5 L1788 226.5 Q1786.5 229 1789.5 229 H1796" fill="none" stroke="#d0d0d0" stroke-width="1.1"/><path d="M1794 227 L1796.5 229 L1794 231" fill="none" stroke="#d0d0d0" stroke-width="1.1"/><path d="M1806 221 H1816 L1811 231Z" fill="none" stroke="#3cc08a" stroke-width="1.3"/><rect x="1804" y="219" width="3.5" height="3.5" fill="#282828" stroke="#3cc08a" stroke-width="1.1"/><rect x="1814.5" y="219" width="3.5" height="3.5" fill="#282828" stroke="#3cc08a" stroke-width="1.1"/><rect x="1809.2" y="229.5" width="3.5" height="3.5" fill="#282828" stroke="#3cc08a" stroke-width="1.1"/><path d="M1772 241 H1782 L1777 251Z" fill="none" stroke="#48b8e8" stroke-width="1.3"/><rect x="1770" y="239" width="3.5" height="3.5" fill="#282828" stroke="#48b8e8" stroke-width="1.1"/><rect x="1780.5" y="239" width="3.5" height="3.5" fill="#282828" stroke="#48b8e8" stroke-width="1.1"/><rect x="1775.2" y="249.5" width="3.5" height="3.5" fill="#282828" stroke="#48b8e8" stroke-width="1.1"/><rect x="1855" y="101" width="11" height="11" rx="1.5" fill="#e6e6e6"/><path d="M1857.2 106.5 L1859.6 109 L1864 103.8" fill="none" stroke="#282828" stroke-width="1.6"/><path d="M1872 105.5 Q1879 98.5 1886 105.5 Q1879 112.5 1872 105.5Z" fill="none" stroke="#e6e6e6" stroke-width="1.6"/><circle cx="1879" cy="105.5" r="2.3" fill="#e6e6e6"/><rect x="1892" y="100.5" width="14" height="10" rx="1" fill="#e6e6e6"/><rect x="1895" y="98" width="6" height="3" fill="#e6e6e6"/><circle cx="1899" cy="105.5" r="3.3" fill="#282828"/><circle cx="1899" cy="105.5" r="1.8" fill="#e6e6e6"/><path d="M1873 126 Q1879 132 1885 126" fill="none" stroke="#aaa" stroke-width="1.3"/><rect x="1892.5" y="120.5" width="13" height="10" fill="none" stroke="#aaa" stroke-width="1.2"/><path d="M1896 123 l6 5 M1902 123 l-6 5" stroke="#aaa" stroke-width="1"/><path d="M1872 145.5 Q1879 138.5 1886 145.5 Q1879 152.5 1872 145.5Z" fill="none" stroke="#e6e6e6" stroke-width="1.6"/><circle cx="1879" cy="145.5" r="2.3" fill="#e6e6e6"/><rect x="1892" y="140.5" width="14" height="10" rx="1" fill="#e6e6e6"/><rect x="1895" y="138" width="6" height="3" fill="#e6e6e6"/><circle cx="1899" cy="145.5" r="3.3" fill="#282828"/><circle cx="1899" cy="145.5" r="1.8" fill="#e6e6e6"/><path d="M1872 165.5 Q1879 158.5 1886 165.5 Q1879 172.5 1872 165.5Z" fill="none" stroke="#e6e6e6" stroke-width="1.6"/><circle cx="1879" cy="165.5" r="2.3" fill="#e6e6e6"/><rect x="1892" y="160.5" width="14" height="10" rx="1" fill="#e6e6e6"/><rect x="1895" y="158" width="6" height="3" fill="#e6e6e6"/><circle cx="1899" cy="165.5" r="3.3" fill="#282828"/><circle cx="1899" cy="165.5" r="1.8" fill="#e6e6e6"/><path d="M1872 185.5 Q1879 178.5 1886 185.5 Q1879 192.5 1872 185.5Z" fill="none" stroke="#e6e6e6" stroke-width="1.6"/><circle cx="1879" cy="185.5" r="2.3" fill="#e6e6e6"/><rect x="1892" y="180.5" width="14" height="10" rx="1" fill="#e6e6e6"/><rect x="1895" y="178" width="6" height="3" fill="#e6e6e6"/><circle cx="1899" cy="185.5" r="3.3" fill="#282828"/><circle cx="1899" cy="185.5" r="1.8" fill="#e6e6e6"/><path d="M1872 205.5 Q1879 198.5 1886 205.5 Q1879 212.5 1872 205.5Z" fill="none" stroke="#e6e6e6" stroke-width="1.6"/><circle cx="1879" cy="205.5" r="2.3" fill="#e6e6e6"/><rect x="1892" y="200.5" width="14" height="10" rx="1" fill="#e6e6e6"/><rect x="1895" y="198" width="6" height="3" fill="#e6e6e6"/><circle cx="1899" cy="205.5" r="3.3" fill="#282828"/><circle cx="1899" cy="205.5" r="1.8" fill="#e6e6e6"/><path d="M1872 225.5 Q1879 218.5 1886 225.5 Q1879 232.5 1872 225.5Z" fill="none" stroke="#e6e6e6" stroke-width="1.6"/><circle cx="1879" cy="225.5" r="2.3" fill="#e6e6e6"/><rect x="1892" y="220.5" width="14" height="10" rx="1" fill="#e6e6e6"/><rect x="1895" y="218" width="6" height="3" fill="#e6e6e6"/><circle cx="1899" cy="225.5" r="3.3" fill="#282828"/><circle cx="1899" cy="225.5" r="1.8" fill="#e6e6e6"/><path d="M1872 245.5 Q1879 238.5 1886 245.5 Q1879 252.5 1872 245.5Z" fill="none" stroke="#e6e6e6" stroke-width="1.6"/><circle cx="1879" cy="245.5" r="2.3" fill="#e6e6e6"/><rect x="1892" y="240.5" width="14" height="10" rx="1" fill="#e6e6e6"/><rect x="1895" y="238" width="6" height="3" fill="#e6e6e6"/><circle cx="1899" cy="245.5" r="3.3" fill="#282828"/><circle cx="1899" cy="245.5" r="1.8" fill="#e6e6e6"/><path d="M1613 268 H1621 L1617 275Z" fill="#cfcfcf"/><rect x="1631" y="264" width="14" height="3.5" fill="#e0e0e0"/><rect x="1632" y="269" width="12" height="8" fill="#e0e0e0"/><rect x="1636" y="271" width="4" height="1.6" fill="#282828"/><rect x="1855" y="261" width="11" height="11" rx="1.5" fill="#e6e6e6"/><path d="M1857.2 266.5 L1859.6 269 L1864 263.8" fill="none" stroke="#282828" stroke-width="1.6"/><path d="M1872 265.5 Q1879 258.5 1886 265.5 Q1879 272.5 1872 265.5Z" fill="none" stroke="#e6e6e6" stroke-width="1.6"/><circle cx="1879" cy="265.5" r="2.3" fill="#e6e6e6"/><rect x="1892" y="260.5" width="14" height="10" rx="1" fill="#e6e6e6"/><rect x="1895" y="258" width="6" height="3" fill="#e6e6e6"/><circle cx="1899" cy="265.5" r="3.3" fill="#282828"/><circle cx="1899" cy="265.5" r="1.8" fill="#e6e6e6"/><path d="M1635 282.5 V290.5 L1641.5 286.5Z" fill="#cfcfcf"/><circle cx="1654" cy="281" r="3.5" fill="#e8a060"/><circle cx="1661" cy="281" r="3.5" fill="#e8a060"/><rect x="1651" y="284" width="10" height="7" fill="#e8a060"/><path d="M1661 287 L1665 284 V291Z" fill="#e8a060"/><rect x="1731.5" y="276.5" width="19" height="19" rx="4" fill="#2e5a48" stroke="#3a7a60"/><circle cx="1738" cy="283" r="3" fill="none" stroke="#5ad0a0" stroke-width="1.1"/><circle cx="1744" cy="283" r="3" fill="none" stroke="#5ad0a0" stroke-width="1.1"/><rect x="1735" y="286" width="9" height="6" fill="none" stroke="#5ad0a0" stroke-width="1.1"/><path d="M1872 285.5 Q1879 278.5 1886 285.5 Q1879 292.5 1872 285.5Z" fill="none" stroke="#e6e6e6" stroke-width="1.6"/><circle cx="1879" cy="285.5" r="2.3" fill="#e6e6e6"/><rect x="1892" y="280.5" width="14" height="10" rx="1" fill="#e6e6e6"/><rect x="1895" y="278" width="6" height="3" fill="#e6e6e6"/><circle cx="1899" cy="285.5" r="3.3" fill="#282828"/><circle cx="1899" cy="285.5" r="1.8" fill="#e6e6e6"/></svg>
<div class="t" style="left:1652px;top:262.35px;font-size:11.4px;color:#e0e0e0;">Camera</div>
<div class="t" style="left:1672px;top:282.35px;font-size:11.4px;color:#e0e0e0;">Camera</div>
<div style="position:absolute;left:1587px;top:376px;width:333px;height:683px;background:#2e2e2e;border-radius:6px;"></div>
<div style="position:absolute;left:1587px;top:376px;width:333px;height:25px;background:#2e2e2e;border-radius:6px;border-bottom-left-radius:0;border-bottom-right-radius:0"></div>
<div style="position:absolute;left:1597px;top:379px;width:30px;height:18px;background:#282828;border-radius:4px;"></div>
<svg style="position:absolute;left:0px;top:0px;" width="1920" height="1080" viewBox="0 0 1920 1080"><rect x="1601" y="381.5" width="14" height="6.5" rx="3.25" fill="#e6e6e6"/><rect x="1607" y="382.8" width="6.5" height="4" rx="1.5" fill="#282828"/><rect x="1601" y="389.5" width="14" height="6.5" rx="3.25" fill="#e6e6e6"/><rect x="1608.5" y="390.8" width="4.5" height="4" rx="1.5" fill="#282828"/><path d="M1618 387 l3 3 l3 -3" fill="none" stroke="#ddd" stroke-width="1.1"/></svg>
<div style="position:absolute;left:1700px;top:379px;width:109px;height:18px;background:#1d1d1d;border-radius:4px;"></div>
<svg style="position:absolute;left:1704px;top:381px;" width="14" height="14" viewBox="0 0 14 14"><circle cx="8.5" cy="5.5" r="4.2" fill="none" stroke="#d8d8d8" stroke-width="1.2"/><path d="M5.5 8.5 L1 13" stroke="#d8d8d8" stroke-width="1.3"/></svg>
<div style="position:absolute;left:1893px;top:379px;width:17px;height:18px;background:#282828;border-radius:4px;"></div>
<svg style="position:absolute;left:1897px;top:386px;" width="9" height="5" viewBox="0 0 9 5"><path d="M0.5 0.5 l4 4 l4 -4" fill="none" stroke="#ddd" stroke-width="1.1"/></svg>
<div style="position:absolute;left:1587px;top:401px;width:31px;height:658px;background:#202020;border-radius:0px;border-bottom-left-radius:6px"></div>
<div style="position:absolute;left:1589px;top:473px;width:29px;height:27px;background:#2e2e2e;border-radius:4px;border-top-right-radius:0;border-bottom-right-radius:0"></div>
<svg style="position:absolute;left:0px;top:0px;" width="1920" height="1080" viewBox="0 0 1920 1080"><path d="M1597 417 V425" stroke="#ddd" stroke-width="1.3"/><circle cx="1597" cy="428" r="3" fill="#ddd"/><path d="M1606 416 V430" stroke="#ddd" stroke-width="2.2"/><path d="M1603 415 Q1603 420 1606 420 Q1609 420 1609 415" fill="none" stroke="#ddd" stroke-width="2"/><rect x="1596" y="452" width="14" height="11" rx="1.5" fill="none" stroke="#ccc" stroke-width="1.4"/><rect x="1598" y="455" width="7" height="5" fill="#ccc"/><rect x="1605" y="449" width="4" height="3" fill="#ccc"/><rect x="1596" y="480" width="14" height="4" fill="#ddd"/><rect x="1597.5" y="485" width="11" height="8" fill="none" stroke="#ddd" stroke-width="1.3"/><path d="M1599 492 l3 -4 l2 2 l2 -2 l2 4z" fill="#ddd"/><rect x="1600" y="507" width="10" height="10" fill="none" stroke="#ccc" stroke-width="1.3"/><path d="M1598 509 V519 H1608 M1596 511 V521 H1606" fill="none" stroke="#ccc" stroke-width="1.1"/><path d="M1601 515 l3 -4 l2 2 l1.5 -2 l2 4z" fill="#ccc"/><path d="M1599 535 L1603 544 A4 4 0 0 1 1595 544Z" fill="#ddd"/><circle cx="1607" cy="537" r="2" fill="#ddd"/><circle cx="1606" cy="546" r="3.5" fill="#202020" stroke="#ddd" stroke-width="1.3"/><circle cx="1603" cy="571" r="6.3" fill="#7a2e48" stroke="#b04a68" stroke-width="1"/><path d="M1598.5 567 Q1602 567.5 1601.5 571 Q1601 574 1603.5 576.5 M1605.5 565.5 Q1604 569 1608 571.5" fill="none" stroke="#c86080" stroke-width="1.4"/><path d="M1596 578 L1610.5 564" stroke="#b04a68" stroke-width="0.9"/><rect x="1596.5" y="600.5" width="13" height="3.5" fill="none" stroke="#ddd" stroke-width="1.2"/><rect x="1597.5" y="605.5" width="11" height="8" fill="none" stroke="#ddd" stroke-width="1.2"/><rect x="1601.5" y="607.5" width="3" height="1.5" fill="#ddd"/><rect x="1590" y="622" width="26" height="1" fill="#2a2a2a"/><rect x="1590" y="592" width="26" height="1" fill="#2a2a2a"/><rect x="1590" y="440" width="26" height="1" fill="#2a2a2a"/><path d="M1596 640 V636 H1600 M1606 636 H1610 V640 M1610 646 V650 H1606 M1600 650 H1596 V646" fill="none" stroke="#e09050" stroke-width="1.2"/><rect x="1599" y="639" width="8" height="8" fill="#e09050"/><path d="M1597 677 L1605 669" stroke="#6a8ad8" stroke-width="3.2" stroke-linecap="round"/><circle cx="1606.5" cy="667.5" r="4" fill="#6a8ad8"/><path d="M1606 666 l4 -3" stroke="#202020" stroke-width="2"/><circle cx="1598" cy="694" r="2.5" fill="#6a8ad8"/><path d="M1598 694 L1609 704 M1598 694 H1609 M1598 694 V705" stroke="#6a8ad8" stroke-width="1.1"/><circle cx="1603" cy="727" r="6" fill="none" stroke="#6a8ad8" stroke-width="1.4"/><circle cx="1603" cy="727" r="2.5" fill="#6a8ad8"/><circle cx="1608" cy="722" r="1.8" fill="#6a8ad8"/><ellipse cx="1603" cy="755" rx="7" ry="4.5" transform="rotate(-35 1603 755)" fill="none" stroke="#6a8ad8" stroke-width="1.5"/><circle cx="1601" cy="757" r="2.2" fill="#6a8ad8"/><path d="M1597 778 H1609 L1603 789Z" fill="none" stroke="#40c890" stroke-width="1.4"/><rect x="1595.5" y="776" width="3.5" height="3.5" fill="#202020" stroke="#40c890"/><rect x="1607" y="776" width="3.5" height="3.5" fill="#202020" stroke="#40c890"/><rect x="1601.3" y="787" width="3.5" height="3.5" fill="#202020" stroke="#40c890"/><circle cx="1603" cy="811" r="6.5" fill="#c04a5a"/><path d="M1603 804.5 A6.5 6.5 0 0 0 1596.5 811 H1603Z M1603 811 L1608 815.5 A6.5 6.5 0 0 1 1603 817.5Z" fill="#202020"/><rect x="1596" y="840" width="3" height="3" fill="#c04a5a"/><rect x="1596" y="843" width="3" height="3" fill="#5a2030"/><rect x="1596" y="846" width="3" height="3" fill="#c04a5a"/><rect x="1596" y="849" width="3" height="3" fill="#5a2030"/><rect x="1596" y="852" width="3" height="3" fill="#c04a5a"/><rect x="1599" y="840" width="3" height="3" fill="#5a2030"/><rect x="1599" y="843" width="3" height="3" fill="#c04a5a"/><rect x="1599" y="846" width="3" height="3" fill="#5a2030"/><rect x="1599" y="849" width="3" height="3" fill="#c04a5a"/><rect x="1599" y="852" width="3" height="3" fill="#5a2030"/><rect x="1602" y="840" width="3" height="3" fill="#c04a5a"/><rect x="1602" y="843" width="3" height="3" fill="#5a2030"/><rect x="1602" y="846" width="3" height="3" fill="#c04a5a"/><rect x="1602" y="849" width="3" height="3" fill="#5a2030"/><rect x="1602" y="852" width="3" height="3" fill="#c04a5a"/><rect x="1605" y="840" width="3" height="3" fill="#5a2030"/><rect x="1605" y="843" width="3" height="3" fill="#c04a5a"/><rect x="1605" y="846" width="3" height="3" fill="#5a2030"/><rect x="1605" y="849" width="3" height="3" fill="#c04a5a"/><rect x="1605" y="852" width="3" height="3" fill="#5a2030"/><rect x="1608" y="840" width="3" height="3" fill="#c04a5a"/><rect x="1608" y="843" width="3" height="3" fill="#5a2030"/><rect x="1608" y="846" width="3" height="3" fill="#c04a5a"/><rect x="1608" y="849" width="3" height="3" fill="#5a2030"/><rect x="1608" y="852" width="3" height="3" fill="#c04a5a"/></svg>
<svg style="position:absolute;left:1630px;top:411px;" width="16" height="16" viewBox="0 0 16 16"><path d="M5 1 L9 9 A4 4 0 0 1 1 9 Z" fill="#e0e0e0"/><circle cx="12" cy="3" r="2" fill="#e0e0e0"/><circle cx="11" cy="11" r="3.2" fill="#2e2e2e" stroke="#e0e0e0" stroke-width="1.3"/></svg>
<div class="t" style="left:1650px;top:414.35px;font-size:11.4px;color:#e6e6e6;">Scene</div>
<svg style="position:absolute;left:1896px;top:411px;" width="14" height="14" viewBox="0 0 14 14"><g transform="rotate(45 7 7)"><path d="M5 1 H9 V6.5 L10.5 8 H3.5 L5 6.5Z" fill="none" stroke="#a0a0a0" stroke-width="1.1"/><path d="M7 8 V14" stroke="#a0a0a0" stroke-width="1.1"/></g></svg>
<div style="position:absolute;left:1625px;top:440px;width:288px;height:215px;background:#353535;border-radius:5px;"></div>
<svg style="position:absolute;left:0px;top:0px;" width="1920" height="1080" viewBox="0 0 1920 1080"><path d="M1633 449 l4.5 4.5 l4.5 -4.5" fill="none" stroke="#cfcfcf" stroke-width="1.1"/><rect x="1895" y="449" width="1.5" height="1.5" fill="#6a6a6a"/><rect x="1895" y="452" width="1.5" height="1.5" fill="#6a6a6a"/><rect x="1898" y="449" width="1.5" height="1.5" fill="#6a6a6a"/><rect x="1898" y="452" width="1.5" height="1.5" fill="#6a6a6a"/><rect x="1901" y="449" width="1.5" height="1.5" fill="#6a6a6a"/><rect x="1901" y="452" width="1.5" height="1.5" fill="#6a6a6a"/><rect x="1904" y="449" width="1.5" height="1.5" fill="#6a6a6a"/><rect x="1904" y="452" width="1.5" height="1.5" fill="#6a6a6a"/><circle cx="1869" cy="447" r="1.6" fill="#ddd"/><circle cx="1869" cy="452.5" r="1.6" fill="#ddd"/><circle cx="1869" cy="458" r="1.6" fill="#ddd"/><path d="M1873 447 H1883 M1873 452.5 H1883 M1873 458 H1883" stroke="#ddd" stroke-width="1.1"/></svg>
<div class="t" style="left:1646px;top:447.35px;font-size:11.4px;color:#e6e6e6;">Format</div>
<div style="position:absolute;left:1746px;top:473px;width:157px;height:38px;background:#545454;border-radius:4px;"></div>
<div style="position:absolute;left:1746px;top:491px;width:157px;height:1px;background:#484848;border-radius:0px;"></div>
<div style="position:absolute;left:1746px;top:511px;width:157px;height:19px;background:#4772b3;border-radius:4px;border-top-left-radius:0;border-top-right-radius:0"></div>
<div style="position:absolute;left:1746px;top:473px;width:157px;height:19px;background:#545454;border-radius:4px;border-bottom-left-radius:0;border-bottom-right-radius:0"></div>
<div class="t" style="left:1587.00px;top:477.35px;width:150px;text-align:right;font-size:11.4px;color:#d0d0d0;">Resolution X</div>
<div class="t" style="left:1749.00px;top:477.35px;width:150px;text-align:center;font-size:11.4px;color:#e6e6e6;">4000 px</div>
<div class="t" style="left:1587.00px;top:496.35px;width:150px;text-align:right;font-size:11.4px;color:#d0d0d0;">Y</div>
<div class="t" style="left:1749.00px;top:496.35px;width:150px;text-align:center;font-size:11.4px;color:#e6e6e6;">4000 px</div>
<div class="t" style="left:1587.00px;top:516.35px;width:150px;text-align:right;font-size:11.4px;color:#d0d0d0;">%</div>
<div class="t" style="left:1749.00px;top:516.35px;width:150px;text-align:center;font-size:11.4px;color:#ffffff;">100%</div>
<div style="position:absolute;left:1746px;top:538px;width:157px;height:38px;background:#545454;border-radius:4px;"></div>
<div style="position:absolute;left:1746px;top:557px;width:157px;height:1px;background:#484848;border-radius:0px;"></div>
<div class="t" style="left:1587.00px;top:542.35px;width:150px;text-align:right;font-size:11.4px;color:#d0d0d0;">Aspect X</div>
<div class="t" style="left:1749.00px;top:542.35px;width:150px;text-align:center;font-size:11.4px;color:#e6e6e6;">1.000</div>
<div class="t" style="left:1587.00px;top:561.35px;width:150px;text-align:right;font-size:11.4px;color:#d0d0d0;">Y</div>
<div class="t" style="left:1749.00px;top:561.35px;width:150px;text-align:center;font-size:11.4px;color:#e6e6e6;">1.000</div>
<svg style="position:absolute;left:0px;top:0px;" width="1920" height="1080" viewBox="0 0 1920 1080"><rect x="1746" y="586" width="12" height="12" rx="2.5" fill="#454545"/><rect x="1746" y="606" width="12" height="12" rx="2.5" fill="#3a3a3a"/></svg>
<div class="t" style="left:1762px;top:587.35px;font-size:11.4px;color:#d8d8d8;">Render Region</div>
<div class="t" style="left:1762px;top:607.35px;font-size:11.4px;color:#7a7a7a;">Crop to Render Region</div>
<div class="t" style="left:1587.00px;top:632.35px;width:150px;text-align:right;font-size:11.4px;color:#d0d0d0;">Frame Rate</div>
<div style="position:absolute;left:1746px;top:628px;width:157px;height:18px;background:#1f1f1f;border-radius:4px;"></div>
<div class="t" style="left:1753px;top:632.35px;font-size:11.4px;color:#e6e6e6;">30 fps</div>
<svg style="position:absolute;left:1890px;top:634px;" width="10" height="6" viewBox="0 0 10 6"><path d="M0.5 0.5 l4 4 l4 -4" fill="none" stroke="#ddd" stroke-width="1.1"/></svg>
<div style="position:absolute;left:1625px;top:658px;width:288px;height:125px;background:#353535;border-radius:5px;"></div>
<svg style="position:absolute;left:0px;top:0px;" width="1920" height="1080" viewBox="0 0 1920 1080"><path d="M1633 667 l4.5 4.5 l4.5 -4.5" fill="none" stroke="#cfcfcf" stroke-width="1.1"/><rect x="1895" y="667" width="1.5" height="1.5" fill="#6a6a6a"/><rect x="1895" y="670" width="1.5" height="1.5" fill="#6a6a6a"/><rect x="1898" y="667" width="1.5" height="1.5" fill="#6a6a6a"/><rect x="1898" y="670" width="1.5" height="1.5" fill="#6a6a6a"/><rect x="1901" y="667" width="1.5" height="1.5" fill="#6a6a6a"/><rect x="1901" y="670" width="1.5" height="1.5" fill="#6a6a6a"/><rect x="1904" y="667" width="1.5" height="1.5" fill="#6a6a6a"/><rect x="1904" y="670" width="1.5" height="1.5" fill="#6a6a6a"/><path d="M1649 767 l4.5 4.5 l-4.5 4.5" fill="none" stroke="#cfcfcf" stroke-width="1.1"/></svg>
<div class="t" style="left:1646px;top:666.35px;font-size:11.4px;color:#e6e6e6;">Frame Range</div>
<div style="position:absolute;left:1746px;top:691px;width:157px;height:58px;background:#545454;border-radius:4px;"></div>
<div style="position:absolute;left:1746px;top:709px;width:157px;height:1px;background:#484848;border-radius:0px;"></div>
<div style="position:absolute;left:1746px;top:729px;width:157px;height:1px;background:#484848;border-radius:0px;"></div>
<div class="t" style="left:1587.00px;top:695.35px;width:150px;text-align:right;font-size:11.4px;color:#d0d0d0;">Frame Start</div>
<div class="t" style="left:1749.00px;top:695.35px;width:150px;text-align:center;font-size:11.4px;color:#e6e6e6;">1</div>
<div class="t" style="left:1587.00px;top:715.35px;width:150px;text-align:right;font-size:11.4px;color:#d0d0d0;">End</div>
<div class="t" style="left:1749.00px;top:715.35px;width:150px;text-align:center;font-size:11.4px;color:#e6e6e6;">190</div>
<div class="t" style="left:1587.00px;top:734.35px;width:150px;text-align:right;font-size:11.4px;color:#d0d0d0;">Step</div>
<div class="t" style="left:1749.00px;top:734.35px;width:150px;text-align:center;font-size:11.4px;color:#e6e6e6;">1</div>
<div class="t" style="left:1660px;top:766.35px;font-size:11.4px;color:#e0e0e0;">Time Stretching</div>
<div style="position:absolute;left:1625px;top:786px;width:288px;height:24px;background:#353535;border-radius:5px;"></div>
<svg style="position:absolute;left:0px;top:0px;" width="1920" height="1080" viewBox="0 0 1920 1080"><path d="M1637 793 l4.5 4.5 l-4.5 4.5" fill="none" stroke="#cfcfcf" stroke-width="1.1"/><rect x="1645" y="792" width="12" height="12" rx="2.5" fill="#454545"/><rect x="1895" y="796" width="1.5" height="1.5" fill="#6a6a6a"/><rect x="1895" y="799" width="1.5" height="1.5" fill="#6a6a6a"/><rect x="1898" y="796" width="1.5" height="1.5" fill="#6a6a6a"/><rect x="1898" y="799" width="1.5" height="1.5" fill="#6a6a6a"/><rect x="1901" y="796" width="1.5" height="1.5" fill="#6a6a6a"/><rect x="1901" y="799" width="1.5" height="1.5" fill="#6a6a6a"/><rect x="1904" y="796" width="1.5" height="1.5" fill="#6a6a6a"/><rect x="1904" y="799" width="1.5" height="1.5" fill="#6a6a6a"/></svg>
<div class="t" style="left:1660px;top:793.35px;font-size:11.4px;color:#e0e0e0;">Stereoscopy</div>
<div style="position:absolute;left:1625px;top:813px;width:288px;height:200px;background:#353535;border-radius:5px;"></div>
<svg style="position:absolute;left:0px;top:0px;" width="1920" height="1080" viewBox="0 0 1920 1080"><path d="M1633 822 l4.5 4.5 l4.5 -4.5" fill="none" stroke="#cfcfcf" stroke-width="1.1"/><rect x="1895" y="823" width="1.5" height="1.5" fill="#6a6a6a"/><rect x="1895" y="826" width="1.5" height="1.5" fill="#6a6a6a"/><rect x="1898" y="823" width="1.5" height="1.5" fill="#6a6a6a"/><rect x="1898" y="826" width="1.5" height="1.5" fill="#6a6a6a"/><rect x="1901" y="823" width="1.5" height="1.5" fill="#6a6a6a"/><rect x="1901" y="826" width="1.5" height="1.5" fill="#6a6a6a"/><rect x="1904" y="823" width="1.5" height="1.5" fill="#6a6a6a"/><rect x="1904" y="826" width="1.5" height="1.5" fill="#6a6a6a"/></svg>
<div class="t" style="left:1646px;top:820.35px;font-size:11.4px;color:#e6e6e6;">Output</div>
<div style="position:absolute;left:1634px;top:846px;width:249px;height:18px;background:#1d1d1d;border-radius:4px;border-top-right-radius:0;border-bottom-right-radius:0"></div>
<div class="t" style="left:1640px;top:850.52px;font-size:11.2px;color:#e6e6e6;">H:\010 - Art - Illustratio...\AnimatedMinervaIntro</div>
<div style="position:absolute;left:1883px;top:846px;width:20px;height:18px;background:#545454;border-radius:4px;border-top-left-radius:0;border-bottom-left-radius:0"></div>
<svg style="position:absolute;left:1886px;top:849px;" width="14" height="12" viewBox="0 0 14 12"><path d="M1 2 H5.5 L7 3.5 H13 V11 H1Z" fill="#e6e6e6"/><path d="M1 5 H13" stroke="#545454" stroke-width="1"/></svg>
<div class="t" style="left:1587.00px;top:875.35px;width:150px;text-align:right;font-size:11.4px;color:#d0d0d0;">Saving</div>
<svg style="position:absolute;left:0px;top:0px;" width="1920" height="1080" viewBox="0 0 1920 1080"><rect x="1746" y="874" width="12" height="12" rx="2.5" fill="#4772b3"/><path d="M1748.5 880 L1751 882.8 L1755.8 877" fill="none" stroke="#fff" stroke-width="1.6"/><rect x="1746" y="896" width="12" height="12" rx="2.5" fill="#454545"/></svg>
<div class="t" style="left:1762px;top:875.35px;font-size:11.4px;color:#e6e6e6;">File Extensions</div>
<div class="t" style="left:1762px;top:897.35px;font-size:11.4px;color:#d8d8d8;">Cache Result</div>
<div class="t" style="left:1587.00px;top:922.35px;width:150px;text-align:right;font-size:11.4px;color:#d0d0d0;">File Format</div>
<div style="position:absolute;left:1746px;top:919px;width:157px;height:17px;background:#1f1f1f;border-radius:4px;"></div>
<svg style="position:absolute;left:1750px;top:920px;" width="15" height="15" viewBox="0 0 15 15"><rect x="1" y="1" width="13" height="13" fill="#e6e6e6"/><rect x="1.8" y="2" width="1.5" height="1.5" fill="#1f1f1f"/><rect x="11.7" y="2" width="1.5" height="1.5" fill="#1f1f1f"/><rect x="1.8" y="5" width="1.5" height="1.5" fill="#1f1f1f"/><rect x="11.7" y="5" width="1.5" height="1.5" fill="#1f1f1f"/><rect x="1.8" y="8" width="1.5" height="1.5" fill="#1f1f1f"/><rect x="11.7" y="8" width="1.5" height="1.5" fill="#1f1f1f"/><rect x="1.8" y="11" width="1.5" height="1.5" fill="#1f1f1f"/><rect x="11.7" y="11" width="1.5" height="1.5" fill="#1f1f1f"/><path d="M5.5 4 V11 L10.5 7.5Z" fill="#1f1f1f"/></svg>
<div class="t" style="left:1771px;top:923.35px;font-size:11.4px;color:#e6e6e6;">AVI JPEG</div>
<svg style="position:absolute;left:1890px;top:925px;" width="10" height="6" viewBox="0 0 10 6"><path d="M0.5 0.5 l4 4 l4 -4" fill="none" stroke="#ddd" stroke-width="1.1"/></svg>
<div class="t" style="left:1587.00px;top:944.35px;width:150px;text-align:right;font-size:11.4px;color:#d0d0d0;">Color</div>
<div style="position:absolute;left:1746px;top:940px;width:76px;height:18px;background:#545454;border-radius:4px;border-top-right-radius:0;border-bottom-right-radius:0"></div>
<div style="position:absolute;left:1822px;top:940px;width:81px;height:18px;background:#4772b3;border-radius:4px;border-top-left-radius:0;border-bottom-left-radius:0"></div>
<div class="t" style="left:1754.00px;top:944.35px;width:60px;text-align:center;font-size:11.4px;color:#e6e6e6;">BW</div>
<div class="t" style="left:1832.50px;top:944.35px;width:60px;text-align:center;font-size:11.4px;color:#ffffff;">RGB</div>
<div class="t" style="left:1587.00px;top:966.35px;width:150px;text-align:right;font-size:11.4px;color:#d0d0d0;">Quality</div>
<div style="position:absolute;left:1746px;top:962px;width:157px;height:18px;background:#4772b3;border-radius:4px;"></div>
<div class="t" style="left:1774.00px;top:966.35px;width:100px;text-align:center;font-size:11.4px;color:#ffffff;">100%</div>
<svg style="position:absolute;left:0px;top:0px;" width="1920" height="1080" viewBox="0 0 1920 1080"><path d="M1651 997 l4.5 4.5 l-4.5 4.5" fill="none" stroke="#cfcfcf" stroke-width="1.1"/></svg>
<div class="t" style="left:1660px;top:997.35px;font-size:11.4px;color:#e0e0e0;">Color Management</div>
<div style="position:absolute;left:1625px;top:1017px;width:288px;height:24px;background:#353535;border-radius:5px;"></div>
<svg style="position:absolute;left:0px;top:0px;" width="1920" height="1080" viewBox="0 0 1920 1080"><path d="M1637 1024 l4.5 4.5 l-4.5 4.5" fill="none" stroke="#cfcfcf" stroke-width="1.1"/><rect x="1895" y="1026" width="1.5" height="1.5" fill="#6a6a6a"/><rect x="1895" y="1029" width="1.5" height="1.5" fill="#6a6a6a"/><rect x="1898" y="1026" width="1.5" height="1.5" fill="#6a6a6a"/><rect x="1898" y="1029" width="1.5" height="1.5" fill="#6a6a6a"/><rect x="1901" y="1026" width="1.5" height="1.5" fill="#6a6a6a"/><rect x="1901" y="1029" width="1.5" height="1.5" fill="#6a6a6a"/><rect x="1904" y="1026" width="1.5" height="1.5" fill="#6a6a6a"/><rect x="1904" y="1029" width="1.5" height="1.5" fill="#6a6a6a"/></svg>
<div class="t" style="left:1646px;top:1024.35px;font-size:11.4px;color:#e0e0e0;">Metadata</div>
<div style="position:absolute;left:1625px;top:1044px;width:288px;height:15px;background:#353535;border-radius:0px;border-top-left-radius:5px;border-top-right-radius:5px"></div>
<svg style="position:absolute;left:0px;top:0px;" width="1920" height="1080" viewBox="0 0 1920 1080"><path d="M1637 1051 l4.5 4.5 l-4.5 4.5" fill="none" stroke="#cfcfcf" stroke-width="1.1"/><rect x="1895" y="1053" width="1.5" height="1.5" fill="#6a6a6a"/><rect x="1895" y="1056" width="1.5" height="1.5" fill="#6a6a6a"/><rect x="1898" y="1053" width="1.5" height="1.5" fill="#6a6a6a"/><rect x="1898" y="1056" width="1.5" height="1.5" fill="#6a6a6a"/><rect x="1901" y="1053" width="1.5" height="1.5" fill="#6a6a6a"/><rect x="1901" y="1056" width="1.5" height="1.5" fill="#6a6a6a"/><rect x="1904" y="1053" width="1.5" height="1.5" fill="#6a6a6a"/><rect x="1904" y="1056" width="1.5" height="1.5" fill="#6a6a6a"/></svg>
<div class="t" style="left:1646px;top:1051.35px;font-size:11.4px;color:#e0e0e0;">Post Processing</div>
<div style="position:absolute;left:1914px;top:405px;width:2px;height:650px;background:#2a2a2a;border-radius:1px;"></div>
<div style="position:absolute;left:1px;top:709px;width:1584px;height:73px;background:#1f1f1f;border-radius:6px;"></div>
<div style="position:absolute;left:1px;top:709px;width:1584px;height:25px;background:#2f2e31;border-radius:6px;border-bottom-left-radius:0;border-bottom-right-radius:0"></div>
<div style="position:absolute;left:10px;top:713px;width:30px;height:18px;background:#262626;border-radius:4px;"></div>
<svg style="position:absolute;left:13px;top:714px;" width="26" height="16" viewBox="0 0 26 16"><circle cx="7" cy="8" r="6.5" fill="#e6e6e6"/><path d="M9 4.5 L5.5 8 L9 11.5" fill="none" stroke="#2c2c2c" stroke-width="2"/><path d="M17 7 l3.5 3.5 l3.5 -3.5" fill="none" stroke="#d6d6d6" stroke-width="1.2"/></svg>
<div style="position:absolute;left:46px;top:713px;width:68px;height:18px;background:#262626;border-radius:4px;border-top-right-radius:0;border-bottom-right-radius:0"></div>
<div style="position:absolute;left:114px;top:713px;width:59px;height:18px;background:#262626;border-radius:4px;border-top-left-radius:0;border-bottom-left-radius:0"></div>
<div style="position:absolute;left:114px;top:713px;width:1px;height:18px;background:#333;border-radius:0px;"></div>
<div class="t" style="left:53px;top:718.35px;font-size:11.4px;color:#e0e0e0;">Playback</div>
<svg style="position:absolute;left:105px;top:720px;" width="8" height="5" viewBox="0 0 8 5"><path d="M0.5 0.5 l3.5 3.5 l3.5 -3.5" fill="none" stroke="#d0d0d0" stroke-width="1.2"/></svg>
<div class="t" style="left:122px;top:718.35px;font-size:11.4px;color:#e0e0e0;">Keying</div>
<svg style="position:absolute;left:163px;top:720px;" width="8" height="5" viewBox="0 0 8 5"><path d="M0.5 0.5 l3.5 3.5 l3.5 -3.5" fill="none" stroke="#d0d0d0" stroke-width="1.2"/></svg>
<div class="t" style="left:183px;top:718.35px;font-size:11.4px;color:#e0e0e0;">View</div>
<div class="t" style="left:223px;top:718.35px;font-size:11.4px;color:#e0e0e0;">Marker</div>
<div style="position:absolute;left:701px;top:713px;width:18px;height:18px;background:#4a4a4a;border-radius:4px;border-top-right-radius:0;border-bottom-right-radius:0"></div>
<div style="position:absolute;left:719px;top:713px;width:18px;height:18px;background:#2a2a2a;border-radius:4px;border-top-left-radius:0;border-bottom-left-radius:0"></div>
<svg style="position:absolute;left:704px;top:714px;" width="30" height="16" viewBox="0 0 30 16"><circle cx="6" cy="8" r="3.5" fill="#eee"/><path d="M19 7 l3 3 l3 -3" fill="none" stroke="#555" stroke-width="1.1"/></svg>
<div style="position:absolute;left:746px;top:713px;width:19px;height:18px;background:#3a3a3a;border-radius:4px;border-top-right-radius:0;border-bottom-right-radius:0"></div>
<div style="position:absolute;left:765px;top:713px;width:20px;height:18px;background:#3a3a3a;border-radius:4px;border-radius:0"></div>
<div style="position:absolute;left:785px;top:713px;width:40px;height:18px;background:#262626;border-radius:4px;border-radius:0"></div>
<div style="position:absolute;left:825px;top:713px;width:20px;height:18px;background:#3a3a3a;border-radius:4px;border-radius:0"></div>
<div style="position:absolute;left:845px;top:713px;width:19px;height:18px;background:#3a3a3a;border-radius:4px;border-top-left-radius:0;border-bottom-left-radius:0"></div>
<svg style="position:absolute;left:0px;top:0px;" width="1920" height="1080" viewBox="0 0 1920 1080"><path d="M750.5 716 V728" stroke="#eee" stroke-width="1.6"/><path d="M760.5 716 V728 L752 722Z" fill="#eee"/><path d="M766 722 l4 -5 l4 5 l-4 5Z" fill="#eee"/><path d="M782 716.5 V727.5 L775 722Z" fill="#eee"/><path d="M801.5 716 V728 M807.5 716 V728" stroke="#eee" stroke-width="1.6"/><path d="M827 716.5 V727.5 L834 722Z" fill="#eee"/><path d="M835 722 l4 -5 l4 5 l-4 5Z" fill="#eee"/><path d="M849 716 V728 L857.5 722Z" fill="#eee"/><path d="M859.5 716 V728" stroke="#eee" stroke-width="1.6"/></svg>
<div style="position:absolute;left:1308px;top:713px;width:73px;height:18px;background:#4a4a4a;border-radius:4px;"></div>
<div class="t" style="left:1324.00px;top:717.85px;width:40px;text-align:center;font-size:11.4px;color:#e6e6e6;">71</div>
<div style="position:absolute;left:1387px;top:713px;width:20px;height:18px;background:#3d3d3d;border-radius:4px;border-top-right-radius:0;border-bottom-right-radius:0"></div>
<div style="position:absolute;left:1407px;top:713px;width:87px;height:18px;background:#4a4a4a;border-radius:4px;border-radius:0"></div>
<div style="position:absolute;left:1494px;top:713px;width:84px;height:18px;background:#4a4a4a;border-radius:4px;border-top-left-radius:0;border-bottom-left-radius:0"></div>
<div style="position:absolute;left:1494px;top:713px;width:1px;height:18px;background:#3a3a3a;border-radius:0px;"></div>
<svg style="position:absolute;left:1389px;top:714px;" width="16" height="16" viewBox="0 0 16 16"><circle cx="8" cy="9" r="5.8" fill="none" stroke="#ddd" stroke-width="1.3"/><path d="M8 9 V5.5 M8 9 H10.5 M6 1.8 H10 M8 1.8 V3.2 M12.5 4 l1.5 -1.5" stroke="#ddd" stroke-width="1.2"/></svg>
<div class="t" style="left:1422px;top:717.85px;font-size:11.4px;color:#e6e6e6;">Start</div>
<div class="t" style="left:1474px;top:717.85px;font-size:11.4px;color:#e6e6e6;">1</div>
<div class="t" style="left:1510px;top:717.85px;font-size:11.4px;color:#e6e6e6;">End</div>
<div class="t" style="left:1545px;top:717.85px;font-size:11.4px;color:#e6e6e6;">190</div>
<div class="t" style="left:33.30px;top:741.85px;width:40px;text-align:center;font-size:11.4px;color:#cfcfcf;">0</div>
<div class="t" style="left:92.20px;top:741.85px;width:40px;text-align:center;font-size:11.4px;color:#cfcfcf;">10</div>
<div class="t" style="left:151.10px;top:741.85px;width:40px;text-align:center;font-size:11.4px;color:#cfcfcf;">20</div>
<div class="t" style="left:210.00px;top:741.85px;width:40px;text-align:center;font-size:11.4px;color:#cfcfcf;">30</div>
<div class="t" style="left:268.90px;top:741.85px;width:40px;text-align:center;font-size:11.4px;color:#cfcfcf;">40</div>
<div class="t" style="left:327.80px;top:741.85px;width:40px;text-align:center;font-size:11.4px;color:#cfcfcf;">50</div>
<div class="t" style="left:386.70px;top:741.85px;width:40px;text-align:center;font-size:11.4px;color:#cfcfcf;">60</div>
<div class="t" style="left:504.50px;top:741.85px;width:40px;text-align:center;font-size:11.4px;color:#cfcfcf;">80</div>
<div class="t" style="left:563.40px;top:741.85px;width:40px;text-align:center;font-size:11.4px;color:#cfcfcf;">90</div>
<div class="t" style="left:622.30px;top:741.85px;width:40px;text-align:center;font-size:11.4px;color:#cfcfcf;">100</div>
<div class="t" style="left:681.20px;top:741.85px;width:40px;text-align:center;font-size:11.4px;color:#cfcfcf;">110</div>
<div class="t" style="left:740.10px;top:741.85px;width:40px;text-align:center;font-size:11.4px;color:#cfcfcf;">120</div>
<div class="t" style="left:799.00px;top:741.85px;width:40px;text-align:center;font-size:11.4px;color:#cfcfcf;">130</div>
<div class="t" style="left:857.90px;top:741.85px;width:40px;text-align:center;font-size:11.4px;color:#cfcfcf;">140</div>
<div class="t" style="left:916.80px;top:741.85px;width:40px;text-align:center;font-size:11.4px;color:#cfcfcf;">150</div>
<div class="t" style="left:975.70px;top:741.85px;width:40px;text-align:center;font-size:11.4px;color:#cfcfcf;">160</div>
<div class="t" style="left:1034.60px;top:741.85px;width:40px;text-align:center;font-size:11.4px;color:#cfcfcf;">170</div>
<div class="t" style="left:1093.50px;top:741.85px;width:40px;text-align:center;font-size:11.4px;color:#cfcfcf;">180</div>
<div class="t" style="left:1152.40px;top:741.85px;width:40px;text-align:center;font-size:11.4px;color:#cfcfcf;">190</div>
<div class="t" style="left:1211.30px;top:741.85px;width:40px;text-align:center;font-size:11.4px;color:#cfcfcf;">200</div>
<div class="t" style="left:1270.20px;top:741.85px;width:40px;text-align:center;font-size:11.4px;color:#cfcfcf;">210</div>
<div class="t" style="left:1329.10px;top:741.85px;width:40px;text-align:center;font-size:11.4px;color:#cfcfcf;">220</div>
<div class="t" style="left:1388.00px;top:741.85px;width:40px;text-align:center;font-size:11.4px;color:#cfcfcf;">230</div>
<div class="t" style="left:1446.90px;top:741.85px;width:40px;text-align:center;font-size:11.4px;color:#cfcfcf;">240</div>
<div class="t" style="left:1505.80px;top:741.85px;width:40px;text-align:center;font-size:11.4px;color:#cfcfcf;">250</div>
<div style="position:absolute;left:1px;top:757px;width:1584px;height:13px;background:#1f1f1f;border-radius:0px;"></div>
<div style="position:absolute;left:59.19px;top:757px;width:1113.2099999999998px;height:13px;background:#2c2c2c;border-radius:0px;"></div>
<svg style="position:absolute;left:0px;top:0px;" width="1920" height="1080" viewBox="0 0 1920 1080"><rect x="53.3" y="757" width="1" height="13" fill="#1c1c1c"/><rect x="82.8" y="757" width="1" height="13" fill="#252525"/><rect x="112.2" y="757" width="1" height="13" fill="#1c1c1c"/><rect x="141.6" y="757" width="1" height="13" fill="#252525"/><rect x="171.1" y="757" width="1" height="13" fill="#1c1c1c"/><rect x="200.6" y="757" width="1" height="13" fill="#252525"/><rect x="230.0" y="757" width="1" height="13" fill="#1c1c1c"/><rect x="259.4" y="757" width="1" height="13" fill="#252525"/><rect x="288.9" y="757" width="1" height="13" fill="#1c1c1c"/><rect x="318.4" y="757" width="1" height="13" fill="#252525"/><rect x="347.8" y="757" width="1" height="13" fill="#1c1c1c"/><rect x="377.2" y="757" width="1" height="13" fill="#252525"/><rect x="406.7" y="757" width="1" height="13" fill="#1c1c1c"/><rect x="436.1" y="757" width="1" height="13" fill="#252525"/><rect x="465.6" y="757" width="1" height="13" fill="#1c1c1c"/><rect x="495.1" y="757" width="1" height="13" fill="#252525"/><rect x="524.5" y="757" width="1" height="13" fill="#1c1c1c"/><rect x="553.9" y="757" width="1" height="13" fill="#252525"/><rect x="583.4" y="757" width="1" height="13" fill="#1c1c1c"/><rect x="612.8" y="757" width="1" height="13" fill="#252525"/><rect x="642.3" y="757" width="1" height="13" fill="#1c1c1c"/><rect x="671.7" y="757" width="1" height="13" fill="#252525"/><rect x="701.2" y="757" width="1" height="13" fill="#1c1c1c"/><rect x="730.6" y="757" width="1" height="13" fill="#252525"/><rect x="760.1" y="757" width="1" height="13" fill="#1c1c1c"/><rect x="789.5" y="757" width="1" height="13" fill="#252525"/><rect x="819.0" y="757" width="1" height="13" fill="#1c1c1c"/><rect x="848.4" y="757" width="1" height="13" fill="#252525"/><rect x="877.9" y="757" width="1" height="13" fill="#1c1c1c"/><rect x="907.3" y="757" width="1" height="13" fill="#252525"/><rect x="936.8" y="757" width="1" height="13" fill="#1c1c1c"/><rect x="966.2" y="757" width="1" height="13" fill="#252525"/><rect x="995.7" y="757" width="1" height="13" fill="#1c1c1c"/><rect x="1025.1" y="757" width="1" height="13" fill="#252525"/><rect x="1054.6" y="757" width="1" height="13" fill="#1c1c1c"/><rect x="1084.0" y="757" width="1" height="13" fill="#252525"/><rect x="1113.5" y="757" width="1" height="13" fill="#1c1c1c"/><rect x="1142.9" y="757" width="1" height="13" fill="#252525"/><rect x="1172.4" y="757" width="1" height="13" fill="#1c1c1c"/><rect x="59.2" y="757" width="1" height="13" fill="#111"/></svg>
<div style="position:absolute;left:1px;top:770px;width:1584px;height:11px;background:#222222;border-radius:0px;border-bottom-left-radius:6px;border-bottom-right-radius:6px"></div>
<div style="position:absolute;left:10px;top:771px;width:1566px;height:8px;background:#4a4a4a;border-radius:4px;"></div>
<svg style="position:absolute;left:0px;top:0px;" width="1920" height="1080" viewBox="0 0 1920 1080"><circle cx="14" cy="775" r="3" fill="#2e2e2e"/><circle cx="1572" cy="775" r="3" fill="#2e2e2e"/></svg>
<div style="position:absolute;left:470.8px;top:754px;width:1.2px;height:27px;background:#5a7ec0;border-radius:0px;"></div>
<div style="position:absolute;left:460px;top:738px;width:23px;height:17px;background:#4772b3;border-radius:4px;"></div>
<div class="t" style="left:456.50px;top:741.85px;width:30px;text-align:center;font-size:11.4px;color:#ffffff;">71</div>
<svg style="position:absolute;left:3px;top:745px;" width="6" height="10" viewBox="0 0 6 10"><path d="M1 1 L5 5 L1 9" fill="none" stroke="#888" stroke-width="1.1"/></svg>
<svg style="position:absolute;left:1578px;top:750px;" width="6" height="10" viewBox="0 0 6 10"><path d="M5 0.5 L1 5 L5 9.5" fill="none" stroke="#777" stroke-width="1.1"/></svg>
<div style="position:absolute;left:1px;top:784px;width:1584px;height:275px;background:#1e1d20;border-radius:6px;"></div>
<div style="position:absolute;left:1px;top:784px;width:1584px;height:24px;background:#201f22;border-radius:6px;border-bottom-left-radius:0;border-bottom-right-radius:0"></div>
<div style="position:absolute;left:9px;top:787px;width:31px;height:18px;background:#262528;border-radius:4px;border:1px solid #363538"></div>
<svg style="position:absolute;left:12px;top:788px;" width="28" height="16" viewBox="0 0 28 16"><circle cx="7.5" cy="8" r="6.5" fill="none" stroke="#e6e6e6" stroke-width="1.3"/><path d="M4 6 A4 4 0 0 1 8 3" fill="none" stroke="#e6e6e6" stroke-width="1.2"/><path d="M19 7 l3.5 3.5 l3.5 -3.5" fill="none" stroke="#d6d6d6" stroke-width="1.2"/></svg>
<div style="position:absolute;left:45px;top:787px;width:88px;height:18px;background:#262528;border-radius:4px;border:1px solid #363538"></div>
<svg style="position:absolute;left:49px;top:788px;" width="16" height="16" viewBox="0 0 16 16"><path d="M1 4 V1 H4 M12 1 H15 V4 M15 12 V15 H12 M4 15 H1 V12" fill="none" stroke="#d6d6d6" stroke-width="1.2"/><rect x="4" y="4" width="8" height="8" fill="#d6d6d6"/></svg>
<div class="t" style="left:71px;top:791.85px;font-size:11.4px;color:#e6e6e6;">Object</div>
<svg style="position:absolute;left:123px;top:794px;" width="8" height="5" viewBox="0 0 8 5"><path d="M0.5 0.5 l3.5 3.5 l3.5 -3.5" fill="none" stroke="#d0d0d0" stroke-width="1.2"/></svg>
<div class="t" style="left:146px;top:791.85px;font-size:11.4px;color:#e6e6e6;">View</div>
<div class="t" style="left:186px;top:791.85px;font-size:11.4px;color:#e6e6e6;">Select</div>
<div class="t" style="left:232px;top:791.85px;font-size:11.4px;color:#e6e6e6;">Add</div>
<div class="t" style="left:266px;top:791.85px;font-size:11.4px;color:#e6e6e6;">Node</div>
<svg style="position:absolute;left:305px;top:790px;" width="13" height="13" viewBox="0 0 13 13"><rect x="0.5" y="0.5" width="12" height="12" rx="2.5" fill="#4772b3"/><path d="M3 6.5 L5.5 9.3 L10 3.5" fill="none" stroke="#fff" stroke-width="1.6"/></svg>
<div class="t" style="left:322px;top:791.85px;font-size:11.4px;color:#e6e6e6;">Use Nodes</div>
<div style="position:absolute;left:621px;top:787px;width:79px;height:18px;background:#262528;border-radius:4px;border:1px solid #363538"></div>
<div class="t" style="left:629px;top:791.85px;font-size:11.4px;color:#e6e6e6;">Slot 1</div>
<svg style="position:absolute;left:686px;top:794px;" width="8" height="5" viewBox="0 0 8 5"><path d="M0.5 0.5 l3.5 3.5 l3.5 -3.5" fill="none" stroke="#d0d0d0" stroke-width="1.2"/></svg>
<div style="position:absolute;left:706px;top:787px;width:31px;height:18px;background:#2a2a2a;border-radius:4px;border-top-right-radius:0;border-bottom-right-radius:0"></div>
<div style="position:absolute;left:737px;top:787px;width:120px;height:18px;background:#1d1d1d;border-radius:4px;border-radius:0"></div>
<div style="position:absolute;left:857px;top:787px;width:20px;height:18px;background:#3d3d3d;border-radius:4px;border-radius:0"></div>
<div style="position:absolute;left:877px;top:787px;width:20px;height:18px;background:#3d3d3d;border-radius:4px;border-radius:0"></div>
<div style="position:absolute;left:897px;top:787px;width:20px;height:18px;background:#3d3d3d;border-radius:4px;border-top-left-radius:0;border-bottom-left-radius:0"></div>
<svg style="position:absolute;left:0px;top:0px;" width="1920" height="1080" viewBox="0 0 1920 1080"><circle cx="718" cy="796" r="6.5" fill="#e6e6e6"/><path d="M718 789.5 A6.5 6.5 0 0 0 711.5 796 H718Z M718 796 L723 800.5 A6.5 6.5 0 0 1 718 802.5Z" fill="#2a2a2a"/><path d="M728 794 l3 3 l3 -3" fill="none" stroke="#ddd" stroke-width="1.1"/><path d="M867 789.5 L873 791.5 V796 Q873 801 867 803 Q861 801 861 796 V791.5Z" fill="none" stroke="#aaa" stroke-width="1.2"/><path d="M884 791.5 H889 L892 794.5 V802 H884 Z M881.5 793 V799.5 M881.5 800 H883" fill="none" stroke="#ddd" stroke-width="1.2"/><path d="M903 792 l8 8 M911 792 l-8 8" stroke="#ddd" stroke-width="1.2"/><g transform="translate(927,789) rotate(45 7 7)"><path d="M5 1 H9 V6.5 L10.5 8 H3.5 L5 6.5Z" fill="none" stroke="#a0a0a0" stroke-width="1.1"/><path d="M7 8 V14" stroke="#a0a0a0" stroke-width="1.1"/></g></svg>
<div class="t" style="left:745px;top:791.85px;font-size:11.4px;color:#e6e6e6;">Orange_Gradient</div>
<div style="position:absolute;left:1457px;top:787px;width:18px;height:18px;background:#2e2e2e;border-radius:4px;"></div>
<svg style="position:absolute;left:1459px;top:788px;" width="16" height="16" viewBox="0 0 16 16"><path d="M4 5 L7 2 L10 5 M7 2 V13 H13" fill="none" stroke="#555" stroke-width="1.2"/></svg>
<div style="position:absolute;left:1481px;top:787px;width:19px;height:18px;background:#4a4a4a;border-radius:4px;border-top-right-radius:0;border-bottom-right-radius:0"></div>
<div style="position:absolute;left:1500px;top:787px;width:32px;height:18px;background:#262626;border-radius:4px;border-top-left-radius:0;border-bottom-left-radius:0"></div>
<svg style="position:absolute;left:1483px;top:788px;" width="16" height="16" viewBox="0 0 16 16"><g transform="rotate(45 8 8)"><path d="M4 14 V8 A4 4 0 0 1 12 8 V14" fill="none" stroke="#a0a0a0" stroke-width="2.2"/></g></svg>
<svg style="position:absolute;left:1503px;top:788px;" width="28" height="16" viewBox="0 0 28 16"><rect x="2" y="1.5" width="4" height="4" fill="#ddd"/><path d="M4 7 V15 M10 3 V15 M1 9 H15 M1 13 H15" stroke="#ddd" stroke-width="1.1"/><path d="M19 7 l3 3 l3 -3" fill="none" stroke="#ddd" stroke-width="1.1"/></svg>
<div style="position:absolute;left:1538px;top:787px;width:19px;height:18px;background:#4772b3;border-radius:4px;border-top-right-radius:0;border-bottom-right-radius:0"></div>
<div style="position:absolute;left:1557px;top:787px;width:19px;height:18px;background:#262626;border-radius:4px;border-top-left-radius:0;border-bottom-left-radius:0"></div>
<svg style="position:absolute;left:1540px;top:788px;" width="16" height="16" viewBox="0 0 16 16"><circle cx="6" cy="10.5" r="4.5" fill="none" stroke="#fff" stroke-width="1.3"/><circle cx="10" cy="6" r="4.5" fill="#f2f2f2"/><circle cx="9" cy="7" r="1.5" fill="#4772b3"/></svg>
<svg style="position:absolute;left:1563px;top:794px;" width="8" height="5" viewBox="0 0 8 5"><path d="M0.5 0.5 l3.5 3.5 l3.5 -3.5" fill="none" stroke="#d0d0d0" stroke-width="1.2"/></svg>
<svg style="position:absolute;left:0px;top:0px;" width="1920" height="1080" viewBox="0 0 1920 1080"><path d="M3 825 l4 4 l-4 4" fill="none" stroke="#aaa" stroke-width="1.1"/><path d="M20 826 V823 H23 M30 823 H33 V826 M33 833 V836 H30 M23 836 H20 V833" fill="none" stroke="#ddd" stroke-width="1.2"/><rect x="23" y="826" width="7" height="7" fill="#ddd"/><path d="M134 825 l4 4 l-4 4" fill="none" stroke="#ccc" stroke-width="1.2"/><path d="M150.5 823.5 H161.5 L156 834.5Z" fill="none" stroke="#ddd" stroke-width="1.2"/><rect x="149" y="822" width="3" height="3" fill="#1e1d20" stroke="#ddd"/><rect x="160" y="822" width="3" height="3" fill="#1e1d20" stroke="#ddd"/><rect x="154.5" y="832.5" width="3" height="3" fill="#1e1d20" stroke="#ddd"/><path d="M242 825 l4 4 l-4 4" fill="none" stroke="#ccc" stroke-width="1.2"/><circle cx="264" cy="829" r="6.5" fill="#e6e6e6"/><path d="M264 822.5 A6.5 6.5 0 0 0 257.5 829 H264Z M264 829 L269 833.5 A6.5 6.5 0 0 1 264 835.5Z" fill="#1e1d20"/></svg>
<div class="t" style="left:42px;top:825.35px;font-size:11.4px;color:#e0e0e0;">Gradient Circle</div>
<div class="t" style="left:172px;top:825.35px;font-size:11.4px;color:#e0e0e0;">Circle.001</div>
<div class="t" style="left:280px;top:825.35px;font-size:11.4px;color:#e0e0e0;">Orange_Gradient</div>
<div style="position:absolute;left:0px;top:1060px;width:1920px;height:20px;background:#1e1d20;border-radius:0px;"></div>
<svg style="position:absolute;left:0px;top:0px;" width="1920" height="1080" viewBox="0 0 1920 1080"><rect x="12.5" y="1063" width="10" height="14" rx="4.5" fill="none" stroke="#bbb" stroke-width="1.1"/><rect x="223.5" y="1063" width="10" height="14" rx="4.5" fill="none" stroke="#bbb" stroke-width="1.1"/><rect x="434.5" y="1063" width="10" height="14" rx="4.5" fill="none" stroke="#bbb" stroke-width="1.1"/><path d="M13 1068 V1066.5 Q13 1063.5 17 1063.5 V1068Z" fill="#999"/><rect x="227" y="1065.5" width="3" height="4.5" rx="1.2" fill="#bbb"/><path d="M439.5 1063.5 Q444.5 1063.5 444.5 1067.5 V1068 H439.5Z" fill="#999"/></svg>
<div class="t" style="left:34px;top:1065.35px;font-size:11.4px;color:#b8b8b8;">Select</div>
<div class="t" style="left:245px;top:1065.35px;font-size:11.4px;color:#b8b8b8;">Pan View</div>
<div class="t" style="left:456px;top:1065.35px;font-size:11.4px;color:#b8b8b8;">Node Context Menu</div>
<div style="position:absolute;left:900px;top:1062px;width:98px;height:17px;background:#3b3a3d;border-radius:4px;"></div>
<svg style="position:absolute;left:903px;top:1064px;" width="14" height="14" viewBox="0 0 14 14"><circle cx="7" cy="7" r="6" fill="#ddd"/><path d="M4.5 4.5 l5 5 M9.5 4.5 l-5 5" stroke="#3b3a3d" stroke-width="1.5"/></svg>
<div class="t" style="left:928px;top:1065.35px;font-size:11.4px;color:#e6e6e6;">Anim Player</div>
<div class="t" style="left:1310.00px;top:1065.35px;width:600px;text-align:right;font-size:11.4px;color:#a8a8a8;">Graphic Elements | Gradient Circle | Verts:2,816 | Faces:11 | Tris:2,814 | Objects:1/7 | 3.3.0</div>
<svg style="position:absolute;left:0px;top:0px;" width="1920" height="1080" viewBox="0 0 1920 1080"><rect x="40.0" y="840.0" width="2" height="2" fill="#262528"/><rect x="40.0" y="880.8" width="2" height="2" fill="#262528"/><rect x="40.0" y="921.6" width="2" height="2" fill="#262528"/><rect x="40.0" y="962.4" width="2" height="2" fill="#262528"/><rect x="40.0" y="1003.2" width="2" height="2" fill="#262528"/><rect x="40.0" y="1044.0" width="2" height="2" fill="#262528"/><rect x="80.8" y="840.0" width="2" height="2" fill="#262528"/><rect x="80.8" y="880.8" width="2" height="2" fill="#262528"/><rect x="80.8" y="921.6" width="2" height="2" fill="#262528"/><rect x="80.8" y="962.4" width="2" height="2" fill="#262528"/><rect x="80.8" y="1003.2" width="2" height="2" fill="#262528"/><rect x="80.8" y="1044.0" width="2" height="2" fill="#262528"/><rect x="121.6" y="840.0" width="2" height="2" fill="#262528"/><rect x="121.6" y="880.8" width="2" height="2" fill="#262528"/><rect x="121.6" y="921.6" width="2" height="2" fill="#262528"/><rect x="121.6" y="962.4" width="2" height="2" fill="#262528"/><rect x="121.6" y="1003.2" width="2" height="2" fill="#262528"/><rect x="121.6" y="1044.0" width="2" height="2" fill="#262528"/><rect x="162.4" y="840.0" width="2" height="2" fill="#262528"/><rect x="162.4" y="880.8" width="2" height="2" fill="#262528"/><rect x="162.4" y="921.6" width="2" height="2" fill="#262528"/><rect x="162.4" y="962.4" width="2" height="2" fill="#262528"/><rect x="162.4" y="1003.2" width="2" height="2" fill="#262528"/><rect x="162.4" y="1044.0" width="2" height="2" fill="#262528"/><rect x="203.2" y="840.0" width="2" height="2" fill="#262528"/><rect x="203.2" y="880.8" width="2" height="2" fill="#262528"/><rect x="203.2" y="921.6" width="2" height="2" fill="#262528"/><rect x="203.2" y="962.4" width="2" height="2" fill="#262528"/><rect x="203.2" y="1003.2" width="2" height="2" fill="#262528"/><rect x="203.2" y="1044.0" width="2" height="2" fill="#262528"/><rect x="244.0" y="840.0" width="2" height="2" fill="#262528"/><rect x="244.0" y="880.8" width="2" height="2" fill="#262528"/><rect x="244.0" y="921.6" width="2" height="2" fill="#262528"/><rect x="244.0" y="962.4" width="2" height="2" fill="#262528"/><rect x="244.0" y="1003.2" width="2" height="2" fill="#262528"/><rect x="244.0" y="1044.0" width="2" height="2" fill="#262528"/><rect x="284.8" y="840.0" width="2" height="2" fill="#262528"/><rect x="284.8" y="880.8" width="2" height="2" fill="#262528"/><rect x="284.8" y="921.6" width="2" height="2" fill="#262528"/><rect x="284.8" y="962.4" width="2" height="2" fill="#262528"/><rect x="284.8" y="1003.2" width="2" height="2" fill="#262528"/><rect x="284.8" y="1044.0" width="2" height="2" fill="#262528"/><rect x="325.6" y="840.0" width="2" height="2" fill="#262528"/><rect x="325.6" y="880.8" width="2" height="2" fill="#262528"/><rect x="325.6" y="921.6" width="2" height="2" fill="#262528"/><rect x="325.6" y="962.4" width="2" height="2" fill="#262528"/><rect x="325.6" y="1003.2" width="2" height="2" fill="#262528"/><rect x="325.6" y="1044.0" width="2" height="2" fill="#262528"/><rect x="366.4" y="840.0" width="2" height="2" fill="#262528"/><rect x="366.4" y="880.8" width="2" height="2" fill="#262528"/><rect x="366.4" y="921.6" width="2" height="2" fill="#262528"/><rect x="366.4" y="962.4" width="2" height="2" fill="#262528"/><rect x="366.4" y="1003.2" width="2" height="2" fill="#262528"/><rect x="366.4" y="1044.0" width="2" height="2" fill="#262528"/><rect x="407.2" y="840.0" width="2" height="2" fill="#262528"/><rect x="407.2" y="880.8" width="2" height="2" fill="#262528"/><rect x="407.2" y="921.6" width="2" height="2" fill="#262528"/><rect x="407.2" y="962.4" width="2" height="2" fill="#262528"/><rect x="407.2" y="1003.2" width="2" height="2" fill="#262528"/><rect x="407.2" y="1044.0" width="2" height="2" fill="#262528"/><rect x="448.0" y="840.0" width="2" height="2" fill="#262528"/><rect x="448.0" y="880.8" width="2" height="2" fill="#262528"/><rect x="448.0" y="921.6" width="2" height="2" fill="#262528"/><rect x="448.0" y="962.4" width="2" height="2" fill="#262528"/><rect x="448.0" y="1003.2" width="2" height="2" fill="#262528"/><rect x="448.0" y="1044.0" width="2" height="2" fill="#262528"/><rect x="488.8" y="840.0" width="2" height="2" fill="#262528"/><rect x="488.8" y="880.8" width="2" height="2" fill="#262528"/><rect x="488.8" y="921.6" width="2" height="2" fill="#262528"/><rect x="488.8" y="962.4" width="2" height="2" fill="#262528"/><rect x="488.8" y="1003.2" width="2" height="2" fill="#262528"/><rect x="488.8" y="1044.0" width="2" height="2" fill="#262528"/><rect x="529.6" y="840.0" width="2" height="2" fill="#262528"/><rect x="529.6" y="880.8" width="2" height="2" fill="#262528"/><rect x="529.6" y="921.6" width="2" height="2" fill="#262528"/><rect x="529.6" y="962.4" width="2" height="2" fill="#262528"/><rect x="529.6" y="1003.2" width="2" height="2" fill="#262528"/><rect x="529.6" y="1044.0" width="2" height="2" fill="#262528"/><rect x="570.4" y="840.0" width="2" height="2" fill="#262528"/><rect x="570.4" y="880.8" width="2" height="2" fill="#262528"/><rect x="570.4" y="921.6" width="2" height="2" fill="#262528"/><rect x="570.4" y="962.4" width="2" height="2" fill="#262528"/><rect x="570.4" y="1003.2" width="2" height="2" fill="#262528"/><rect x="570.4" y="1044.0" width="2" height="2" fill="#262528"/><rect x="611.2" y="840.0" width="2" height="2" fill="#262528"/><rect x="611.2" y="880.8" width="2" height="2" fill="#262528"/><rect x="611.2" y="921.6" width="2" height="2" fill="#262528"/><rect x="611.2" y="962.4" width="2" height="2" fill="#262528"/><rect x="611.2" y="1003.2" width="2" height="2" fill="#262528"/><rect x="611.2" y="1044.0" width="2" height="2" fill="#262528"/><rect x="652.0" y="840.0" width="2" height="2" fill="#262528"/><rect x="652.0" y="880.8" width="2" height="2" fill="#262528"/><rect x="652.0" y="921.6" width="2" height="2" fill="#262528"/><rect x="652.0" y="962.4" width="2" height="2" fill="#262528"/><rect x="652.0" y="1003.2" width="2" height="2" fill="#262528"/><rect x="652.0" y="1044.0" width="2" height="2" fill="#262528"/><rect x="692.8" y="840.0" width="2" height="2" fill="#262528"/><rect x="692.8" y="880.8" width="2" height="2" fill="#262528"/><rect x="692.8" y="921.6" width="2" height="2" fill="#262528"/><rect x="692.8" y="962.4" width="2" height="2" fill="#262528"/><rect x="692.8" y="1003.2" width="2" height="2" fill="#262528"/><rect x="692.8" y="1044.0" width="2" height="2" fill="#262528"/><rect x="733.6" y="840.0" width="2" height="2" fill="#262528"/><rect x="733.6" y="880.8" width="2" height="2" fill="#262528"/><rect x="733.6" y="921.6" width="2" height="2" fill="#262528"/><rect x="733.6" y="962.4" width="2" height="2" fill="#262528"/><rect x="733.6" y="1003.2" width="2" height="2" fill="#262528"/><rect x="733.6" y="1044.0" width="2" height="2" fill="#262528"/><rect x="774.4" y="840.0" width="2" height="2" fill="#262528"/><rect x="774.4" y="880.8" width="2" height="2" fill="#262528"/><rect x="774.4" y="921.6" width="2" height="2" fill="#262528"/><rect x="774.4" y="962.4" width="2" height="2" fill="#262528"/><rect x="774.4" y="1003.2" width="2" height="2" fill="#262528"/><rect x="774.4" y="1044.0" width="2" height="2" fill="#262528"/><rect x="815.2" y="840.0" width="2" height="2" fill="#262528"/><rect x="815.2" y="880.8" width="2" height="2" fill="#262528"/><rect x="815.2" y="921.6" width="2" height="2" fill="#262528"/><rect x="815.2" y="962.4" width="2" height="2" fill="#262528"/><rect x="815.2" y="1003.2" width="2" height="2" fill="#262528"/><rect x="815.2" y="1044.0" width="2" height="2" fill="#262528"/><rect x="856.0" y="840.0" width="2" height="2" fill="#262528"/><rect x="856.0" y="880.8" width="2" height="2" fill="#262528"/><rect x="856.0" y="921.6" width="2" height="2" fill="#262528"/><rect x="856.0" y="962.4" width="2" height="2" fill="#262528"/><rect x="856.0" y="1003.2" width="2" height="2" fill="#262528"/><rect x="856.0" y="1044.0" width="2" height="2" fill="#262528"/><rect x="896.8" y="840.0" width="2" height="2" fill="#262528"/><rect x="896.8" y="880.8" width="2" height="2" fill="#262528"/><rect x="896.8" y="921.6" width="2" height="2" fill="#262528"/><rect x="896.8" y="962.4" width="2" height="2" fill="#262528"/><rect x="896.8" y="1003.2" width="2" height="2" fill="#262528"/><rect x="896.8" y="1044.0" width="2" height="2" fill="#262528"/><rect x="937.6" y="840.0" width="2" height="2" fill="#262528"/><rect x="937.6" y="880.8" width="2" height="2" fill="#262528"/><rect x="937.6" y="921.6" width="2" height="2" fill="#262528"/><rect x="937.6" y="962.4" width="2" height="2" fill="#262528"/><rect x="937.6" y="1003.2" width="2" height="2" fill="#262528"/><rect x="937.6" y="1044.0" width="2" height="2" fill="#262528"/><rect x="978.4" y="840.0" width="2" height="2" fill="#262528"/><rect x="978.4" y="880.8" width="2" height="2" fill="#262528"/><rect x="978.4" y="921.6" width="2" height="2" fill="#262528"/><rect x="978.4" y="962.4" width="2" height="2" fill="#262528"/><rect x="978.4" y="1003.2" width="2" height="2" fill="#262528"/><rect x="978.4" y="1044.0" width="2" height="2" fill="#262528"/><rect x="1019.2" y="840.0" width="2" height="2" fill="#262528"/><rect x="1019.2" y="880.8" width="2" height="2" fill="#262528"/><rect x="1019.2" y="921.6" width="2" height="2" fill="#262528"/><rect x="1019.2" y="962.4" width="2" height="2" fill="#262528"/><rect x="1019.2" y="1003.2" width="2" height="2" fill="#262528"/><rect x="1019.2" y="1044.0" width="2" height="2" fill="#262528"/><rect x="1060.0" y="840.0" width="2" height="2" fill="#262528"/><rect x="1060.0" y="880.8" width="2" height="2" fill="#262528"/><rect x="1060.0" y="921.6" width="2" height="2" fill="#262528"/><rect x="1060.0" y="962.4" width="2" height="2" fill="#262528"/><rect x="1060.0" y="1003.2" width="2" height="2" fill="#262528"/><rect x="1060.0" y="1044.0" width="2" height="2" fill="#262528"/><rect x="1100.8" y="840.0" width="2" height="2" fill="#262528"/><rect x="1100.8" y="880.8" width="2" height="2" fill="#262528"/><rect x="1100.8" y="921.6" width="2" height="2" fill="#262528"/><rect x="1100.8" y="962.4" width="2" height="2" fill="#262528"/><rect x="1100.8" y="1003.2" width="2" height="2" fill="#262528"/><rect x="1100.8" y="1044.0" width="2" height="2" fill="#262528"/><rect x="1141.6" y="840.0" width="2" height="2" fill="#262528"/><rect x="1141.6" y="880.8" width="2" height="2" fill="#262528"/><rect x="1141.6" y="921.6" width="2" height="2" fill="#262528"/><rect x="1141.6" y="962.4" width="2" height="2" fill="#262528"/><rect x="1141.6" y="1003.2" width="2" height="2" fill="#262528"/><rect x="1141.6" y="1044.0" width="2" height="2" fill="#262528"/><rect x="1182.4" y="840.0" width="2" height="2" fill="#262528"/><rect x="1182.4" y="880.8" width="2" height="2" fill="#262528"/><rect x="1182.4" y="921.6" width="2" height="2" fill="#262528"/><rect x="1182.4" y="962.4" width="2" height="2" fill="#262528"/><rect x="1182.4" y="1003.2" width="2" height="2" fill="#262528"/><rect x="1182.4" y="1044.0" width="2" height="2" fill="#262528"/><rect x="1223.2" y="840.0" width="2" height="2" fill="#262528"/><rect x="1223.2" y="880.8" width="2" height="2" fill="#262528"/><rect x="1223.2" y="921.6" width="2" height="2" fill="#262528"/><rect x="1223.2" y="962.4" width="2" height="2" fill="#262528"/><rect x="1223.2" y="1003.2" width="2" height="2" fill="#262528"/><rect x="1223.2" y="1044.0" width="2" height="2" fill="#262528"/><rect x="1264.0" y="840.0" width="2" height="2" fill="#262528"/><rect x="1264.0" y="880.8" width="2" height="2" fill="#262528"/><rect x="1264.0" y="921.6" width="2" height="2" fill="#262528"/><rect x="1264.0" y="962.4" width="2" height="2" fill="#262528"/><rect x="1264.0" y="1003.2" width="2" height="2" fill="#262528"/><rect x="1264.0" y="1044.0" width="2" height="2" fill="#262528"/><rect x="1304.8" y="840.0" width="2" height="2" fill="#262528"/><rect x="1304.8" y="880.8" width="2" height="2" fill="#262528"/><rect x="1304.8" y="921.6" width="2" height="2" fill="#262528"/><rect x="1304.8" y="962.4" width="2" height="2" fill="#262528"/><rect x="1304.8" y="1003.2" width="2" height="2" fill="#262528"/><rect x="1304.8" y="1044.0" width="2" height="2" fill="#262528"/><rect x="1345.6" y="840.0" width="2" height="2" fill="#262528"/><rect x="1345.6" y="880.8" width="2" height="2" fill="#262528"/><rect x="1345.6" y="921.6" width="2" height="2" fill="#262528"/><rect x="1345.6" y="962.4" width="2" height="2" fill="#262528"/><rect x="1345.6" y="1003.2" width="2" height="2" fill="#262528"/><rect x="1345.6" y="1044.0" width="2" height="2" fill="#262528"/><path d="M502 893 C511.35 893 509.65 916 519 916" fill="none" stroke="#111" stroke-width="2.9" opacity="0.6"/><path d="M502 893 C511.35 893 509.65 916 519 916" fill="none" stroke="#6a5ad0" stroke-width="1.9"/><path d="M575 893 C594.25 893 590.75 925 610 925" fill="none" stroke="#111" stroke-width="2.9" opacity="0.6"/><path d="M575 893 C594.25 893 590.75 925 610 925" fill="none" stroke="#6a5ad0" stroke-width="1.9"/><defs><linearGradient id="lg1" x1="0" x2="1"><stop offset="0" stop-color="#d0d040"/><stop offset="1" stop-color="#a0a0a0"/></linearGradient><linearGradient id="lg2" x1="0" y1="0" x2="0" y2="1"><stop offset="0" stop-color="#d0d040"/><stop offset="1" stop-color="#b0b0a0"/></linearGradient><linearGradient id="ramp" x1="0" x2="1"><stop offset="0" stop-color="#fff"/><stop offset="0.5" stop-color="#e8e8e8"/><stop offset="1" stop-color="#b8b8b8"/></linearGradient></defs><path d="M667 893 C685.7 893 682.3 906 701 906" fill="none" stroke="#111" stroke-width="2.9" opacity="0.6"/><path d="M667 893 C685.7 893 682.3 906 701 906" fill="none" stroke="url(#lg1)" stroke-width="1.9"/><path d="M797 841 C823.4 841 818.6 947 845 947" fill="none" stroke="#111" stroke-width="2.9" opacity="0.6"/><path d="M797 841 C823.4 841 818.6 947 845 947" fill="none" stroke="url(#lg2)" stroke-width="1.9"/><path d="M799 938 C824.3 938 819.7 955 845 955" fill="none" stroke="#111" stroke-width="2.9" opacity="0.6"/><path d="M799 938 C824.3 938 819.7 955 845 955" fill="none" stroke="#60c060" stroke-width="1.9"/><path d="M804 983 C826.55 983 822.45 964 845 964" fill="none" stroke="#111" stroke-width="2.9" opacity="0.6"/><path d="M804 983 C826.55 983 822.45 964 845 964" fill="none" stroke="#60c060" stroke-width="1.9"/><path d="M901 936 C920.25 936 916.75 994 936 994" fill="none" stroke="#111" stroke-width="2.9" opacity="0.6"/><path d="M901 936 C920.25 936 916.75 994 936 994" fill="none" stroke="#60c060" stroke-width="1.9"/><path d="M906 1015 C922.5 1015 919.5 1004 936 1004" fill="none" stroke="#111" stroke-width="2.9" opacity="0.6"/><path d="M906 1015 C922.5 1015 919.5 1004 936 1004" fill="none" stroke="#60c060" stroke-width="1.9"/><path d="M992 975 C1021.7 975 1016.3 940 1046 940" fill="none" stroke="#111" stroke-width="2.9" opacity="0.6"/><path d="M992 975 C1021.7 975 1016.3 940 1046 940" fill="none" stroke="#60c060" stroke-width="1.9"/><rect x="445.5" y="879.5" width="56" height="96" rx="2" fill="#1a1a1a" opacity="0.7"/><rect x="446" y="880" width="55" height="95" rx="2" fill="#303030"/><path d="M446 888 V882 Q446 880 448 880 H499 Q501 880 501 882 V888Z" fill="#a03050"/><path d="M449 883 l1.5 1.5 l1.5 -1.5" fill="none" stroke="#ddd" stroke-width="0.7"/><text x="455" y="886" font-size="5" fill="#dcdcdc" font-family="Liberation Sans">Texture Coordinate</text><text x="497" y="895" font-size="4.6" fill="#bdbdbd" font-family="Liberation Sans" text-anchor="end">Generated</text><circle cx="502" cy="893.5" r="1.4" fill="#6a5ad0" stroke="#111" stroke-width="0.4"/><text x="497" y="904" font-size="4.6" fill="#bdbdbd" font-family="Liberation Sans" text-anchor="end">Normal</text><circle cx="502" cy="902.5" r="1.4" fill="#6a5ad0" stroke="#111" stroke-width="0.4"/><text x="497" y="913" font-size="4.6" fill="#bdbdbd" font-family="Liberation Sans" text-anchor="end">UV</text><circle cx="502" cy="911.5" r="1.4" fill="#6a5ad0" stroke="#111" stroke-width="0.4"/><text x="497" y="922" font-size="4.6" fill="#bdbdbd" font-family="Liberation Sans" text-anchor="end">Object</text><circle cx="502" cy="920.5" r="1.4" fill="#6a5ad0" stroke="#111" stroke-width="0.4"/><text x="497" y="931" font-size="4.6" fill="#bdbdbd" font-family="Liberation Sans" text-anchor="end">Camera</text><circle cx="502" cy="929.5" r="1.4" fill="#6a5ad0" stroke="#111" stroke-width="0.4"/><text x="497" y="940" font-size="4.6" fill="#bdbdbd" font-family="Liberation Sans" text-anchor="end">Window</text><circle cx="502" cy="938.5" r="1.4" fill="#6a5ad0" stroke="#111" stroke-width="0.4"/><text x="497" y="949" font-size="4.6" fill="#bdbdbd" font-family="Liberation Sans" text-anchor="end">Reflection</text><circle cx="502" cy="947.5" r="1.4" fill="#6a5ad0" stroke="#111" stroke-width="0.4"/><text x="450" y="962" font-size="4.6" fill="#bdbdbd" font-family="Liberation Sans" text-anchor="start">Object</text><rect x="466" y="957" width="31" height="7" rx="1" fill="#222"/><rect x="469" y="958.5" width="4" height="4" fill="#ddd"/><rect x="449" y="967" width="4" height="4" rx="1" fill="#444"/><text x="456" y="971" font-size="4.6" fill="#bdbdbd" font-family="Liberation Sans" text-anchor="start">From Instancer</text><rect x="518.5" y="879.5" width="57" height="143" rx="2" fill="#1a1a1a" opacity="0.7"/><rect x="519" y="880" width="56" height="142" rx="2" fill="#303030"/><path d="M519 888 V882 Q519 880 521 880 H573 Q575 880 575 882 V888Z" fill="#5a48a8"/><path d="M522 883 l1.5 1.5 l1.5 -1.5" fill="none" stroke="#ddd" stroke-width="0.7"/><text x="528" y="886" font-size="5" fill="#dcdcdc" font-family="Liberation Sans">Mapping</text><text x="571" y="895" font-size="4.6" fill="#bdbdbd" font-family="Liberation Sans" text-anchor="end">Vector</text><circle cx="575" cy="893" r="1.4" fill="#6a5ad0" stroke="#111" stroke-width="0.4"/><text x="524" y="906" font-size="4.6" fill="#bdbdbd" font-family="Liberation Sans" text-anchor="start">Type</text><rect x="540" y="901" width="32" height="7" rx="1" fill="#2a2a2a"/><text x="545" y="906" font-size="4.6" fill="#bdbdbd" font-family="Liberation Sans" text-anchor="start">Point</text><text x="524" y="918" font-size="4.6" fill="#bdbdbd" font-family="Liberation Sans" text-anchor="start">Vector</text><circle cx="519" cy="916" r="1.4" fill="#6a5ad0" stroke="#111" stroke-width="0.4"/><text x="524" y="927" font-size="4.6" fill="#bdbdbd" font-family="Liberation Sans" text-anchor="start">Location</text><circle cx="519" cy="925" r="1.4" fill="#6a5ad0" stroke="#111" stroke-width="0.4"/><rect x="522" y="930" width="50" height="7" rx="1" fill="#444"/><text x="528" y="935.5" font-size="4.6" fill="#bdbdbd" font-family="Liberation Sans" text-anchor="start">X</text><text x="568" y="935.5" font-size="4.6" fill="#bdbdbd" font-family="Liberation Sans" text-anchor="end">-0.5m</text><rect x="522" y="938" width="50" height="7" rx="1" fill="#444"/><text x="528" y="943.5" font-size="4.6" fill="#bdbdbd" font-family="Liberation Sans" text-anchor="start">Y</text><text x="568" y="943.5" font-size="4.6" fill="#bdbdbd" font-family="Liberation Sans" text-anchor="end">-0.5m</text><rect x="522" y="946" width="50" height="7" rx="1" fill="#444"/><text x="528" y="951.5" font-size="4.6" fill="#bdbdbd" font-family="Liberation Sans" text-anchor="start">Z</text><text x="568" y="951.5" font-size="4.6" fill="#bdbdbd" font-family="Liberation Sans" text-anchor="end">0m</text><text x="524" y="960" font-size="4.6" fill="#bdbdbd" font-family="Liberation Sans" text-anchor="start">Rotation</text><circle cx="519" cy="958" r="1.4" fill="#6a5ad0" stroke="#111" stroke-width="0.4"/><rect x="522" y="963" width="50" height="7" rx="1" fill="#444"/><text x="528" y="968.5" font-size="4.6" fill="#bdbdbd" font-family="Liberation Sans" text-anchor="start">X</text><text x="568" y="968.5" font-size="4.6" fill="#bdbdbd" font-family="Liberation Sans" text-anchor="end">0°</text><rect x="522" y="971" width="50" height="7" rx="1" fill="#444"/><text x="528" y="976.5" font-size="4.6" fill="#bdbdbd" font-family="Liberation Sans" text-anchor="start">Y</text><text x="568" y="976.5" font-size="4.6" fill="#bdbdbd" font-family="Liberation Sans" text-anchor="end">0°</text><rect x="522" y="979" width="50" height="7" rx="1" fill="#444"/><text x="528" y="984.5" font-size="4.6" fill="#bdbdbd" font-family="Liberation Sans" text-anchor="start">Z</text><text x="568" y="984.5" font-size="4.6" fill="#bdbdbd" font-family="Liberation Sans" text-anchor="end">0°</text><text x="524" y="993" font-size="4.6" fill="#bdbdbd" font-family="Liberation Sans" text-anchor="start">Scale</text><circle cx="519" cy="991" r="1.4" fill="#6a5ad0" stroke="#111" stroke-width="0.4"/><rect x="522" y="996" width="50" height="7" rx="1" fill="#444"/><text x="528" y="1001.5" font-size="4.6" fill="#bdbdbd" font-family="Liberation Sans" text-anchor="start">X</text><text x="568" y="1001.5" font-size="4.6" fill="#bdbdbd" font-family="Liberation Sans" text-anchor="end">1.000</text><rect x="522" y="1004" width="50" height="7" rx="1" fill="#444"/><text x="528" y="1009.5" font-size="4.6" fill="#bdbdbd" font-family="Liberation Sans" text-anchor="start">Y</text><text x="568" y="1009.5" font-size="4.6" fill="#bdbdbd" font-family="Liberation Sans" text-anchor="end">1.000</text><rect x="522" y="1012" width="50" height="7" rx="1" fill="#444"/><text x="528" y="1017.5" font-size="4.6" fill="#bdbdbd" font-family="Liberation Sans" text-anchor="start">Z</text><text x="568" y="1017.5" font-size="4.6" fill="#bdbdbd" font-family="Liberation Sans" text-anchor="end">1.000</text><rect x="609.5" y="879.5" width="58" height="51" rx="2" fill="#1a1a1a" opacity="0.7"/><rect x="610" y="880" width="57" height="50" rx="2" fill="#303030"/><path d="M610 887 V882 Q610 880 612 880 H665 Q667 880 667 882 V887Z" fill="#8a4a20"/><path d="M613 883 l1.5 1.5 l1.5 -1.5" fill="none" stroke="#ddd" stroke-width="0.7"/><text x="619" y="886" font-size="5" fill="#dcdcdc" font-family="Liberation Sans">Gradient Texture</text><text x="663" y="895" font-size="4.6" fill="#bdbdbd" font-family="Liberation Sans" text-anchor="end">Color</text><circle cx="667" cy="893" r="1.4" fill="#c8c840" stroke="#111" stroke-width="0.4"/><text x="663" y="904" font-size="4.6" fill="#bdbdbd" font-family="Liberation Sans" text-anchor="end">Fac</text><circle cx="667" cy="902" r="1.4" fill="#a0a0a0" stroke="#111" stroke-width="0.4"/><rect x="614" y="910" width="49" height="7" rx="1" fill="#2a2a2a"/><text x="617" y="915.5" font-size="4.6" fill="#bdbdbd" font-family="Liberation Sans" text-anchor="start">Spherical</text><text x="615" y="927" font-size="4.6" fill="#bdbdbd" font-family="Liberation Sans" text-anchor="start">Vector</text><circle cx="610" cy="925" r="1.4" fill="#6a5ad0" stroke="#111" stroke-width="0.4"/><rect x="700.5" y="826.5" width="97" height="87" rx="2" fill="#1a1a1a" opacity="0.7"/><rect x="701" y="827" width="96" height="86" rx="2" fill="#303030"/><path d="M701 835 V829 Q701 827 703 827 H795 Q797 827 797 829 V835Z" fill="#28648a"/><path d="M704 830 l1.5 1.5 l1.5 -1.5" fill="none" stroke="#ddd" stroke-width="0.7"/><text x="710" y="833" font-size="5" fill="#dcdcdc" font-family="Liberation Sans">ColorRamp</text><text x="793" y="843" font-size="4.6" fill="#bdbdbd" font-family="Liberation Sans" text-anchor="end">Color</text><circle cx="797" cy="841" r="1.4" fill="#c8c840" stroke="#111" stroke-width="0.4"/><text x="793" y="852" font-size="4.6" fill="#bdbdbd" font-family="Liberation Sans" text-anchor="end">Alpha</text><circle cx="797" cy="850" r="1.4" fill="#a0a0a0" stroke="#111" stroke-width="0.4"/><path d="M706 862.5 h4 M708 860.5 v4 M714 862.5 h4" stroke="#ddd" stroke-width="0.9"/><rect x="738" y="859" width="27" height="7" rx="1" fill="#2a2a2a"/><rect x="767" y="859" width="25" height="7" rx="1" fill="#2a2a2a"/><text x="742" y="864" font-size="4.6" fill="#bdbdbd" font-family="Liberation Sans" text-anchor="start">RGB</text><text x="770" y="864" font-size="4.6" fill="#bdbdbd" font-family="Liberation Sans" text-anchor="start">Ease</text><rect x="709.5" y="869" width="78" height="8.5" fill="url(#ramp)" stroke="#222" stroke-width="0.6"/><path d="M733 869 V877.5 M772 869 V877.5" stroke="#222" stroke-width="1" stroke-dasharray="1.5 1"/><rect x="705" y="882" width="25" height="7" rx="1" fill="#444"/><rect x="733" y="882" width="60" height="7" rx="1" fill="#444"/><text x="716" y="887.5" font-size="4.6" fill="#bdbdbd" font-family="Liberation Sans" text-anchor="start">0</text><text x="738" y="887.5" font-size="4.6" fill="#bdbdbd" font-family="Liberation Sans" text-anchor="start">Pos</text><text x="789" y="887.5" font-size="4.6" fill="#bdbdbd" font-family="Liberation Sans" text-anchor="end">0.295</text><rect x="705" y="893.5" width="88" height="6.5" fill="#f4f4f4"/><text x="705" y="908" font-size="4.6" fill="#bdbdbd" font-family="Liberation Sans" text-anchor="start">Fac</text><circle cx="701" cy="906" r="1.4" fill="#a0a0a0" stroke="#111" stroke-width="0.4"/><rect x="742.5" y="923.5" width="57" height="41" rx="2" fill="#1a1a1a" opacity="0.7"/><rect x="743" y="924" width="56" height="40" rx="2" fill="#303030"/><path d="M743 931 V926 Q743 924 745 924 H797 Q799 924 799 926 V931Z" fill="#2e6a3a"/><path d="M746 927 l1.5 1.5 l1.5 -1.5" fill="none" stroke="#ddd" stroke-width="0.7"/><text x="752" y="930" font-size="5" fill="#dcdcdc" font-family="Liberation Sans">Emission</text><text x="795" y="940" font-size="4.6" fill="#bdbdbd" font-family="Liberation Sans" text-anchor="end">Emission</text><circle cx="799" cy="938" r="1.4" fill="#60c060" stroke="#111" stroke-width="0.4"/><text x="749" y="950" font-size="4.6" fill="#bdbdbd" font-family="Liberation Sans" text-anchor="start">Color</text><rect x="769" y="945" width="26" height="6" fill="#f0a818"/><circle cx="743" cy="948" r="1.4" fill="#c8c840" stroke="#111" stroke-width="0.4"/><rect x="748" y="953" width="47" height="7" rx="1" fill="#444"/><text x="752" y="958.5" font-size="4.6" fill="#bdbdbd" font-family="Liberation Sans" text-anchor="start">Strength</text><text x="790" y="958.5" font-size="4.6" fill="#bdbdbd" font-family="Liberation Sans" text-anchor="end">5.000</text><circle cx="743" cy="957" r="1.4" fill="#a0a0a0" stroke="#111" stroke-width="0.4"/><rect x="747.5" y="969.5" width="57" height="30" rx="2" fill="#1a1a1a" opacity="0.7"/><rect x="748" y="970" width="56" height="29" rx="2" fill="#303030"/><path d="M748 977 V972 Q748 970 750 970 H802 Q804 970 804 972 V977Z" fill="#2e6a3a"/><path d="M751 973 l1.5 1.5 l1.5 -1.5" fill="none" stroke="#ddd" stroke-width="0.7"/><text x="757" y="976" font-size="5" fill="#dcdcdc" font-family="Liberation Sans">Transparent BSDF</text><text x="800" y="985" font-size="4.6" fill="#bdbdbd" font-family="Liberation Sans" text-anchor="end">BSDF</text><circle cx="804" cy="983" r="1.4" fill="#60c060" stroke="#111" stroke-width="0.4"/><text x="753" y="995" font-size="4.6" fill="#bdbdbd" font-family="Liberation Sans" text-anchor="start">Color</text><rect x="774" y="990.8" width="26" height="6" fill="#f8f8f8"/><circle cx="748" cy="993" r="1.4" fill="#c8c840" stroke="#111" stroke-width="0.4"/><rect x="844.5" y="922.5" width="57" height="49" rx="2" fill="#1a1a1a" opacity="0.7"/><rect x="845" y="923" width="56" height="48" rx="2" fill="#303030"/><path d="M845 931 V925 Q845 923 847 923 H899 Q901 923 901 925 V931Z" fill="#2e6a3a"/><path d="M848 926 l1.5 1.5 l1.5 -1.5" fill="none" stroke="#ddd" stroke-width="0.7"/><text x="854" y="929" font-size="5" fill="#dcdcdc" font-family="Liberation Sans">Mix Shader</text><text x="897" y="938" font-size="4.6" fill="#bdbdbd" font-family="Liberation Sans" text-anchor="end">Shader</text><circle cx="901" cy="936" r="1.4" fill="#60c060" stroke="#111" stroke-width="0.4"/><text x="850" y="949" font-size="4.6" fill="#bdbdbd" font-family="Liberation Sans" text-anchor="start">Fac</text><circle cx="845" cy="947" r="1.4" fill="#a0a0a0" stroke="#111" stroke-width="0.4"/><text x="850" y="957" font-size="4.6" fill="#bdbdbd" font-family="Liberation Sans" text-anchor="start">Shader</text><circle cx="845" cy="955" r="1.4" fill="#60c060" stroke="#111" stroke-width="0.4"/><text x="850" y="966" font-size="4.6" fill="#bdbdbd" font-family="Liberation Sans" text-anchor="start">Shader</text><circle cx="845" cy="964" r="1.4" fill="#60c060" stroke="#111" stroke-width="0.4"/><rect x="935.5" y="961.5" width="57" height="48" rx="2" fill="#1a1a1a" opacity="0.7"/><rect x="936" y="962" width="56" height="47" rx="2" fill="#303030"/><path d="M936 970 V964 Q936 962 938 962 H990 Q992 962 992 964 V970Z" fill="#2e6a3a"/><path d="M939 965 l1.5 1.5 l1.5 -1.5" fill="none" stroke="#ddd" stroke-width="0.7"/><text x="945" y="968" font-size="5" fill="#dcdcdc" font-family="Liberation Sans">Mix Shader</text><text x="988" y="977" font-size="4.6" fill="#bdbdbd" font-family="Liberation Sans" text-anchor="end">Shader</text><circle cx="992" cy="975" r="1.4" fill="#60c060" stroke="#111" stroke-width="0.4"/><rect x="940" y="982" width="47" height="7" rx="1" fill="#4a8a3a"/><text x="944" y="987.5" font-size="4.6" fill="#bdbdbd" font-family="Liberation Sans" text-anchor="start">Fac</text><text x="984" y="987.5" font-size="4.6" fill="#bdbdbd" font-family="Liberation Sans" text-anchor="end">1.000</text><circle cx="936" cy="985.5" r="1.4" fill="#a0a0a0" stroke="#111" stroke-width="0.4"/><text x="941" y="996" font-size="4.6" fill="#bdbdbd" font-family="Liberation Sans" text-anchor="start">Shader</text><circle cx="936" cy="994" r="1.4" fill="#60c060" stroke="#111" stroke-width="0.4"/><text x="941" y="1005" font-size="4.6" fill="#bdbdbd" font-family="Liberation Sans" text-anchor="start">Shader</text><circle cx="936" cy="1004" r="1.4" fill="#60c060" stroke="#111" stroke-width="0.4"/><rect x="849.5" y="1001.5" width="57" height="31" rx="2" fill="#1a1a1a" opacity="0.7"/><rect x="850" y="1002" width="56" height="30" rx="2" fill="#303030"/><path d="M850 1009 V1004 Q850 1002 852 1002 H904 Q906 1002 906 1004 V1009Z" fill="#2e6a3a"/><path d="M853 1005 l1.5 1.5 l1.5 -1.5" fill="none" stroke="#ddd" stroke-width="0.7"/><text x="859" y="1008" font-size="5" fill="#dcdcdc" font-family="Liberation Sans">Transparent BSDF</text><text x="902" y="1017" font-size="4.6" fill="#bdbdbd" font-family="Liberation Sans" text-anchor="end">BSDF</text><circle cx="906" cy="1015" r="1.4" fill="#60c060" stroke="#111" stroke-width="0.4"/><text x="855" y="1027" font-size="4.6" fill="#bdbdbd" font-family="Liberation Sans" text-anchor="start">Color</text><rect x="876" y="1022.7" width="26" height="6.3" fill="#f8f8f8"/><circle cx="850" cy="1025.5" r="1.4" fill="#c8c840" stroke="#111" stroke-width="0.4"/><rect x="1045.5" y="914.5" width="57" height="50" rx="2" fill="#1a1a1a" opacity="0.7"/><rect x="1046" y="915" width="56" height="49" rx="2" fill="#303030"/><path d="M1046 924 V917 Q1046 915 1048 915 H1100 Q1102 915 1102 917 V924Z" fill="#5a2030"/><path d="M1049 918 l1.5 1.5 l1.5 -1.5" fill="none" stroke="#ddd" stroke-width="0.7"/><text x="1055" y="921" font-size="5" fill="#dcdcdc" font-family="Liberation Sans">Material Output</text><rect x="1050" y="927" width="48" height="7" rx="1" fill="#2a2a2a"/><text x="1054" y="932.5" font-size="4.6" fill="#bdbdbd" font-family="Liberation Sans" text-anchor="start">All</text><text x="1051" y="942" font-size="4.6" fill="#bdbdbd" font-family="Liberation Sans" text-anchor="start">Surface</text><circle cx="1046" cy="940" r="1.4" fill="#60c060" stroke="#111" stroke-width="0.4"/><text x="1051" y="951" font-size="4.6" fill="#bdbdbd" font-family="Liberation Sans" text-anchor="start">Volume</text><circle cx="1046" cy="949" r="1.4" fill="#60c060" stroke="#111" stroke-width="0.4"/><text x="1051" y="960" font-size="4.6" fill="#bdbdbd" font-family="Liberation Sans" text-anchor="start">Displacement</text><circle cx="1046" cy="958" r="1.4" fill="#6a5ad0" stroke="#111" stroke-width="0.4"/></svg>
<div style="position:absolute;left:10px;top:1053px;width:1345px;height:3px;background:#38373a;border-radius:1.5px;"></div>
<div style="position:absolute;left:1358px;top:820px;width:3px;height:232px;background:#38373a;border-radius:1.5px;"></div>
<div style="position:absolute;left:1366px;top:808px;width:199px;height:251px;background:#303030;border-radius:0px;"></div>
<div style="position:absolute;left:1374px;top:810px;width:183px;height:91px;background:#383838;border-radius:5px;"></div>
<svg style="position:absolute;left:0px;top:0px;" width="1920" height="1080" viewBox="0 0 1920 1080"><path d="M1382 821 l4.5 4.5 l4.5 -4.5" fill="none" stroke="#ccc" stroke-width="1.1"/><rect x="1540" y="821" width="1.5" height="1.5" fill="#777"/><rect x="1540" y="824" width="1.5" height="1.5" fill="#777"/><rect x="1543" y="821" width="1.5" height="1.5" fill="#777"/><rect x="1543" y="824" width="1.5" height="1.5" fill="#777"/><rect x="1546" y="821" width="1.5" height="1.5" fill="#777"/><rect x="1546" y="824" width="1.5" height="1.5" fill="#777"/><rect x="1549" y="821" width="1.5" height="1.5" fill="#777"/><rect x="1549" y="824" width="1.5" height="1.5" fill="#777"/></svg>
<div class="t" style="left:1396px;top:818.85px;font-size:11.4px;color:#e6e6e6;">Active Tool</div>
<svg style="position:absolute;left:1388px;top:841px;" width="24" height="23" viewBox="0 0 24 23"><rect x="1" y="1" width="22" height="21" fill="none" stroke="#e0a030" stroke-width="1.3" stroke-dasharray="3 2"/><path d="M9 6 L17 13 L12.5 13.5 L9 18Z" fill="#e6e6e6"/></svg>
<div class="t" style="left:1420px;top:848.35px;font-size:11.4px;color:#d0d0d0;">Select Box</div>
<div style="position:absolute;left:1383px;top:874px;width:56px;height:18px;background:#545454;border-radius:4px;"></div>
<div style="position:absolute;left:1383px;top:874px;width:19px;height:18px;background:#4772b3;border-radius:4px;border-top-right-radius:0;border-bottom-right-radius:0"></div>
<svg style="position:absolute;left:1383px;top:874px;" width="56" height="18" viewBox="0 0 56 18"><rect x="3.5" y="3.5" width="12" height="11" fill="none" stroke="#fff" stroke-width="1.2" stroke-dasharray="2 1.5"/><path d="M22 8 H27 V3 H35 V11 H30 V15 H22 Z" fill="#d9d9d9"/><rect x="40.5" y="6.5" width="8" height="8" fill="none" stroke="#d9d9d9" stroke-width="1.2" stroke-dasharray="1.6 1.4"/><path d="M45 3 H53 V11 H49 V7 H45 Z" fill="#d9d9d9"/></svg>
<svg style="position:absolute;left:0px;top:0px;" width="1920" height="1080" viewBox="0 0 1920 1080"><path d="M1565 813 H1578 Q1582 813 1582 817 V839 Q1582 843 1578 843 H1565Z" fill="#2a2a2a" stroke="#3d3d3d" stroke-width="0.8"/><text x="1577.5" y="828.0" font-size="11.4" fill="#e0e0e0" font-family="Liberation Sans" text-anchor="middle" transform="rotate(-90 1577.5 828.0)">No</text><path d="M1565 847 H1578 Q1582 847 1582 851 V871 Q1582 875 1578 875 H1565Z" fill="#3a3a3a" stroke="#3d3d3d" stroke-width="0.8"/><text x="1577.5" y="861.0" font-size="11.4" fill="#e0e0e0" font-family="Liberation Sans" text-anchor="middle" transform="rotate(-90 1577.5 861.0)">T</text><path d="M1565 880 H1578 Q1582 880 1582 884 V906 Q1582 910 1578 910 H1565Z" fill="#2a2a2a" stroke="#3d3d3d" stroke-width="0.8"/><text x="1577.5" y="895.0" font-size="11.4" fill="#e0e0e0" font-family="Liberation Sans" text-anchor="middle" transform="rotate(-90 1577.5 895.0)">Vi</text><path d="M1565 913 H1578 Q1582 913 1582 917 V951 Q1582 955 1578 955 H1565Z" fill="#2a2a2a" stroke="#3d3d3d" stroke-width="0.8"/><text x="1577.5" y="934.0" font-size="11.4" fill="#e0e0e0" font-family="Liberation Sans" text-anchor="middle" transform="rotate(-90 1577.5 934.0)">Opti</text><path d="M1565 957 H1578 Q1582 957 1582 961 V1021 Q1582 1025 1578 1025 H1565Z" fill="#2a2a2a" stroke="#3d3d3d" stroke-width="0.8"/><text x="1577.5" y="991.0" font-size="11.4" fill="#e0e0e0" font-family="Liberation Sans" text-anchor="middle" transform="rotate(-90 1577.5 991.0)">Node Wra</text><path d="M1565 1030 H1578 Q1582 1030 1582 1034 V1053 Q1582 1057 1578 1057 H1565Z" fill="#2a2a2a" stroke="#3d3d3d" stroke-width="0.8"/><text x="1577.5" y="1043.5" font-size="11.4" fill="#e0e0e0" font-family="Liberation Sans" text-anchor="middle" transform="rotate(-90 1577.5 1043.5)">It</text></svg>
</body></html>
